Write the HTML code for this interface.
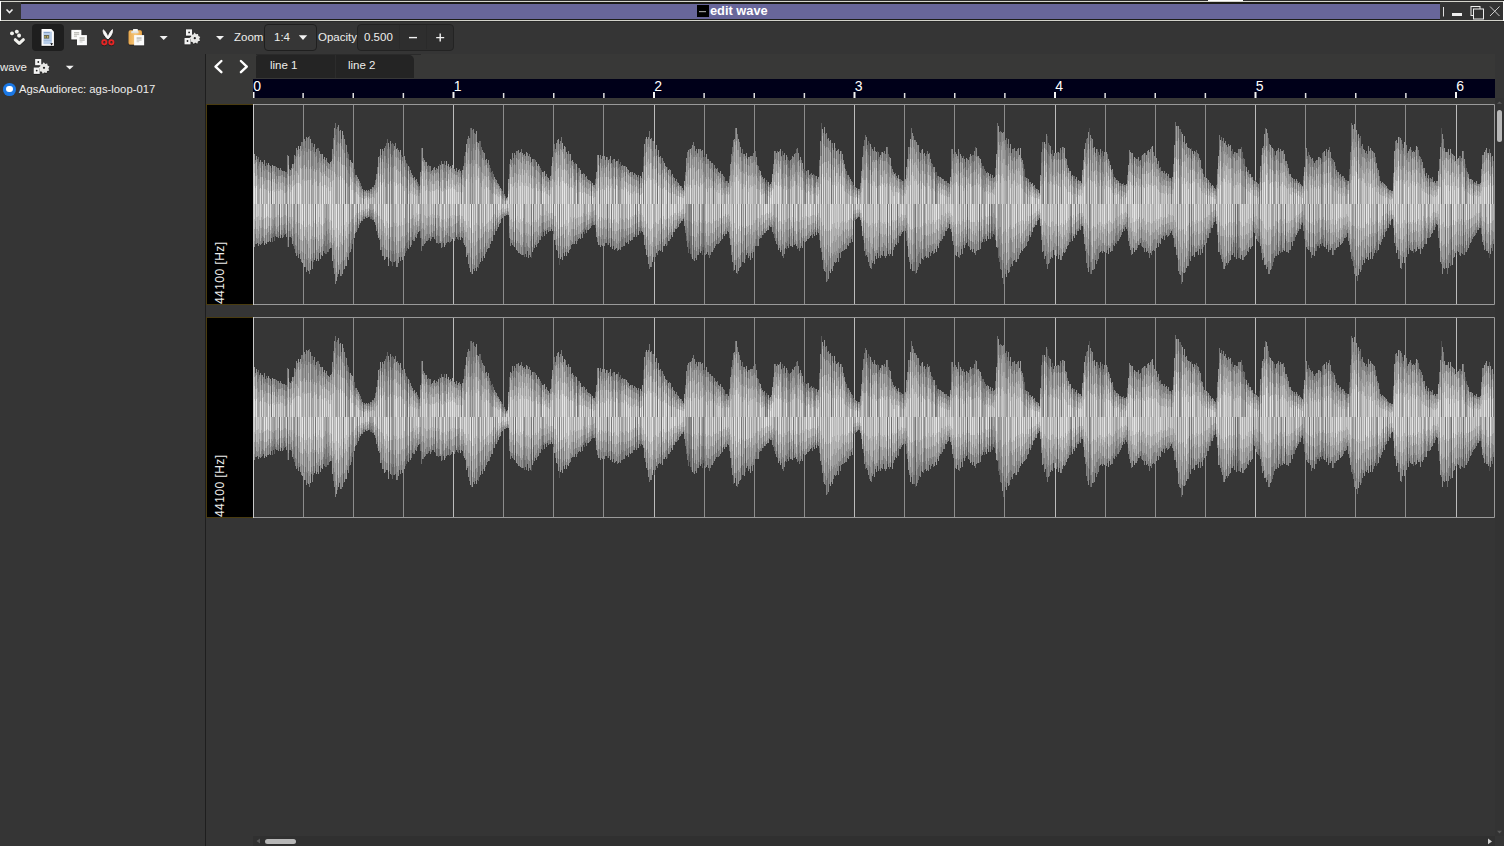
<!DOCTYPE html>
<html><head><meta charset="utf-8">
<style>
*{margin:0;padding:0;box-sizing:border-box}
html,body{width:1504px;height:846px;overflow:hidden;background:#353535;font-family:"Liberation Sans",sans-serif;color:#eeeeec;position:relative}
.a{position:absolute}
.t{position:absolute;white-space:pre;font-size:11.5px;line-height:1;color:#eeeeec}
</style></head><body>
<!-- title bar -->
<div class="a" style="left:0;top:0;width:1504px;height:22px;background:#1c1c18"></div>
<div class="a" style="left:0;top:0;width:1504px;height:1px;background:#2e2e2e"></div>
<div class="a" style="left:0;top:21px;width:1504px;height:1px;background:#2a2a2a"></div>
<div class="a" style="left:0;top:1px;width:1504px;height:1px;background:#d4d4cc"></div>
<div class="a" style="left:0;top:20px;width:1504px;height:1px;background:#d4d4cc"></div>
<div class="a" style="left:0;top:1px;width:1px;height:20px;background:#fff"></div>
<div class="a" style="left:1503px;top:1px;width:1px;height:20px;background:#fff"></div>
<div class="a" style="left:1px;top:2px;width:20px;height:18px;background:#333"></div>
<div class="a" style="left:21px;top:4px;width:1419px;height:15px;background:#68669a"></div>
<div class="a" style="left:1440px;top:2px;width:63px;height:18px;background:#333"></div>
<div class="a" style="left:1208px;top:0;width:35px;height:1px;background:#fff"></div>
<svg class="a" style="left:0;top:0" width="1504" height="22">
 <path d="M6.5 9.5 L9.5 12.5 L12.5 9.5" stroke="#eee" stroke-width="1.6" fill="none"/>
 <rect x="697" y="5" width="12" height="12" fill="#000"/>
 <rect x="699" y="11" width="7" height="1.2" fill="#999"/>
 <line x1="1443.5" y1="7" x2="1443.5" y2="16.5" stroke="#ddd" stroke-width="1"/>
 <rect x="1452" y="13" width="10" height="3" fill="#eee"/>
 <rect x="1471" y="6.5" width="9" height="9" fill="none" stroke="#eee" stroke-width="1"/>
 <rect x="1473.5" y="9" width="10" height="10" fill="#333" stroke="#eee" stroke-width="1"/>
 <path d="M1490 6.5 L1499.5 16 M1499.5 6.5 L1490 16" stroke="#ccc" stroke-width="1"/>
</svg>
<div class="t" style="left:710px;top:5px;font-size:12.8px;font-weight:700;color:#fff">edit wave</div>

<!-- toolbar -->
<div class="a" style="left:32px;top:24px;width:32px;height:27px;background:#1e1e1e;border-radius:4px"></div>
<div class="t" style="left:234px;top:32px">Zoom</div>
<div class="a" style="left:264px;top:24px;width:52.5px;height:26.8px;background:#363636;border:1px solid #1f1f1f;border-radius:4px"></div>
<div class="t" style="left:274px;top:32px">1:4</div>
<div class="t" style="left:318px;top:32px">Opacity</div>
<div class="a" style="left:357px;top:24px;width:97px;height:26.8px;background:#2e2e2e;border:1px solid #232323;border-radius:4px"></div>
<div class="a" style="left:399px;top:25px;width:1px;height:24px;background:#2a2a2a"></div>
<div class="a" style="left:426px;top:25px;width:1px;height:24px;background:#2a2a2a"></div>
<div class="t" style="left:364px;top:32px">0.500</div>

<!-- left panel -->
<div class="t" style="left:0;top:61.8px">wave</div>
<div class="a" style="left:3px;top:82.8px;width:12.8px;height:12.8px;border-radius:50%;background:#1a78e6"></div>
<div class="a" style="left:6.1px;top:85.9px;width:6.6px;height:6.6px;border-radius:50%;background:#fff"></div>
<div class="t" style="left:19px;top:84px;font-size:11.3px">AgsAudiorec: ags-loop-017</div>
<div class="a" style="left:205px;top:54px;width:1px;height:792px;background:#1e1e1e"></div>

<!-- tabs -->
<div class="a" style="left:206px;top:54px;width:1289px;height:50px;background:#383837"></div>
<div class="a" style="left:256px;top:54px;width:165px;height:1px;background:#2a2a2a"></div>
<div class="a" style="left:256px;top:55px;width:158px;height:23px;background:#242424;border-radius:2px 5px 0 0"></div>
<div class="a" style="left:335px;top:55px;width:1px;height:23px;background:#2c2c2c"></div>
<div class="t" style="left:270px;top:60px">line 1</div>
<div class="t" style="left:348px;top:60px">line 2</div>

<!-- ruler -->
<div class="a" style="left:253px;top:79px;width:1242px;height:19px;background:#000019"></div>

<!-- channel boxes -->
<div class="a" style="left:206px;top:104px;width:47px;height:201px;background:#000;border:1px solid #4a3c10;border-right:none"></div>
<div class="a" style="left:206px;top:317px;width:47px;height:201px;background:#000;border:1px solid #4a3c10;border-right:none"></div>

<svg class="a" style="left:0;top:0" width="1504" height="846">
<g id="ch">
<rect x="253" y="104" width="1241" height="200" fill="#363636"/>
<path d="M303.5 104V304M353.5 104V304M403.5 104V304M503.5 104V304M553.5 104V304M603.5 104V304M704.5 104V304M754.5 104V304M804.5 104V304M904.5 104V304M954.5 104V304M1004.5 104V304M1105.5 104V304M1155.5 104V304M1205.5 104V304M1305.5 104V304M1355.5 104V304M1405.5 104V304" stroke="#8c8c8c" stroke-width="1"/>
<path d="M453.5 104V304M654.5 104V304M854.5 104V304M1055.5 104V304M1255.5 104V304M1456.5 104V304" stroke="#bcbcbc" stroke-width="1"/>
<g stroke-width="1" fill="none"><path d="M363.5 190V192M409.5 241V245M515.5 240V248M577.5 167V173M639.5 178V184M713.5 164V172M857.5 188V190M959.5 152V163M989.5 233V239M991.5 231V236M1235.5 247V257M1237.5 250V253M1259.5 178V183M1285.5 239V250" stroke="#464646"/>
<path d="M271.5 168V171M279.5 230V236M287.5 230V247M297.5 253V255M315.5 255V258M343.5 261V270M345.5 144V153M349.5 160V166M357.5 226V230M389.5 147V149M389.5 252V258M407.5 164V171M435.5 234V240M439.5 164V174M461.5 173V179M531.5 246V258M533.5 239V250M553.5 230V234M559.5 254V265M591.5 182V186M595.5 224V228M599.5 158V166M607.5 240V245M611.5 238V246M635.5 231V235M637.5 231V235M643.5 157V166M657.5 155V161M661.5 158V163M661.5 239V250M667.5 167V173M667.5 238V245M671.5 175V176M689.5 241V249M691.5 254V257M699.5 249V252M703.5 247V250M721.5 234V240M741.5 253V266M745.5 248V259M765.5 182V183M767.5 182V186M793.5 236V245M805.5 170V175M831.5 143V153M869.5 143V149M877.5 151V161M887.5 248V251M891.5 243V250M897.5 236V242M915.5 258V274M935.5 172V175M965.5 162V167M967.5 236V242M979.5 240V250M1031.5 232V235M1043.5 142V150M1047.5 136V152M1055.5 153V159M1057.5 246V254M1061.5 150V159M1071.5 233V239M1075.5 230V234M1089.5 128V149M1089.5 256V267M1101.5 153V157M1113.5 174V179M1133.5 159V163M1141.5 156V166M1171.5 179V181M1189.5 256V259M1191.5 148V159M1191.5 245V256M1215.5 217V221M1245.5 166V172M1253.5 227V232M1259.5 236V243M1309.5 246V250M1313.5 247V255M1321.5 159V164M1325.5 241V247M1357.5 135V144M1383.5 232V235M1387.5 225V228M1407.5 246V250M1429.5 178V183M1441.5 128V143M1445.5 263V268M1451.5 250V265M1463.5 244V255M1465.5 164V170M1473.5 183V184M1485.5 241V249M1489.5 251V258M1491.5 157V167" stroke="#505050"/>
<path d="M253.5 237V242M271.5 171V182M279.5 225V230M287.5 225V230M315.5 239V255M345.5 153V166M349.5 246V253M357.5 218V226M363.5 192V196M369.5 216V217M377.5 229V235M381.5 155V162M389.5 239V252M391.5 144V157M401.5 155V164M405.5 246V253M407.5 171V179M409.5 167V174M409.5 232V241M435.5 224V234M439.5 174V178M449.5 236V243M455.5 233V239M471.5 258V274M493.5 232V235M495.5 228V231M505.5 196V197M513.5 242V246M515.5 230V240M531.5 239V246M533.5 234V239M541.5 170V178M553.5 224V230M577.5 173V183M591.5 186V192M607.5 228V240M615.5 162V167M635.5 224V231M637.5 224V231M639.5 184V188M657.5 161V174M661.5 232V239M693.5 248V260M713.5 172V182M721.5 225V234M733.5 263V271M745.5 236V248M765.5 183V188M777.5 238V245M789.5 161V168M789.5 238V244M817.5 228V232M821.5 123V142M831.5 153V169M853.5 218V221M857.5 190V194M863.5 236V240M869.5 149V170M871.5 147V151M879.5 247V256M887.5 238V248M891.5 238V243M897.5 228V236M903.5 181V185M915.5 245V258M919.5 152V162M935.5 175V184M959.5 163V173M967.5 226V236M979.5 229V240M989.5 224V233M991.5 227V231M1027.5 178V182M1043.5 150V166M1055.5 159V173M1057.5 237V246M1077.5 181V184M1079.5 225V229M1121.5 184V186M1127.5 228V231M1133.5 163V173M1141.5 166V174M1177.5 255V258M1179.5 129V140M1189.5 244V256M1207.5 179V183M1235.5 236V247M1237.5 234V250M1253.5 180V184M1253.5 222V227M1259.5 183V189M1261.5 155V166M1277.5 243V254M1279.5 152V163M1281.5 241V252M1285.5 231V239M1293.5 179V182M1309.5 234V246M1313.5 233V247M1327.5 152V158M1349.5 169V175M1355.5 263V268M1357.5 144V157M1377.5 244V251M1387.5 219V225M1407.5 235V246M1429.5 183V186M1451.5 242V250M1463.5 233V244M1465.5 170V183M1469.5 237V245M1493.5 161V168" stroke="#5a5a5a"/>
<path d="M253.5 228V237M261.5 162V172M271.5 182V186M274.5 231V241M275.5 166V172M279.5 217V225M284.5 228V235M286.5 172V178M287.5 218V225M289.5 169V176M289.5 231V237M291.5 234V238M293.5 241V246M294.5 246V249M295.5 156V159M297.5 237V253M303.5 253V260M305.5 141V148M307.5 260V270M309.5 136V149M311.5 143V151M313.5 253V262M326.5 246V254M336.5 129V145M339.5 131V144M341.5 139V146M343.5 243V261M345.5 166V184M347.5 152V158M348.5 154V159M349.5 166V174M349.5 234V246M352.5 239V244M353.5 238V239M354.5 169V177M359.5 221V225M363.5 196V199M363.5 216V219M369.5 191V193M370.5 217V219M371.5 216V219M379.5 156V163M381.5 247V250M386.5 143V159M387.5 139V149M389.5 149V172M392.5 143V155M392.5 254V266M393.5 144V151M393.5 251V262M406.5 163V164M406.5 243V251M407.5 179V186M407.5 242V248M409.5 223V232M418.5 184V187M419.5 186V190M421.5 148V170M428.5 165V172M435.5 218V224M438.5 236V244M439.5 178V186M442.5 241V247M455.5 224V233M458.5 234V240M461.5 179V184M470.5 128V138M471.5 248V258M472.5 130V144M478.5 253V268M480.5 141V155M481.5 252V258M485.5 243V254M490.5 168V173M491.5 172V177M492.5 171V179M493.5 223V232M495.5 221V228M497.5 223V229M502.5 191V194M505.5 197V200M507.5 214V215M509.5 164V174M513.5 158V165M513.5 232V242M515.5 155V165M515.5 218V230M524.5 247V257M531.5 225V239M534.5 159V166M541.5 178V184M542.5 231V237M543.5 229V232M553.5 215V224M557.5 245V251M559.5 238V254M563.5 247V253M574.5 164V169M577.5 183V190M578.5 168V172M584.5 228V234M591.5 192V196M592.5 221V225M595.5 179V183M595.5 220V224M599.5 166V175M603.5 239V243M607.5 219V228M611.5 228V238M612.5 160V164M615.5 167V179M618.5 159V168M619.5 164V167M619.5 243V249M620.5 162V170M625.5 166V176M625.5 238V242M629.5 234V240M635.5 214V224M637.5 217V224M639.5 188V195M640.5 228V233M643.5 166V174M645.5 139V153M647.5 250V257M652.5 141V151M657.5 174V182M661.5 163V174M661.5 219V232M667.5 173V182M667.5 229V238M671.5 176V186M677.5 223V228M686.5 236V241M688.5 243V253M689.5 149V157M689.5 235V241M690.5 248V254M691.5 236V254M693.5 236V248M699.5 236V249M702.5 247V255M703.5 157V161M703.5 233V247M704.5 245V253M705.5 157V164M709.5 161V168M713.5 182V190M713.5 242V250M717.5 236V244M721.5 174V182M721.5 219V225M725.5 181V183M737.5 258V274M741.5 243V253M743.5 253V262M745.5 228V236M747.5 159V165M756.5 239V246M763.5 229V235M765.5 188V194M767.5 186V191M769.5 185V187M774.5 233V238M777.5 231V238M781.5 246V250M782.5 151V160M787.5 157V164M788.5 160V168M789.5 168V176M789.5 229V238M793.5 227V236M796.5 149V153M798.5 241V248M801.5 237V246M803.5 169V173M804.5 169V173M805.5 175V185M807.5 170V177M814.5 175V178M815.5 176V183M815.5 227V232M819.5 235V240M821.5 142V156M823.5 133V144M825.5 134V148M827.5 265V281M831.5 169V182M833.5 150V158M835.5 148V159M839.5 154V164M841.5 151V159M843.5 242V251M853.5 185V189M853.5 214V218M855.5 217V220M857.5 194V198M865.5 249V256M867.5 145V152M868.5 141V155M871.5 151V175M873.5 248V261M877.5 161V171M879.5 233V247M887.5 222V238M888.5 154V164M891.5 221V238M897.5 220V228M900.5 179V182M903.5 185V190M906.5 233V241M909.5 147V154M915.5 227V245M921.5 253V258M923.5 154V159M924.5 250V257M926.5 154V164M932.5 164V169M935.5 184V192M936.5 172V178M937.5 176V180M953.5 154V158M959.5 173V183M963.5 238V245M965.5 167V177M965.5 237V245M967.5 217V226M969.5 240V247M972.5 155V161M973.5 155V162M975.5 147V156M979.5 220V229M981.5 241V243M982.5 166V169M984.5 236V242M989.5 219V224M991.5 216V227M992.5 231V237M994.5 229V235M998.5 247V258M999.5 256V262M1001.5 260V270M1003.5 263V284M1005.5 269V274M1007.5 144V148M1015.5 151V161M1017.5 252V259M1023.5 164V171M1024.5 169V177M1027.5 182V187M1029.5 182V185M1031.5 223V232M1035.5 188V190M1037.5 219V221M1043.5 166V178M1047.5 152V164M1048.5 143V154M1052.5 150V162M1055.5 173V181M1057.5 152V160M1057.5 226V237M1059.5 153V160M1061.5 159V173M1070.5 235V242M1071.5 176V179M1071.5 227V233M1073.5 176V181M1075.5 223V230M1079.5 221V225M1081.5 224V226M1086.5 139V153M1089.5 149V163M1089.5 245V256M1090.5 262V274M1097.5 149V156M1098.5 152V162M1101.5 157V170M1103.5 156V159M1107.5 246V250M1113.5 179V187M1119.5 183V186M1123.5 183V186M1127.5 222V228M1133.5 173V185M1141.5 174V184M1141.5 238V246M1145.5 153V163M1165.5 233V236M1171.5 181V188M1179.5 140V165M1180.5 129V141M1181.5 271V284M1189.5 223V244M1191.5 159V168M1191.5 237V245M1193.5 245V255M1203.5 240V247M1205.5 234V242M1207.5 183V188M1209.5 182V185M1213.5 222V225M1215.5 214V217M1216.5 185V187M1227.5 251V265M1231.5 244V255M1232.5 149V156M1233.5 242V253M1235.5 226V236M1237.5 225V234M1238.5 248V258M1241.5 147V159M1242.5 152V159M1243.5 158V164M1245.5 172V179M1253.5 184V187M1253.5 214V222M1255.5 230V236M1259.5 189V196M1259.5 229V236M1261.5 166V178M1268.5 138V150M1273.5 149V157M1274.5 151V161M1277.5 231V243M1279.5 163V170M1281.5 233V241M1285.5 223V231M1293.5 182V187M1295.5 181V183M1299.5 223V229M1302.5 222V223M1303.5 176V180M1304.5 231V239M1308.5 152V164M1309.5 223V234M1313.5 161V167M1318.5 244V246M1321.5 164V174M1321.5 237V246M1322.5 153V162M1322.5 239V243M1325.5 227V241M1327.5 158V173M1327.5 243V245M1329.5 244V250M1332.5 159V164M1335.5 166V174M1341.5 177V180M1345.5 180V182M1346.5 180V185M1352.5 256V261M1355.5 246V263M1357.5 157V174M1361.5 256V270M1365.5 250V258M1371.5 246V252M1376.5 242V253M1377.5 232V244M1383.5 225V232M1387.5 214V219M1391.5 219V220M1395.5 237V246M1399.5 137V150M1399.5 251V259M1402.5 144V151M1407.5 223V235M1409.5 245V248M1411.5 150V159M1413.5 242V253M1415.5 150V160M1421.5 242V248M1424.5 238V244M1428.5 229V238M1433.5 223V230M1441.5 143V157M1445.5 246V263M1451.5 153V163M1451.5 227V242M1460.5 156V161M1463.5 220V233M1465.5 183V189M1465.5 241V252M1466.5 168V171M1467.5 241V250M1473.5 184V193M1480.5 225V228M1485.5 232V241M1489.5 149V160M1489.5 235V251M1491.5 167V174M1493.5 168V177" stroke="#646464"/>
<path d="M253.5 158V164M255.5 234V244M257.5 159V169M258.5 157V166M262.5 236V243M263.5 164V170M266.5 163V170M269.5 165V172M269.5 235V241M271.5 186V204M272.5 234V242M273.5 233V237M275.5 234V236M277.5 168V179M277.5 231V237M279.5 204V217M281.5 230V235M283.5 171V177M283.5 233V237M285.5 172V178M287.5 204V218M294.5 234V246M297.5 224V237M299.5 250V254M302.5 142V149M305.5 254V267M307.5 138V152M311.5 254V261M312.5 143V150M313.5 147V152M315.5 152V157M315.5 220V239M317.5 148V163M318.5 148V162M321.5 154V161M323.5 159V163M324.5 241V253M325.5 160V171M325.5 246V254M326.5 231V246M328.5 240V252M331.5 243V248M333.5 138V154M333.5 255V268M335.5 123V135M337.5 127V142M337.5 262V277M339.5 269V270M343.5 229V243M345.5 184V204M349.5 174V186M351.5 240V249M355.5 175V178M357.5 215V218M360.5 183V187M363.5 199V204M367.5 191V193M367.5 215V218M369.5 212V216M371.5 189V192M372.5 217V220M373.5 187V188M373.5 219V220M375.5 180V183M377.5 167V174M377.5 224V229M381.5 162V169M383.5 151V162M383.5 245V256M385.5 146V156M386.5 159V163M389.5 172V182M389.5 224V239M391.5 157V165M391.5 251V262M395.5 250V261M399.5 152V160M401.5 164V174M403.5 155V163M405.5 160V170M405.5 237V246M407.5 186V204M409.5 174V183M409.5 204V223M412.5 232V240M413.5 178V180M420.5 231V238M421.5 238V251M423.5 241V246M428.5 238V240M431.5 232V239M433.5 231V237M443.5 238V243M444.5 161V168M445.5 165V171M445.5 235V245M447.5 166V170M447.5 233V242M449.5 228V236M457.5 233V239M459.5 232V237M461.5 184V193M463.5 233V243M464.5 156V163M465.5 152V163M470.5 138V164M472.5 144V160M474.5 133V144M475.5 256V268M477.5 142V147M478.5 238V253M479.5 141V151M479.5 253V264M481.5 147V159M483.5 249V256M487.5 163V168M489.5 165V172M493.5 174V180M501.5 189V191M501.5 217V219M503.5 193V195M515.5 204V218M517.5 151V159M523.5 242V255M531.5 162V166M533.5 227V234M535.5 160V170M537.5 237V244M539.5 236V240M540.5 168V175M542.5 223V231M547.5 228V230M549.5 180V185M549.5 227V231M551.5 224V229M553.5 204V215M554.5 144V152M555.5 240V245M559.5 144V155M559.5 229V238M561.5 250V257M565.5 246V252M567.5 154V164M569.5 154V161M571.5 161V165M573.5 237V244M575.5 163V170M575.5 235V241M577.5 190V204M577.5 237V241M581.5 174V178M583.5 173V180M585.5 177V180M585.5 229V230M587.5 225V230M591.5 196V204M591.5 223V226M595.5 215V220M599.5 175V186M599.5 236V245M601.5 239V245M603.5 159V168M605.5 160V168M607.5 157V165M607.5 204V219M609.5 159V171M609.5 238V243M611.5 220V228M613.5 159V167M613.5 241V246M621.5 237V247M622.5 239V247M627.5 236V242M631.5 172V177M635.5 174V180M635.5 204V214M637.5 177V181M639.5 195V204M641.5 178V181M643.5 174V185M645.5 239V249M654.5 244V262M655.5 149V158M657.5 182V204M661.5 174V184M661.5 204V219M663.5 161V168M667.5 182V190M667.5 219V229M671.5 186V194M673.5 177V183M673.5 230V232M677.5 182V186M679.5 185V187M683.5 218V219M685.5 172V175M685.5 230V233M689.5 221V235M690.5 236V248M691.5 148V155M691.5 223V236M695.5 151V155M695.5 247V258M697.5 153V154M699.5 149V157M699.5 223V236M701.5 244V251M703.5 223V233M704.5 155V161M709.5 246V258M713.5 190V204M715.5 168V173M715.5 239V246M721.5 204V219M724.5 177V183M725.5 229V234M727.5 181V187M729.5 176V179M729.5 234V238M732.5 147V156M733.5 245V263M735.5 260V265M741.5 225V243M742.5 149V161M745.5 156V164M749.5 253V256M751.5 251V253M755.5 151V162M757.5 165V167M758.5 166V173M759.5 237V239M765.5 194V204M766.5 180V184M767.5 191V196M769.5 225V226M773.5 227V234M782.5 160V174M783.5 245V258M785.5 160V163M786.5 243V249M787.5 241V246M791.5 159V168M793.5 220V227M795.5 153V160M798.5 232V241M799.5 160V166M801.5 160V170M803.5 236V241M805.5 185V192M807.5 235V239M810.5 174V179M813.5 174V180M813.5 230V234M814.5 178V187M817.5 222V228M819.5 160V166M821.5 247V252M823.5 258V269M825.5 263V272M827.5 139V147M829.5 256V271M831.5 182V204M845.5 169V174M846.5 171V179M847.5 175V181M849.5 177V183M851.5 236V239M852.5 182V186M857.5 198V204M859.5 214V217M860.5 183V186M863.5 228V236M864.5 140V146M865.5 135V151M869.5 170V180M869.5 253V266M877.5 171V186M878.5 152V159M879.5 157V164M881.5 152V158M883.5 153V161M887.5 204V222M889.5 250V256M891.5 166V173M891.5 204V221M897.5 204V220M901.5 180V182M911.5 128V148M911.5 260V264M913.5 262V271M914.5 262V271M918.5 254V267M919.5 162V173M919.5 252V263M921.5 150V160M923.5 249V260M924.5 235V250M925.5 156V164M931.5 163V172M935.5 192V204M937.5 244V246M939.5 177V181M941.5 234V241M945.5 181V185M947.5 183V188M949.5 184V189M951.5 149V169M959.5 183V204M959.5 246V258M961.5 156V162M961.5 246V249M963.5 156V169M965.5 177V190M967.5 159V170M967.5 204V217M969.5 157V164M971.5 241V249M977.5 156V157M979.5 204V220M981.5 163V168M983.5 166V175M984.5 169V176M985.5 171V175M987.5 231V236M989.5 204V219M991.5 178V181M991.5 204V216M995.5 168V176M995.5 232V240M997.5 123V150M1000.5 131V142M1000.5 257V269M1006.5 138V147M1007.5 263V270M1009.5 148V153M1010.5 257V267M1011.5 153V160M1011.5 258V264M1013.5 149V158M1015.5 255V262M1021.5 244V250M1025.5 177V181M1025.5 238V247M1029.5 231V235M1031.5 214V223M1037.5 189V192M1041.5 152V163M1042.5 142V149M1043.5 178V204M1045.5 144V149M1046.5 251V264M1047.5 164V183M1049.5 145V156M1049.5 253V263M1059.5 250V255M1061.5 173V179M1063.5 147V153M1067.5 165V173M1071.5 217V227M1074.5 176V181M1075.5 216V223M1077.5 184V191M1079.5 213V221M1087.5 253V268M1089.5 163V176M1089.5 231V245M1091.5 138V150M1093.5 148V155M1093.5 259V270M1095.5 153V157M1097.5 249V261M1101.5 170V182M1102.5 151V162M1107.5 154V163M1109.5 161V168M1113.5 187V193M1113.5 240V245M1115.5 236V243M1116.5 235V244M1117.5 180V183M1119.5 231V239M1121.5 186V191M1125.5 185V188M1127.5 175V180M1127.5 214V222M1135.5 158V164M1137.5 159V167M1137.5 241V248M1139.5 161V167M1139.5 239V245M1141.5 184V204M1151.5 147V162M1160.5 167V172M1163.5 235V236M1167.5 176V181M1169.5 230V235M1171.5 188V194M1175.5 122V141M1175.5 244V247M1177.5 126V141M1177.5 237V255M1180.5 141V159M1181.5 132V145M1183.5 142V149M1183.5 267V273M1185.5 257V272M1189.5 148V155M1191.5 168V183M1191.5 226V237M1195.5 152V160M1196.5 150V157M1197.5 246V251M1201.5 168V169M1201.5 245V249M1203.5 174V180M1210.5 227V233M1211.5 225V228M1215.5 210V214M1219.5 242V252M1221.5 137V152M1221.5 249V259M1222.5 141V147M1229.5 255V261M1231.5 151V159M1235.5 152V161M1235.5 204V226M1237.5 204V225M1239.5 247V258M1244.5 159V166M1245.5 179V189M1253.5 204V214M1255.5 180V184M1257.5 183V187M1258.5 236V242M1259.5 196V204M1259.5 218V229M1261.5 178V190M1261.5 244V253M1265.5 128V148M1267.5 262V267M1271.5 147V158M1271.5 254V269M1272.5 254V266M1273.5 253V262M1275.5 155V156M1275.5 251V256M1277.5 222V231M1280.5 245V253M1285.5 204V223M1294.5 233V241M1297.5 181V185M1301.5 185V189M1304.5 225V231M1305.5 149V168M1307.5 156V159M1309.5 204V223M1311.5 159V165M1313.5 225V233M1315.5 161V166M1315.5 244V251M1316.5 244V251M1317.5 160V169M1321.5 174V183M1323.5 235V246M1325.5 223V227M1329.5 147V158M1333.5 160V168M1333.5 244V255M1335.5 243V250M1337.5 172V178M1339.5 175V179M1339.5 239V242M1349.5 175V183M1350.5 152V160M1351.5 123V146M1353.5 257V266M1357.5 269V281M1359.5 138V148M1359.5 263V269M1360.5 136V148M1361.5 146V154M1367.5 154V158M1369.5 247V253M1371.5 150V159M1373.5 152V158M1373.5 244V256M1375.5 157V164M1377.5 168V173M1379.5 176V181M1383.5 215V225M1385.5 229V232M1387.5 188V189M1388.5 189V192M1389.5 221V224M1393.5 173V177M1393.5 226V228M1403.5 148V154M1403.5 253V257M1407.5 153V158M1417.5 245V247M1418.5 150V159M1420.5 157V165M1425.5 176V178M1425.5 239V244M1427.5 178V182M1429.5 186V194M1435.5 223V227M1439.5 241V248M1441.5 157V177M1441.5 257V264M1445.5 230V246M1447.5 260V274M1449.5 253V263M1450.5 255V266M1451.5 204V227M1453.5 249V258M1457.5 245V251M1459.5 156V165M1459.5 244V255M1461.5 244V253M1463.5 204V220M1469.5 179V182M1469.5 231V237M1471.5 236V242M1475.5 230V235M1477.5 184V186M1477.5 225V230M1481.5 228V234M1485.5 223V232M1489.5 228V235M1491.5 174V186M1492.5 241V251M1493.5 177V185" stroke="#6e6e6e"/>
<path d="M253.5 219V228M255.5 160V163M259.5 162V164M259.5 234V244M261.5 172V177M261.5 238V244M263.5 237V241M265.5 166V169M265.5 235V243M267.5 165V170M267.5 233V242M269.5 226V235M271.5 233V238M274.5 224V231M275.5 172V183M279.5 170V176M281.5 170V175M284.5 224V228M285.5 230V234M286.5 178V184M287.5 155V174M289.5 176V184M289.5 223V231M291.5 168V175M291.5 229V234M293.5 164V168M293.5 228V241M295.5 159V171M295.5 245V253M297.5 150V156M297.5 204V224M299.5 149V157M299.5 239V250M301.5 142V151M303.5 146V155M303.5 240V253M305.5 148V169M307.5 244V260M309.5 149V169M309.5 263V274M311.5 151V169M313.5 240V253M315.5 204V220M317.5 252V259M319.5 246V253M321.5 247V255M323.5 244V251M327.5 162V168M327.5 244V252M329.5 164V169M331.5 161V167M336.5 145V151M339.5 144V162M341.5 146V164M341.5 262V276M343.5 135V150M343.5 204V229M347.5 158V170M347.5 253V257M348.5 159V173M349.5 186V204M349.5 224V234M352.5 227V239M353.5 168V173M353.5 223V238M354.5 177V183M355.5 178V184M355.5 231V233M357.5 204V215M359.5 181V186M359.5 219V221M361.5 186V190M361.5 220V221M363.5 212V216M365.5 191V192M365.5 216V217M367.5 193V197M369.5 193V197M369.5 209V212M370.5 214V217M371.5 192V194M371.5 213V216M375.5 223V225M377.5 215V224M379.5 163V176M379.5 237V240M381.5 169V185M381.5 235V247M385.5 249V259M387.5 149V168M387.5 250V257M389.5 182V224M391.5 165V184M392.5 155V168M392.5 237V254M393.5 151V167M393.5 241V251M395.5 237V250M397.5 148V157M399.5 241V257M401.5 174V184M401.5 248V257M405.5 224V237M406.5 164V178M406.5 235V243M407.5 232V242M409.5 183V191M411.5 237V245M413.5 239V241M415.5 180V183M415.5 233V237M417.5 182V186M417.5 227V234M418.5 187V190M419.5 190V193M419.5 226V231M421.5 170V176M423.5 158V162M423.5 229V241M425.5 162V171M425.5 236V243M427.5 166V172M427.5 234V241M428.5 172V181M429.5 166V172M429.5 234V238M431.5 171V173M433.5 168V176M435.5 170V174M435.5 204V218M437.5 169V172M437.5 235V243M438.5 227V236M439.5 186V204M439.5 236V243M441.5 161V169M442.5 231V241M443.5 164V172M445.5 171V178M447.5 170V181M449.5 167V170M449.5 218V228M451.5 168V172M451.5 239V241M453.5 233V238M455.5 171V175M455.5 216V224M457.5 172V175M457.5 223V233M458.5 221V234M459.5 169V173M461.5 193V204M461.5 231V237M467.5 139V153M467.5 253V255M469.5 138V144M469.5 253V268M471.5 128V151M471.5 230V248M473.5 259V269M475.5 134V150M477.5 259V267M480.5 155V167M481.5 159V172M481.5 238V252M483.5 152V160M483.5 234V249M485.5 160V165M485.5 231V243M489.5 238V248M490.5 173V181M491.5 177V183M491.5 237V241M492.5 179V187M493.5 215V223M495.5 179V183M495.5 215V221M497.5 218V223M499.5 186V189M502.5 194V197M505.5 200V201M505.5 214V216M507.5 211V214M509.5 174V179M509.5 233V238M511.5 160V167M511.5 240V243M513.5 165V177M513.5 222V232M515.5 165V173M517.5 241V251M519.5 243V253M521.5 149V163M521.5 247V255M523.5 155V161M524.5 233V247M525.5 156V164M525.5 247V254M527.5 246V251M529.5 154V165M529.5 248V255M531.5 166V178M531.5 204V225M533.5 159V167M533.5 204V227M534.5 166V177M535.5 242V245M537.5 166V171M539.5 166V173M541.5 184V193M541.5 232V236M543.5 172V179M543.5 222V229M545.5 176V181M545.5 229V231M547.5 177V182M549.5 185V190M551.5 166V175M553.5 151V161M555.5 149V153M557.5 236V245M559.5 204V229M561.5 137V150M561.5 236V250M563.5 149V154M563.5 234V247M565.5 147V158M567.5 246V252M573.5 162V169M573.5 229V237M574.5 169V182M575.5 170V180M578.5 172V180M581.5 233V234M583.5 229V232M584.5 222V228M585.5 180V187M587.5 179V182M589.5 180V184M589.5 224V229M592.5 218V221M593.5 185V187M593.5 222V225M595.5 183V189M595.5 204V215M597.5 238V242M599.5 186V204M601.5 159V168M603.5 228V239M605.5 239V243M611.5 204V220M612.5 164V179M615.5 179V189M617.5 244V251M618.5 168V175M619.5 167V177M619.5 229V243M620.5 170V181M623.5 166V173M623.5 237V246M625.5 176V182M625.5 229V238M627.5 169V174M629.5 173V176M629.5 228V234M631.5 233V240M633.5 175V179M633.5 232V237M637.5 204V217M639.5 227V231M640.5 220V228M641.5 181V188M641.5 226V231M643.5 185V204M643.5 234V235M645.5 153V165M647.5 139V147M647.5 236V250M649.5 131V147M649.5 256V269M652.5 151V169M653.5 247V257M654.5 237V244M655.5 158V169M655.5 246V257M657.5 245V255M659.5 241V250M661.5 184V204M663.5 168V179M663.5 239V246M667.5 190V219M669.5 169V176M669.5 233V241M671.5 194V204M671.5 229V235M673.5 221V230M677.5 219V223M679.5 219V224M681.5 186V190M683.5 190V192M686.5 226V236M687.5 152V163M687.5 240V247M688.5 232V243M689.5 157V168M689.5 204V221M691.5 204V223M693.5 142V157M693.5 223V236M697.5 247V255M699.5 204V223M701.5 151V158M702.5 233V247M703.5 161V172M703.5 204V223M704.5 236V245M705.5 164V177M705.5 248V255M707.5 159V164M707.5 245V252M709.5 168V179M711.5 163V168M711.5 243V252M713.5 234V242M715.5 228V239M717.5 168V176M717.5 227V236M719.5 237V243M721.5 182V188M723.5 176V182M723.5 232V234M725.5 183V188M727.5 228V231M731.5 154V162M731.5 245V255M733.5 140V152M733.5 231V245M735.5 128V145M737.5 134V150M737.5 245V258M739.5 142V157M739.5 259V268M741.5 153V161M741.5 204V225M742.5 161V171M743.5 154V157M743.5 241V253M745.5 204V228M747.5 165V175M747.5 247V253M749.5 157V166M753.5 153V162M753.5 246V252M756.5 231V239M757.5 167V178M757.5 235V246M759.5 170V176M761.5 175V178M761.5 231V238M763.5 179V182M763.5 222V229M765.5 229V233M767.5 196V204M767.5 227V230M769.5 187V192M771.5 182V186M771.5 224V227M773.5 164V169M774.5 222V233M775.5 151V159M775.5 234V241M777.5 151V160M777.5 218V231M779.5 151V164M779.5 245V248M781.5 156V157M781.5 231V246M783.5 155V161M785.5 163V174M785.5 242V248M787.5 164V177M788.5 168V177M789.5 176V188M789.5 218V229M791.5 233V246M793.5 204V220M795.5 160V172M795.5 240V244M796.5 153V170M797.5 148V162M797.5 244V249M799.5 240V251M801.5 230V237M803.5 173V181M804.5 173V182M805.5 192V204M807.5 177V184M809.5 175V179M811.5 173V177M811.5 229V235M815.5 183V188M815.5 221V227M817.5 179V182M817.5 215V222M819.5 226V235M821.5 156V177M823.5 144V163M825.5 148V162M827.5 245V265M829.5 141V150M831.5 253V269M833.5 158V170M835.5 159V176M839.5 164V176M839.5 249V253M841.5 159V173M843.5 231V242M845.5 243V249M847.5 239V245M849.5 238V243M851.5 181V185M853.5 189V193M853.5 211V214M855.5 187V190M855.5 214V217M857.5 217V218M859.5 189V191M863.5 146V155M863.5 221V228M865.5 238V249M867.5 152V167M867.5 252V257M868.5 155V164M869.5 180V204M871.5 175V183M871.5 260V269M873.5 151V160M873.5 238V248M875.5 151V160M875.5 253V256M877.5 186V204M877.5 250V253M879.5 228V233M883.5 243V251M885.5 154V161M887.5 147V162M888.5 164V173M889.5 157V165M893.5 239V250M895.5 173V178M895.5 238V244M897.5 178V181M899.5 179V182M899.5 233V236M900.5 182V188M901.5 230V234M903.5 190V195M903.5 226V231M905.5 228V231M906.5 225V233M907.5 240V246M909.5 154V161M909.5 260V262M913.5 136V147M915.5 140V154M915.5 204V227M917.5 145V159M917.5 256V270M919.5 173V183M921.5 241V253M923.5 159V171M925.5 248V256M926.5 164V180M927.5 151V159M927.5 245V257M929.5 153V162M929.5 245V252M931.5 246V253M932.5 169V179M933.5 244V254M936.5 178V184M937.5 180V186M939.5 240V243M941.5 178V184M943.5 232V236M945.5 227V231M947.5 223V229M949.5 189V192M953.5 158V173M953.5 236V245M955.5 152V157M955.5 246V255M957.5 245V252M963.5 234V238M965.5 190V204M965.5 227V237M969.5 228V240M971.5 156V163M972.5 161V173M973.5 162V172M973.5 242V249M975.5 156V172M975.5 240V255M977.5 241V250M979.5 158V165M981.5 226V241M982.5 169V180M983.5 234V239M984.5 226V236M985.5 175V184M985.5 234V239M987.5 172V177M989.5 176V181M992.5 224V231M993.5 178V183M993.5 231V234M994.5 224V229M995.5 227V232M997.5 247V248M998.5 235V247M999.5 132V145M999.5 239V256M1001.5 243V260M1003.5 254V263M1005.5 140V150M1005.5 243V269M1006.5 147V165M1007.5 148V166M1009.5 259V272M1015.5 161V170M1015.5 236V255M1017.5 149V159M1017.5 239V252M1019.5 248V255M1021.5 158V162M1023.5 171V181M1023.5 243V249M1024.5 177V185M1027.5 187V195M1027.5 236V242M1029.5 185V191M1031.5 204V214M1033.5 227V228M1035.5 190V193M1035.5 221V225M1037.5 215V219M1039.5 193V194M1039.5 215V218M1041.5 234V240M1043.5 245V251M1047.5 183V204M1047.5 254V269M1048.5 154V165M1049.5 235V253M1051.5 154V159M1051.5 251V257M1052.5 162V176M1053.5 247V250M1055.5 181V204M1055.5 244V250M1057.5 160V172M1057.5 204V226M1059.5 160V174M1061.5 179V204M1063.5 248V252M1065.5 158V161M1065.5 247V252M1069.5 171V173M1069.5 233V242M1070.5 226V235M1071.5 179V184M1071.5 204V217M1073.5 181V187M1075.5 179V183M1075.5 204V216M1077.5 191V194M1077.5 229V231M1081.5 217V224M1083.5 160V169M1083.5 227V234M1085.5 245V251M1086.5 153V166M1087.5 138V150M1089.5 176V231M1090.5 242V262M1091.5 150V171M1091.5 262V274M1095.5 255V260M1097.5 156V171M1098.5 162V172M1099.5 155V165M1099.5 245V253M1101.5 182V204M1101.5 246V251M1103.5 159V174M1103.5 243V251M1105.5 154V161M1107.5 231V246M1111.5 170V172M1111.5 243V251M1113.5 193V204M1115.5 178V184M1116.5 228V235M1117.5 235V241M1119.5 186V191M1121.5 191V196M1121.5 229V235M1123.5 186V192M1123.5 225V229M1125.5 188V193M1125.5 224V227M1129.5 238V246M1131.5 153V163M1131.5 248V255M1133.5 185V204M1141.5 227V238M1143.5 154V166M1143.5 242V248M1145.5 163V174M1145.5 242V248M1147.5 244V251M1149.5 152V163M1149.5 246V258M1151.5 162V170M1151.5 246V255M1153.5 152V163M1153.5 240V250M1155.5 160V167M1157.5 164V169M1157.5 239V243M1159.5 168V173M1159.5 235V243M1163.5 173V179M1165.5 174V178M1165.5 224V233M1167.5 230V237M1169.5 178V182M1171.5 194V204M1173.5 164V172M1173.5 236V238M1175.5 141V157M1177.5 232V237M1179.5 165V179M1179.5 259V274M1181.5 145V166M1181.5 253V271M1185.5 144V155M1187.5 147V158M1189.5 204V223M1191.5 183V226M1193.5 233V245M1195.5 248V252M1197.5 153V162M1199.5 158V167M1199.5 246V249M1203.5 233V240M1205.5 180V181M1205.5 229V234M1207.5 188V194M1207.5 231V238M1209.5 185V191M1211.5 186V189M1213.5 186V191M1213.5 218V222M1215.5 189V191M1215.5 204V210M1216.5 187V192M1217.5 169V174M1217.5 232V235M1219.5 135V150M1223.5 257V269M1225.5 257V266M1227.5 147V154M1227.5 241V251M1231.5 238V244M1232.5 156V168M1233.5 154V157M1233.5 240V242M1237.5 153V160M1238.5 236V248M1239.5 149V157M1241.5 159V171M1242.5 159V171M1243.5 164V171M1243.5 250V260M1245.5 189V204M1245.5 249V256M1247.5 172V175M1249.5 174V178M1249.5 240V247M1251.5 177V178M1251.5 238V247M1253.5 187V195M1255.5 224V230M1257.5 233V241M1259.5 204V218M1263.5 146V153M1263.5 253V258M1268.5 150V165M1269.5 144V152M1273.5 157V171M1274.5 161V174M1277.5 150V159M1279.5 170V186M1281.5 151V163M1281.5 226V233M1283.5 150V159M1283.5 248V250M1285.5 161V166M1287.5 164V171M1287.5 243V252M1289.5 174V176M1289.5 242V250M1291.5 177V183M1291.5 237V242M1293.5 187V192M1293.5 234V241M1295.5 183V189M1295.5 234V237M1297.5 185V191M1297.5 228V233M1299.5 182V187M1299.5 219V223M1301.5 222V225M1302.5 217V222M1303.5 180V189M1303.5 226V231M1307.5 242V249M1308.5 164V177M1309.5 155V163M1311.5 165V176M1311.5 247V258M1313.5 167V177M1313.5 204V225M1315.5 166V180M1317.5 242V246M1318.5 232V244M1319.5 157V165M1319.5 240V248M1321.5 183V204M1321.5 227V237M1322.5 162V175M1322.5 229V239M1323.5 152V162M1325.5 156V161M1325.5 204V223M1327.5 173V185M1327.5 233V243M1329.5 229V244M1331.5 158V166M1332.5 164V177M1333.5 168V179M1335.5 174V179M1337.5 240V247M1341.5 180V188M1343.5 176V181M1343.5 234V241M1345.5 182V187M1345.5 235V238M1346.5 185V189M1347.5 181V185M1347.5 229V233M1349.5 183V190M1349.5 238V245M1351.5 249V259M1352.5 242V256M1353.5 129V139M1355.5 132V142M1355.5 231V246M1357.5 174V204M1357.5 246V269M1359.5 245V263M1361.5 242V256M1363.5 257V260M1365.5 153V159M1365.5 239V250M1367.5 245V257M1371.5 237V246M1373.5 236V244M1375.5 246V250M1376.5 234V242M1377.5 220V232M1379.5 181V187M1381.5 183V185M1381.5 233V242M1383.5 183V187M1383.5 204V215M1385.5 185V187M1387.5 204V214M1391.5 191V193M1391.5 214V219M1395.5 141V150M1395.5 233V237M1397.5 247V250M1399.5 150V166M1399.5 239V251M1401.5 140V150M1401.5 256V269M1402.5 151V166M1407.5 204V223M1409.5 235V245M1411.5 159V175M1411.5 242V251M1413.5 230V242M1415.5 160V169M1415.5 242V252M1417.5 147V162M1420.5 165V173M1421.5 159V165M1421.5 234V242M1423.5 168V171M1424.5 226V238M1425.5 228V239M1428.5 225V229M1429.5 194V204M1429.5 232V238M1431.5 179V182M1433.5 220V223M1435.5 183V185M1439.5 159V169M1439.5 228V241M1441.5 177V204M1443.5 139V151M1445.5 152V158M1445.5 204V230M1449.5 155V159M1451.5 163V173M1453.5 155V160M1460.5 161V174M1461.5 158V162M1463.5 151V166M1465.5 189V204M1465.5 232V241M1466.5 171V181M1467.5 172V177M1467.5 234V241M1469.5 219V231M1471.5 179V185M1473.5 193V204M1473.5 232V237M1475.5 183V185M1479.5 184V187M1479.5 223V228M1480.5 218V225M1483.5 155V163M1483.5 240V245M1485.5 150V160M1485.5 204V223M1487.5 153V160M1489.5 160V174M1489.5 204V228M1491.5 186V204M1491.5 244V248M1493.5 239V244" stroke="#787878"/>
<path d="M253.5 164V175M253.5 204V219M255.5 227V234M257.5 169V175M257.5 239V243M258.5 166V179M262.5 227V236M263.5 170V179M266.5 170V180M269.5 172V180M272.5 228V234M273.5 166V171M273.5 226V233M274.5 218V224M275.5 226V234M276.5 167V176M277.5 179V184M277.5 227V231M281.5 223V230M283.5 177V183M283.5 225V233M285.5 178V186M286.5 184V192M294.5 220V234M301.5 251V262M302.5 149V168M305.5 238V254M307.5 152V169M311.5 239V254M312.5 150V166M313.5 152V171M315.5 157V172M317.5 163V168M318.5 162V170M319.5 151V158M321.5 161V173M323.5 163V172M324.5 235V241M325.5 171V176M325.5 236V246M326.5 221V231M328.5 229V240M329.5 243V249M331.5 235V243M333.5 154V164M333.5 243V255M334.5 259V274M335.5 135V157M335.5 268V284M337.5 142V161M337.5 246V262M339.5 247V269M345.5 257V266M348.5 173V187M349.5 204V224M351.5 162V168M351.5 232V240M352.5 219V227M357.5 177V181M367.5 212V215M370.5 210V214M372.5 213V217M373.5 188V193M373.5 213V219M375.5 183V190M376.5 174V179M377.5 174V182M383.5 162V173M383.5 236V245M385.5 156V169M386.5 163V183M391.5 184V204M391.5 241V251M392.5 168V179M392.5 227V237M395.5 143V157M397.5 259V267M399.5 160V172M402.5 157V161M403.5 163V177M403.5 249V254M405.5 170V177M405.5 204V224M406.5 178V188M411.5 173V177M412.5 229V232M413.5 180V187M418.5 190V196M420.5 223V231M421.5 229V238M428.5 225V238M430.5 166V174M431.5 224V232M433.5 224V231M436.5 168V173M438.5 218V227M441.5 242V248M443.5 227V238M444.5 168V178M445.5 231V235M450.5 237V242M453.5 168V175M455.5 204V216M459.5 225V232M463.5 166V170M463.5 227V233M464.5 163V177M465.5 163V170M465.5 237V247M468.5 136V148M470.5 164V179M471.5 204V230M472.5 160V183M473.5 129V148M474.5 144V160M475.5 245V256M477.5 147V164M478.5 225V238M479.5 151V166M479.5 240V253M482.5 150V158M487.5 243V249M489.5 172V180M490.5 181V190M492.5 187V194M493.5 204V215M495.5 204V215M497.5 183V185M498.5 184V186M499.5 220V224M501.5 191V196M501.5 214V217M502.5 197V199M503.5 195V198M503.5 214V216M504.5 194V196M505.5 201V204M507.5 197V198M510.5 239V246M513.5 204V222M516.5 151V158M517.5 159V175M519.5 153V159M523.5 233V242M524.5 224V233M526.5 243V257M527.5 153V161M535.5 170V178M537.5 232V237M539.5 226V236M540.5 175V184M541.5 193V204M542.5 216V223M547.5 221V228M549.5 221V227M551.5 219V224M554.5 152V167M555.5 227V240M557.5 140V155M559.5 155V165M560.5 141V149M565.5 230V246M567.5 164V170M569.5 161V179M569.5 246V250M570.5 240V249M571.5 165V178M571.5 241V245M575.5 225V235M577.5 227V237M579.5 168V176M579.5 234V238M581.5 178V182M583.5 180V185M585.5 222V229M586.5 227V233M587.5 220V225M591.5 218V223M597.5 155V171M599.5 229V236M601.5 228V239M603.5 168V174M605.5 168V177M607.5 165V177M609.5 171V179M609.5 228V238M611.5 163V168M612.5 179V184M613.5 167V176M613.5 231V241M615.5 189V204M615.5 239V249M617.5 161V169M618.5 175V190M621.5 166V173M621.5 229V237M622.5 165V170M622.5 229V239M627.5 228V236M631.5 177V185M632.5 233V240M635.5 180V187M637.5 181V187M640.5 215V220M645.5 227V239M651.5 138V149M651.5 254V267M653.5 141V157M659.5 157V163M662.5 158V170M665.5 166V173M665.5 238V244M666.5 237V246M673.5 183V188M675.5 181V190M675.5 228V229M676.5 179V187M677.5 186V191M679.5 187V193M681.5 220V221M683.5 214V218M685.5 175V186M685.5 223V230M686.5 220V226M688.5 221V232M690.5 222V236M691.5 155V169M693.5 204V223M695.5 155V172M695.5 241V247M697.5 154V170M699.5 157V169M701.5 233V244M704.5 161V174M709.5 236V246M710.5 246V255M714.5 165V169M715.5 173V183M718.5 238V244M719.5 173V179M724.5 183V188M725.5 222V229M727.5 187V188M729.5 179V185M729.5 222V234M735.5 246V260M742.5 252V262M745.5 164V172M749.5 235V253M751.5 156V163M751.5 238V251M752.5 156V163M754.5 151V160M755.5 162V174M755.5 239V246M758.5 173V181M759.5 222V237M760.5 235V238M766.5 184V190M769.5 218V225M773.5 221V227M777.5 204V218M782.5 174V184M783.5 234V245M787.5 230V241M788.5 177V189M789.5 188V218M791.5 168V179M793.5 157V163M796.5 170V185M798.5 222V232M799.5 166V172M801.5 170V177M803.5 228V236M804.5 182V190M805.5 236V242M807.5 225V235M809.5 231V238M810.5 179V188M812.5 232V238M813.5 180V188M813.5 223V230M814.5 187V193M819.5 166V176M821.5 177V204M821.5 234V247M823.5 245V258M825.5 250V263M826.5 133V147M826.5 267V282M827.5 147V168M829.5 246V256M832.5 143V148M833.5 254V266M835.5 255V263M837.5 150V165M837.5 253V258M840.5 248V258M841.5 241V252M843.5 160V165M845.5 174V181M846.5 179V184M847.5 181V186M849.5 183V191M850.5 237V243M851.5 227V236M852.5 186V190M853.5 204V211M854.5 218V221M858.5 216V217M859.5 212V214M860.5 186V193M861.5 171V176M861.5 222V226M864.5 146V164M865.5 151V165M868.5 164V183M869.5 237V253M871.5 183V204M878.5 159V171M879.5 164V170M879.5 204V228M881.5 158V175M881.5 247V255M883.5 161V171M884.5 151V161M885.5 246V258M888.5 173V186M889.5 234V250M891.5 173V178M892.5 169V175M893.5 172V176M896.5 176V180M898.5 235V243M901.5 182V189M903.5 195V204M905.5 179V180M907.5 159V169M908.5 147V159M911.5 148V163M911.5 243V260M913.5 244V262M914.5 243V262M918.5 241V254M919.5 183V204M919.5 247V252M921.5 160V170M923.5 239V249M924.5 225V235M925.5 164V174M926.5 180V183M930.5 245V256M931.5 172V180M932.5 179V188M933.5 167V172M935.5 244V249M936.5 184V190M937.5 230V244M939.5 181V188M941.5 225V234M943.5 179V186M945.5 185V190M946.5 181V186M947.5 188V192M948.5 183V187M949.5 220V224M951.5 169V182M951.5 228V232M957.5 156V159M959.5 233V246M961.5 162V172M961.5 232V246M963.5 169V175M967.5 170V179M969.5 164V176M972.5 173V186M974.5 151V161M977.5 157V175M981.5 168V179M982.5 180V190M983.5 175V185M984.5 176V180M984.5 220V226M987.5 224V231M991.5 181V189M992.5 217V224M995.5 176V181M997.5 150V169M998.5 229V235M1000.5 142V161M1000.5 245V257M1001.5 132V146M1003.5 132V141M1007.5 252V263M1009.5 153V170M1010.5 238V257M1011.5 160V171M1011.5 240V258M1012.5 149V161M1013.5 158V173M1013.5 253V261M1021.5 236V244M1024.5 185V192M1025.5 181V187M1025.5 230V238M1027.5 195V204M1029.5 224V231M1030.5 182V187M1033.5 186V189M1037.5 192V195M1041.5 163V176M1042.5 149V162M1044.5 245V259M1045.5 149V165M1046.5 134V150M1046.5 239V251M1048.5 165V182M1049.5 156V168M1053.5 156V160M1059.5 236V250M1060.5 148V160M1061.5 249V260M1063.5 153V174M1067.5 173V177M1067.5 241V246M1070.5 216V226M1073.5 234V236M1074.5 181V188M1077.5 194V204M1079.5 181V184M1079.5 204V213M1081.5 183V185M1085.5 143V157M1086.5 249V263M1087.5 246V253M1090.5 231V242M1093.5 155V172M1093.5 241V259M1095.5 157V170M1096.5 249V264M1097.5 237V249M1098.5 172V183M1098.5 246V259M1102.5 162V172M1105.5 243V254M1107.5 163V173M1109.5 168V180M1109.5 246V248M1112.5 243V251M1113.5 228V240M1115.5 233V236M1117.5 183V190M1119.5 224V231M1120.5 183V186M1124.5 225V231M1127.5 180V186M1127.5 204V214M1129.5 150V163M1133.5 239V248M1135.5 164V178M1135.5 243V250M1137.5 167V174M1139.5 167V179M1139.5 227V239M1144.5 240V252M1147.5 151V162M1148.5 248V253M1154.5 239V251M1155.5 239V246M1160.5 172V183M1161.5 171V177M1161.5 235V238M1163.5 225V235M1164.5 171V180M1167.5 181V186M1169.5 225V230M1171.5 230V231M1172.5 229V235M1174.5 238V247M1175.5 233V244M1177.5 141V160M1177.5 204V232M1179.5 179V204M1180.5 159V175M1183.5 149V162M1183.5 241V267M1185.5 246V257M1187.5 256V266M1188.5 251V266M1189.5 155V169M1193.5 154V158M1195.5 160V172M1196.5 157V172M1197.5 231V246M1198.5 154V160M1200.5 240V255M1201.5 169V179M1201.5 235V245M1202.5 169V173M1203.5 180V185M1207.5 194V204M1209.5 229V233M1210.5 221V227M1211.5 221V225M1216.5 192V196M1219.5 234V242M1221.5 152V169M1221.5 236V249M1222.5 147V167M1223.5 138V151M1225.5 141V152M1229.5 146V157M1229.5 235V255M1231.5 159V168M1235.5 161V174M1238.5 149V156M1239.5 238V247M1241.5 251V255M1244.5 166V176M1247.5 243V251M1248.5 170V177M1253.5 195V204M1255.5 184V190M1257.5 187V191M1258.5 229V236M1261.5 190V204M1261.5 235V244M1265.5 148V156M1265.5 264V265M1267.5 133V151M1267.5 246V262M1268.5 165V180M1268.5 261V274M1269.5 261V274M1271.5 158V172M1271.5 241V254M1272.5 237V254M1273.5 236V253M1275.5 156V174M1275.5 233V251M1277.5 204V222M1279.5 186V204M1279.5 241V251M1280.5 236V245M1281.5 204V226M1293.5 192V204M1294.5 227V233M1301.5 189V191M1302.5 211V217M1304.5 215V225M1305.5 168V176M1305.5 241V242M1307.5 159V176M1310.5 157V167M1315.5 236V244M1317.5 169V176M1318.5 220V232M1322.5 175V184M1322.5 219V229M1327.5 185V204M1329.5 158V173M1331.5 244V248M1333.5 235V244M1335.5 233V243M1337.5 178V183M1339.5 179V186M1339.5 230V239M1341.5 237V244M1346.5 230V237M1349.5 190V204M1350.5 160V174M1351.5 146V166M1352.5 225V242M1353.5 238V257M1354.5 260V274M1355.5 204V231M1359.5 148V164M1360.5 148V168M1361.5 154V166M1362.5 144V157M1363.5 149V157M1366.5 151V162M1367.5 158V168M1369.5 151V162M1369.5 234V247M1371.5 159V171M1373.5 158V174M1375.5 164V179M1377.5 173V185M1377.5 204V220M1379.5 241V244M1385.5 224V229M1387.5 189V193M1388.5 192V194M1389.5 190V191M1389.5 216V221M1393.5 177V183M1393.5 220V226M1397.5 143V148M1398.5 250V259M1403.5 154V168M1403.5 239V253M1405.5 148V155M1405.5 248V256M1406.5 145V160M1407.5 158V172M1409.5 149V162M1413.5 151V159M1417.5 233V245M1418.5 159V168M1419.5 156V160M1419.5 246V249M1423.5 240V247M1427.5 182V187M1427.5 233V238M1430.5 178V182M1431.5 228V234M1432.5 177V182M1433.5 182V183M1435.5 217V223M1437.5 181V186M1437.5 221V225M1438.5 231V238M1441.5 241V257M1443.5 262V268M1447.5 152V159M1447.5 243V260M1449.5 240V253M1450.5 239V255M1453.5 240V249M1455.5 245V253M1457.5 159V166M1457.5 231V245M1459.5 165V174M1459.5 231V244M1461.5 231V244M1462.5 246V254M1464.5 248V255M1469.5 182V188M1471.5 227V236M1472.5 234V239M1475.5 223V230M1477.5 186V191M1477.5 220V225M1481.5 169V176M1481.5 221V228M1482.5 155V164M1487.5 243V251M1492.5 231V241M1493.5 185V204" stroke="#828282"/>
<path d="M253.5 175V187M254.5 241V247M255.5 163V176M255.5 221V227M256.5 238V244M258.5 238V246M259.5 164V179M259.5 226V234M260.5 241V245M261.5 177V189M261.5 228V238M262.5 220V227M263.5 179V184M263.5 228V237M264.5 160V171M265.5 169V178M265.5 229V235M267.5 170V180M267.5 228V233M269.5 218V226M271.5 226V233M273.5 220V226M275.5 183V189M276.5 234V237M277.5 184V189M278.5 168V176M278.5 232V238M280.5 168V176M281.5 175V183M281.5 217V223M282.5 171V175M282.5 230V238M284.5 171V177M284.5 215V224M285.5 186V193M285.5 223V230M286.5 192V204M288.5 240V247M289.5 184V189M289.5 217V223M290.5 170V176M290.5 231V237M291.5 175V184M291.5 219V229M293.5 168V180M293.5 221V228M294.5 155V163M294.5 204V220M295.5 171V184M296.5 148V157M296.5 246V256M297.5 156V173M298.5 250V258M299.5 223V239M303.5 155V166M303.5 221V240M304.5 139V151M305.5 169V180M306.5 137V152M306.5 259V272M307.5 169V180M307.5 232V244M308.5 137V149M309.5 169V180M309.5 248V263M311.5 169V178M312.5 258V269M313.5 221V240M314.5 144V154M316.5 149V156M317.5 168V186M317.5 239V252M318.5 170V186M319.5 235V246M320.5 154V163M326.5 158V166M326.5 204V221M327.5 168V177M327.5 234V244M329.5 169V178M331.5 167V175M332.5 149V159M334.5 128V140M335.5 157V174M336.5 151V177M338.5 125V143M339.5 162V180M340.5 264V276M341.5 164V180M341.5 244V262M343.5 150V165M344.5 139V153M346.5 145V158M347.5 170V184M347.5 239V253M348.5 247V260M350.5 243V252M353.5 173V178M353.5 219V223M354.5 183V193M355.5 184V192M355.5 222V231M356.5 175V181M356.5 225V232M359.5 212V219M360.5 187V192M361.5 190V193M361.5 215V220M362.5 217V221M363.5 210V212M364.5 190V192M364.5 216V219M365.5 192V196M365.5 213V216M367.5 197V200M368.5 190V193M369.5 197V199M369.5 204V209M370.5 189V192M371.5 194V198M371.5 210V213M372.5 187V190M372.5 210V213M373.5 193V197M373.5 209V213M374.5 185V189M375.5 217V223M376.5 227V231M377.5 182V192M377.5 204V215M379.5 176V183M379.5 227V237M381.5 185V204M381.5 219V235M382.5 247V256M383.5 173V182M383.5 223V236M384.5 148V156M385.5 169V187M385.5 240V249M386.5 183V204M387.5 168V184M387.5 235V250M390.5 141V154M391.5 227V241M392.5 179V204M393.5 167V182M393.5 222V241M394.5 146V150M394.5 254V262M395.5 226V237M396.5 253V267M397.5 157V169M398.5 150V158M399.5 225V241M400.5 252V261M401.5 184V204M401.5 237V248M403.5 177V186M406.5 223V235M407.5 222V232M409.5 191V204M410.5 170V177M411.5 228V237M412.5 175V178M412.5 218V229M413.5 225V239M414.5 235V241M415.5 183V189M415.5 222V233M416.5 179V185M416.5 230V238M417.5 221V227M419.5 193V196M419.5 219V226M420.5 172V177M420.5 214V223M421.5 176V189M422.5 239V246M423.5 223V229M424.5 160V166M424.5 239V244M425.5 171V180M426.5 234V241M427.5 172V185M427.5 226V234M428.5 181V191M428.5 216V225M429.5 172V179M430.5 236V241M431.5 173V181M432.5 233V237M433.5 176V184M433.5 218V224M434.5 231V239M435.5 174V181M436.5 236V243M437.5 172V180M437.5 230V235M439.5 226V236M440.5 165V170M441.5 169V178M442.5 220V231M443.5 172V180M444.5 178V188M445.5 178V189M446.5 235V243M447.5 181V186M447.5 228V233M448.5 236V242M449.5 204V218M451.5 172V178M451.5 227V239M453.5 225V233M454.5 232V241M455.5 175V186M456.5 168V175M457.5 175V182M457.5 216V223M458.5 216V221M459.5 173V183M459.5 215V225M460.5 171V177M461.5 223V231M462.5 231V238M464.5 177V187M465.5 170V181M467.5 153V164M468.5 253V264M469.5 144V164M469.5 240V253M470.5 179V204M471.5 151V163M472.5 183V204M473.5 242V259M474.5 265V271M475.5 231V245M477.5 241V259M478.5 204V225M480.5 167V183M481.5 172V187M481.5 229V238M482.5 252V261M483.5 227V234M484.5 153V166M485.5 165V176M485.5 226V231M486.5 246V252M487.5 168V177M488.5 160V168M489.5 230V238M490.5 238V244M491.5 183V193M491.5 229V237M493.5 180V184M495.5 183V189M496.5 180V185M497.5 215V218M501.5 209V214M502.5 214V218M506.5 198V199M507.5 208V211M509.5 179V189M509.5 226V233M511.5 229V240M512.5 153V163M512.5 240V245M513.5 177V186M514.5 153V164M515.5 173V182M517.5 175V183M518.5 150V160M518.5 243V253M519.5 232V243M523.5 161V175M523.5 218V233M524.5 154V159M524.5 204V224M525.5 235V247M527.5 236V246M528.5 156V161M528.5 247V258M529.5 165V170M530.5 241V257M531.5 178V188M534.5 177V188M534.5 244V248M535.5 232V242M536.5 240V247M537.5 171V179M539.5 173V182M540.5 184V191M540.5 233V240M541.5 223V232M542.5 204V216M543.5 216V222M544.5 230V236M545.5 181V187M545.5 223V229M546.5 174V181M546.5 230V234M547.5 182V188M547.5 216V221M548.5 227V232M549.5 190V196M550.5 176V181M551.5 175V181M551.5 213V219M553.5 161V172M554.5 167V182M556.5 143V152M557.5 225V236M559.5 165V186M561.5 227V236M563.5 154V170M563.5 225V234M565.5 158V170M568.5 151V164M569.5 179V188M572.5 242V244M573.5 169V176M573.5 218V229M574.5 182V189M575.5 180V186M575.5 219V225M576.5 235V244M578.5 180V192M578.5 234V239M581.5 223V233M582.5 230V238M583.5 222V229M584.5 174V180M584.5 214V222M585.5 187V193M585.5 216V222M586.5 176V182M587.5 182V189M588.5 180V183M589.5 184V188M589.5 219V224M590.5 223V228M592.5 212V218M593.5 217V222M594.5 185V188M595.5 189V197M596.5 172V178M596.5 232V237M599.5 217V229M600.5 155V163M601.5 168V171M601.5 217V228M602.5 156V166M602.5 235V246M603.5 174V185M603.5 219V228M604.5 239V246M605.5 229V239M606.5 237V243M607.5 177V185M608.5 239V245M609.5 223V228M613.5 220V231M614.5 241V250M617.5 231V244M618.5 190V204M619.5 177V190M619.5 221V229M620.5 181V187M620.5 241V250M622.5 219V229M623.5 173V177M623.5 229V237M624.5 238V246M625.5 182V188M625.5 218V229M626.5 235V243M627.5 174V183M629.5 176V184M629.5 219V228M631.5 228V233M632.5 172V177M633.5 179V186M633.5 226V232M634.5 173V179M636.5 229V237M637.5 187V193M638.5 175V181M639.5 222V227M640.5 204V215M641.5 188V194M641.5 221V226M643.5 227V234M645.5 165V184M647.5 147V162M647.5 223V236M648.5 137V144M648.5 257V264M649.5 147V164M649.5 245V256M650.5 256V267M652.5 169V178M653.5 237V247M654.5 227V237M655.5 169V180M658.5 245V251M660.5 156V164M660.5 244V251M663.5 179V188M663.5 228V239M669.5 176V184M669.5 227V233M670.5 170V177M670.5 232V239M671.5 226V229M673.5 188V194M673.5 215V221M674.5 178V184M675.5 190V194M676.5 226V229M677.5 191V196M677.5 213V219M679.5 193V197M679.5 216V219M681.5 190V194M682.5 188V191M682.5 219V221M683.5 192V196M684.5 221V226M685.5 213V223M686.5 158V166M687.5 163V172M687.5 228V240M688.5 150V163M688.5 204V221M689.5 168V185M690.5 204V222M691.5 169V188M692.5 145V159M693.5 157V168M694.5 146V157M694.5 250V261M695.5 172V185M696.5 149V157M696.5 251V260M697.5 233V247M698.5 249V255M699.5 169V187M700.5 149V160M701.5 158V169M702.5 150V163M702.5 220V233M703.5 172V183M704.5 174V182M704.5 223V236M705.5 177V188M705.5 233V248M707.5 164V173M708.5 159V164M708.5 245V255M709.5 179V186M710.5 161V169M711.5 168V178M711.5 233V243M712.5 163V170M713.5 219V234M715.5 221V228M716.5 169V174M716.5 240V244M717.5 176V185M717.5 221V227M718.5 172V176M719.5 226V237M721.5 188V195M722.5 174V180M723.5 182V190M723.5 224V232M725.5 188V195M725.5 214V222M726.5 181V186M727.5 188V194M727.5 222V228M728.5 226V232M729.5 185V194M730.5 164V175M730.5 239V245M732.5 156V169M732.5 252V262M733.5 152V170M733.5 204V231M734.5 139V142M735.5 145V163M737.5 230V245M739.5 157V169M740.5 147V157M741.5 161V172M742.5 171V189M743.5 157V173M743.5 226V241M745.5 172V185M747.5 175V189M747.5 234V247M748.5 246V258M749.5 166V175M749.5 225V235M750.5 156V159M751.5 225V238M752.5 249V258M753.5 162V177M753.5 232V246M756.5 157V165M756.5 220V231M757.5 178V189M757.5 230V235M759.5 176V182M761.5 178V189M761.5 225V231M762.5 177V183M763.5 182V188M763.5 217V222M764.5 178V184M765.5 220V229M767.5 220V227M769.5 192V197M771.5 186V191M771.5 217V224M772.5 225V232M774.5 151V160M774.5 217V222M775.5 226V234M776.5 153V164M776.5 238V244M777.5 160V173M779.5 164V167M781.5 157V179M781.5 222V231M782.5 184V204M782.5 244V256M783.5 161V173M783.5 224V234M784.5 153V165M784.5 249V254M785.5 174V186M786.5 230V243M787.5 177V187M787.5 219V230M788.5 237V248M790.5 160V170M791.5 226V233M792.5 156V165M794.5 154V165M794.5 242V245M795.5 172V181M795.5 231V240M797.5 162V172M797.5 231V244M798.5 153V161M798.5 204V222M799.5 229V240M800.5 243V248M801.5 220V230M803.5 181V188M803.5 220V228M806.5 171V179M807.5 184V192M807.5 217V225M808.5 233V239M809.5 179V184M811.5 177V185M811.5 225V229M814.5 193V204M815.5 188V193M815.5 216V221M817.5 182V187M817.5 204V215M818.5 229V233M819.5 176V190M819.5 217V226M820.5 141V156M821.5 222V234M822.5 252V260M823.5 163V179M823.5 225V245M825.5 162V180M825.5 229V250M827.5 231V245M828.5 138V148M828.5 260V279M829.5 150V164M829.5 230V246M833.5 170V182M834.5 252V262M835.5 176V182M836.5 251V262M838.5 149V164M838.5 248V262M839.5 176V179M839.5 236V249M841.5 173V187M842.5 245V251M843.5 223V231M844.5 164V168M845.5 181V192M845.5 229V243M846.5 238V249M847.5 186V193M847.5 229V239M848.5 175V180M849.5 230V238M851.5 185V191M851.5 219V227M853.5 193V197M855.5 190V195M855.5 210V214M857.5 213V217M859.5 191V195M862.5 157V169M863.5 155V170M863.5 204V221M864.5 164V180M864.5 243V251M865.5 165V180M865.5 222V238M866.5 137V149M866.5 249V255M867.5 167V180M867.5 238V252M868.5 252V262M870.5 254V268M872.5 149V162M872.5 249V263M873.5 226V238M874.5 147V162M877.5 239V250M878.5 171V186M878.5 247V258M879.5 170V185M880.5 251V258M882.5 247V256M884.5 245V256M885.5 161V174M886.5 147V158M887.5 162V172M888.5 186V204M889.5 165V177M889.5 226V234M895.5 178V185M895.5 231V238M897.5 181V186M899.5 182V189M899.5 223V233M900.5 188V194M900.5 232V236M902.5 181V185M903.5 220V226M906.5 167V175M906.5 218V225M907.5 230V240M909.5 161V181M909.5 243V260M911.5 163V175M911.5 230V243M912.5 133V140M913.5 147V165M914.5 140V149M914.5 228V243M915.5 154V162M916.5 142V152M916.5 262V273M917.5 159V168M917.5 240V256M918.5 145V159M920.5 153V161M920.5 249V264M921.5 170V189M921.5 228V241M923.5 171V185M924.5 204V225M925.5 235V248M926.5 183V204M927.5 159V172M927.5 235V245M928.5 248V258M929.5 162V175M929.5 234V245M930.5 159V166M931.5 233V246M932.5 244V251M933.5 232V244M936.5 190V204M937.5 186V193M938.5 176V183M940.5 234V241M941.5 184V190M942.5 230V239M943.5 224V232M944.5 230V236M947.5 192V197M947.5 218V223M948.5 222V228M949.5 192V197M952.5 149V161M953.5 173V184M953.5 227V236M954.5 151V164M954.5 241V256M955.5 157V173M955.5 234V246M957.5 238V245M958.5 149V159M958.5 247V257M959.5 224V233M962.5 242V254M963.5 219V234M964.5 159V168M965.5 222V227M968.5 160V168M968.5 239V246M969.5 176V184M969.5 220V228M971.5 163V173M971.5 232V241M973.5 172V186M973.5 231V242M975.5 172V185M975.5 233V240M976.5 148V157M976.5 244V251M977.5 175V183M977.5 230V241M979.5 165V173M980.5 241V249M981.5 217V226M982.5 190V204M983.5 185V188M983.5 228V234M984.5 180V192M984.5 204V220M985.5 184V191M986.5 173V178M987.5 177V184M989.5 181V185M990.5 174V181M990.5 233V239M991.5 189V192M992.5 175V181M993.5 183V189M993.5 223V231M994.5 177V182M994.5 215V224M995.5 218V227M997.5 169V181M997.5 236V247M999.5 227V239M1000.5 161V183M1000.5 227V245M1001.5 236V243M1002.5 133V142M1003.5 232V254M1004.5 132V144M1004.5 268V285M1005.5 150V165M1005.5 229V243M1006.5 165V181M1007.5 166V176M1008.5 139V156M1009.5 240V259M1011.5 171V184M1012.5 252V266M1014.5 148V157M1015.5 170V182M1015.5 224V236M1016.5 151V159M1017.5 159V171M1017.5 226V239M1018.5 148V157M1018.5 248V259M1019.5 233V248M1022.5 160V168M1023.5 181V189M1023.5 234V243M1025.5 187V193M1026.5 178V181M1026.5 236V246M1027.5 226V236M1028.5 179V183M1029.5 191V195M1034.5 185V190M1034.5 224V227M1035.5 193V198M1035.5 217V221M1037.5 211V215M1038.5 216V220M1039.5 194V196M1041.5 226V234M1042.5 162V184M1043.5 232V245M1045.5 236V256M1047.5 243V254M1048.5 252V264M1049.5 227V235M1050.5 146V153M1051.5 241V251M1052.5 176V185M1052.5 250V258M1053.5 233V247M1054.5 243V255M1055.5 237V244M1056.5 153V160M1056.5 246V256M1057.5 172V185M1059.5 174V183M1062.5 147V159M1063.5 237V248M1065.5 161V177M1065.5 237V247M1066.5 159V168M1068.5 239V245M1069.5 173V186M1071.5 184V194M1073.5 187V193M1074.5 188V194M1075.5 183V186M1077.5 221V229M1078.5 228V231M1081.5 215V217M1082.5 170V175M1083.5 169V177M1083.5 225V227M1084.5 237V244M1085.5 231V245M1086.5 166V182M1087.5 150V164M1087.5 225V246M1088.5 132V144M1088.5 255V272M1090.5 135V141M1091.5 171V181M1092.5 139V148M1093.5 226V241M1094.5 253V269M1095.5 241V255M1097.5 171V181M1097.5 224V237M1099.5 165V172M1099.5 233V245M1100.5 149V159M1101.5 233V246M1102.5 243V253M1103.5 174V181M1103.5 234V243M1104.5 152V162M1105.5 161V176M1106.5 246V253M1107.5 224V231M1111.5 172V184M1111.5 231V243M1112.5 169V177M1113.5 223V228M1114.5 177V182M1114.5 241V246M1115.5 184V188M1116.5 220V228M1117.5 190V194M1117.5 226V235M1118.5 233V241M1119.5 191V195M1120.5 230V237M1121.5 196V204M1121.5 225V229M1123.5 192V196M1124.5 185V187M1125.5 193V198M1126.5 222V229M1128.5 235V241M1130.5 244V250M1131.5 163V173M1131.5 232V248M1135.5 178V186M1136.5 159V166M1137.5 229V241M1138.5 157V166M1139.5 217V227M1140.5 160V165M1140.5 238V243M1141.5 222V227M1142.5 155V168M1142.5 240V247M1143.5 166V174M1145.5 174V181M1145.5 233V242M1147.5 230V244M1149.5 236V246M1150.5 149V160M1151.5 170V183M1151.5 235V246M1152.5 243V251M1153.5 163V176M1153.5 233V240M1154.5 156V162M1155.5 167V176M1157.5 232V239M1158.5 161V170M1159.5 173V182M1159.5 227V235M1162.5 171V181M1162.5 232V239M1163.5 179V185M1164.5 232V240M1165.5 178V186M1165.5 217V224M1167.5 186V195M1167.5 223V230M1168.5 174V181M1168.5 229V236M1169.5 182V186M1170.5 178V181M1170.5 229V233M1172.5 177V182M1173.5 172V177M1173.5 225V236M1175.5 157V179M1176.5 249V255M1178.5 260V271M1179.5 244V259M1180.5 175V204M1180.5 266V275M1181.5 166V177M1181.5 229V253M1182.5 272V282M1183.5 229V241M1185.5 235V246M1189.5 169V183M1190.5 252V261M1192.5 247V256M1193.5 225V233M1195.5 172V179M1195.5 235V248M1196.5 172V179M1196.5 248V252M1197.5 162V174M1197.5 223V231M1199.5 167V179M1200.5 160V170M1201.5 179V191M1201.5 220V235M1203.5 223V233M1204.5 177V182M1204.5 240V245M1205.5 181V189M1205.5 218V229M1206.5 235V243M1207.5 228V231M1208.5 229V238M1209.5 191V195M1210.5 183V188M1211.5 189V192M1211.5 212V221M1213.5 191V193M1213.5 211V218M1214.5 188V191M1214.5 218V222M1215.5 191V195M1217.5 174V184M1219.5 150V166M1219.5 222V234M1220.5 245V255M1221.5 169V181M1222.5 254V262M1223.5 236V257M1225.5 235V257M1226.5 145V155M1227.5 225V241M1228.5 144V158M1231.5 226V238M1232.5 168V181M1233.5 157V169M1233.5 222V240M1234.5 152V158M1234.5 243V257M1236.5 153V160M1236.5 243V259M1238.5 221V236M1239.5 157V173M1239.5 221V238M1241.5 171V185M1242.5 171V186M1243.5 171V187M1243.5 235V250M1244.5 250V257M1245.5 235V249M1246.5 245V255M1247.5 175V184M1248.5 248V252M1249.5 178V184M1249.5 233V240M1251.5 231V238M1252.5 177V180M1254.5 181V184M1254.5 228V233M1255.5 190V196M1255.5 216V224M1256.5 229V239M1257.5 191V198M1257.5 228V233M1258.5 184V188M1260.5 166V172M1261.5 221V235M1262.5 249V260M1263.5 153V164M1266.5 264V269M1267.5 232V246M1269.5 152V169M1271.5 172V182M1271.5 230V241M1273.5 171V187M1273.5 226V236M1274.5 174V182M1274.5 250V258M1276.5 245V256M1277.5 159V171M1278.5 148V161M1280.5 149V163M1282.5 248V252M1283.5 231V248M1285.5 166V176M1286.5 161V168M1286.5 241V252M1287.5 171V181M1287.5 232V243M1288.5 168V174M1288.5 242V253M1289.5 176V184M1289.5 230V242M1290.5 237V250M1291.5 183V187M1291.5 227V237M1292.5 237V246M1293.5 227V234M1294.5 179V183M1294.5 218V227M1295.5 189V194M1295.5 222V234M1297.5 191V196M1297.5 222V228M1298.5 229V231M1299.5 187V191M1299.5 214V219M1300.5 184V186M1300.5 224V229M1301.5 191V195M1301.5 217V222M1303.5 189V193M1303.5 220V226M1304.5 204V215M1305.5 176V185M1306.5 148V159M1306.5 240V247M1307.5 230V242M1308.5 177V183M1308.5 246V250M1309.5 163V174M1311.5 176V188M1311.5 234V247M1312.5 158V167M1312.5 247V255M1313.5 177V189M1314.5 163V170M1315.5 180V187M1316.5 160V168M1316.5 233V244M1317.5 233V242M1319.5 165V181M1319.5 232V240M1320.5 158V160M1321.5 220V227M1323.5 162V172M1323.5 230V235M1325.5 161V174M1326.5 149V160M1327.5 220V233M1328.5 241V252M1329.5 225V229M1330.5 152V161M1331.5 166V178M1332.5 177V186M1332.5 244V255M1333.5 179V187M1334.5 162V169M1334.5 242V250M1335.5 179V192M1335.5 220V233M1336.5 170V176M1337.5 183V191M1340.5 174V181M1341.5 188V192M1342.5 176V179M1342.5 237V243M1343.5 225V234M1344.5 178V182M1344.5 229V238M1345.5 187V194M1345.5 226V235M1346.5 189V196M1347.5 185V190M1347.5 222V229M1348.5 233V241M1349.5 230V238M1351.5 239V249M1353.5 139V150M1353.5 226V238M1357.5 229V246M1359.5 230V245M1360.5 260V272M1361.5 231V242M1362.5 257V265M1363.5 240V257M1364.5 150V158M1365.5 159V172M1365.5 222V239M1368.5 146V161M1371.5 171V183M1371.5 226V237M1372.5 249V259M1373.5 225V236M1374.5 153V162M1374.5 248V253M1375.5 179V187M1375.5 233V246M1376.5 163V169M1376.5 222V234M1378.5 170V176M1379.5 187V194M1380.5 181V184M1380.5 236V245M1381.5 185V188M1381.5 229V233M1382.5 182V186M1383.5 187V191M1385.5 187V194M1385.5 214V224M1386.5 228V231M1388.5 223V228M1389.5 211V216M1390.5 190V193M1391.5 193V197M1391.5 211V214M1395.5 150V167M1395.5 221V233M1396.5 140V149M1399.5 166V181M1399.5 231V239M1400.5 138V154M1401.5 150V170M1401.5 243V256M1402.5 166V182M1406.5 248V257M1407.5 172V180M1409.5 224V235M1410.5 147V156M1410.5 243V250M1411.5 175V184M1413.5 220V230M1414.5 152V157M1414.5 240V249M1415.5 169V186M1415.5 230V242M1417.5 221V233M1420.5 173V184M1420.5 244V254M1421.5 165V177M1421.5 225V234M1422.5 162V169M1423.5 171V182M1424.5 168V174M1424.5 218V226M1425.5 178V186M1425.5 221V228M1426.5 173V181M1427.5 187V194M1428.5 175V179M1428.5 216V225M1429.5 223V232M1431.5 182V190M1433.5 212V220M1434.5 225V230M1435.5 185V190M1436.5 181V186M1436.5 220V224M1439.5 169V176M1439.5 219V228M1442.5 134V149M1442.5 259V274M1443.5 151V165M1444.5 260V269M1445.5 158V168M1447.5 228V243M1448.5 255V268M1449.5 159V175M1449.5 226V240M1451.5 173V183M1453.5 160V173M1453.5 220V240M1455.5 161V176M1457.5 222V231M1458.5 247V252M1459.5 224V231M1460.5 174V182M1460.5 245V256M1461.5 162V172M1461.5 219V231M1463.5 166V177M1464.5 159V168M1465.5 225V232M1466.5 181V189M1467.5 177V186M1467.5 223V234M1468.5 174V178M1469.5 204V219M1471.5 185V188M1474.5 182V185M1474.5 230V236M1476.5 227V233M1477.5 191V195M1478.5 184V186M1479.5 187V192M1479.5 217V223M1480.5 183V185M1480.5 212V218M1482.5 236V242M1483.5 163V171M1484.5 246V250M1485.5 160V173M1486.5 243V251M1487.5 160V171M1489.5 174V185M1491.5 230V244M1493.5 232V239" stroke="#8c8c8c"/>
<path d="M256.5 156V162M257.5 175V185M257.5 229V239M258.5 179V184M259.5 179V189M260.5 160V168M261.5 189V204M262.5 162V166M263.5 219V228M265.5 218V229M266.5 180V190M268.5 232V242M269.5 180V193M270.5 166V173M270.5 234V242M272.5 219V228M273.5 171V182M274.5 166V174M274.5 204V218M275.5 189V204M275.5 217V226M277.5 215V227M279.5 176V187M283.5 183V191M283.5 216V225M284.5 204V215M285.5 215V223M286.5 233V237M287.5 174V185M288.5 156V165M289.5 189V204M291.5 184V190M291.5 204V219M292.5 236V244M293.5 204V221M295.5 184V204M295.5 233V245M299.5 157V165M300.5 253V259M301.5 151V169M301.5 240V251M302.5 168V180M305.5 180V204M305.5 230V238M307.5 204V232M308.5 258V271M309.5 180V204M310.5 139V151M311.5 178V204M311.5 230V239M312.5 166V185M313.5 171V183M313.5 204V221M315.5 172V182M318.5 249V261M319.5 158V168M320.5 252V259M321.5 173V186M321.5 233V247M323.5 172V187M323.5 234V244M324.5 223V235M325.5 176V185M325.5 218V236M328.5 163V169M328.5 219V229M329.5 233V243M330.5 242V248M331.5 175V187M331.5 221V235M333.5 164V180M333.5 230V243M335.5 250V268M337.5 161V175M337.5 238V246M339.5 180V204M339.5 235V247M340.5 130V143M341.5 180V204M342.5 260V274M344.5 260V269M345.5 236V257M347.5 184V204M348.5 187V204M351.5 168V179M351.5 219V232M352.5 204V219M353.5 204V219M354.5 193V204M357.5 181V187M358.5 179V183M358.5 224V228M359.5 186V192M359.5 204V212M360.5 192V197M360.5 221V223M362.5 189V191M365.5 209V213M366.5 190V193M366.5 216V218M367.5 209V212M370.5 204V210M371.5 204V210M375.5 190V194M378.5 157V167M379.5 183V204M379.5 216V227M380.5 239V250M381.5 204V219M382.5 149V159M386.5 250V257M387.5 184V204M388.5 143V158M388.5 259V266M390.5 250V261M392.5 204V227M393.5 182V222M395.5 157V166M397.5 241V259M398.5 253V263M399.5 172V183M402.5 252V260M403.5 238V249M404.5 156V167M404.5 248V256M405.5 177V188M406.5 188V223M407.5 204V222M408.5 240V249M410.5 237V247M411.5 177V184M411.5 219V228M413.5 187V192M414.5 177V181M415.5 189V194M417.5 186V190M418.5 196V204M419.5 196V204M421.5 189V204M421.5 221V229M422.5 148V161M423.5 162V171M425.5 228V236M426.5 162V169M428.5 191V204M429.5 227V234M431.5 217V224M432.5 170V175M434.5 167V173M438.5 166V173M438.5 204V218M440.5 241V243M441.5 178V191M441.5 228V242M443.5 220V227M445.5 221V231M447.5 218V228M449.5 170V180M450.5 166V169M452.5 233V239M453.5 175V184M453.5 219V225M454.5 169V174M458.5 170V177M458.5 204V216M462.5 170V175M463.5 170V178M463.5 219V227M464.5 240V245M465.5 232V237M466.5 246V257M467.5 238V253M473.5 148V166M473.5 233V242M474.5 160V177M475.5 150V164M476.5 131V142M476.5 255V271M477.5 164V176M478.5 143V149M479.5 166V178M479.5 226V240M480.5 249V262M481.5 204V229M483.5 160V174M485.5 204V226M486.5 159V165M487.5 177V188M487.5 229V243M488.5 239V248M489.5 180V190M490.5 190V204M491.5 193V204M492.5 194V204M492.5 231V241M493.5 184V193M494.5 177V182M494.5 229V235M495.5 189V195M496.5 225V231M497.5 185V189M497.5 204V215M499.5 189V194M499.5 216V220M500.5 219V223M501.5 196V198M502.5 199V204M503.5 198V200M503.5 212V214M504.5 213V216M505.5 211V214M506.5 213V215M507.5 198V200M507.5 204V208M508.5 179V183M508.5 212V215M509.5 189V204M510.5 159V165M511.5 167V170M517.5 229V241M519.5 159V169M520.5 152V162M520.5 245V254M521.5 163V173M521.5 234V247M522.5 153V157M522.5 245V255M525.5 164V173M526.5 152V161M527.5 161V170M529.5 170V183M529.5 235V248M530.5 157V163M532.5 159V166M533.5 167V179M534.5 188V204M535.5 178V186M537.5 179V191M537.5 219V232M538.5 164V172M538.5 235V243M539.5 218V226M543.5 179V184M543.5 204V216M547.5 188V194M548.5 178V182M549.5 214V221M550.5 227V231M552.5 157V163M553.5 172V180M554.5 231V240M555.5 153V171M555.5 216V227M557.5 155V169M557.5 204V225M558.5 139V151M558.5 246V258M561.5 150V169M562.5 249V260M563.5 204V225M565.5 226V230M566.5 152V164M566.5 249V256M567.5 170V186M567.5 237V246M569.5 232V246M570.5 154V168M571.5 178V187M571.5 229V241M572.5 160V166M574.5 189V204M574.5 236V244M577.5 218V227M578.5 192V204M579.5 176V182M579.5 226V234M580.5 232V239M581.5 182V189M583.5 185V192M584.5 204V214M587.5 189V194M587.5 215V220M590.5 181V184M591.5 212V218M592.5 204V212M593.5 187V191M593.5 211V217M594.5 221V225M595.5 197V204M597.5 171V179M597.5 228V238M598.5 236V245M600.5 237V247M604.5 156V165M605.5 177V187M608.5 160V163M609.5 179V191M610.5 156V164M611.5 168V178M612.5 184V204M612.5 239V249M613.5 176V188M614.5 159V168M615.5 234V239M616.5 243V248M617.5 169V179M618.5 241V250M619.5 190V221M620.5 187V204M621.5 173V178M621.5 220V229M624.5 166V172M625.5 188V218M627.5 219V228M628.5 170V175M628.5 235V244M629.5 204V219M631.5 185V193M633.5 186V192M633.5 217V226M634.5 234V237M635.5 187V194M636.5 175V180M642.5 228V232M644.5 144V156M644.5 235V245M645.5 184V204M645.5 221V227M647.5 204V223M651.5 149V163M651.5 246V254M652.5 178V204M653.5 157V166M653.5 224V237M655.5 237V246M656.5 145V156M656.5 249V253M657.5 234V245M658.5 150V157M659.5 163V175M659.5 230V241M662.5 242V252M665.5 173V181M665.5 226V238M666.5 167V172M672.5 174V178M674.5 228V232M675.5 220V228M677.5 204V213M678.5 183V186M678.5 221V227M680.5 218V223M681.5 214V220M683.5 209V214M684.5 181V185M685.5 186V193M686.5 204V220M687.5 172V184M695.5 225V241M697.5 170V184M698.5 149V162M700.5 246V253M701.5 223V233M702.5 204V220M703.5 183V204M704.5 204V223M705.5 188V204M706.5 154V164M706.5 242V254M707.5 173V192M707.5 231V245M709.5 186V204M709.5 222V236M711.5 224V233M712.5 243V252M713.5 204V219M714.5 241V248M715.5 183V190M717.5 204V221M719.5 179V183M719.5 218V226M720.5 171V178M720.5 233V241M721.5 195V204M722.5 235V239M723.5 216V224M724.5 188V194M724.5 231V236M725.5 195V204M726.5 227V234M727.5 215V222M728.5 183V187M729.5 216V222M731.5 162V171M731.5 236V245M732.5 169V182M733.5 170V175M735.5 163V177M735.5 228V246M736.5 128V141M736.5 260V273M737.5 150V163M737.5 204V230M738.5 139V150M738.5 257V271M739.5 241V259M740.5 255V267M743.5 204V226M744.5 154V159M744.5 250V263M746.5 153V158M746.5 250V255M747.5 189V204M748.5 157V165M750.5 244V260M751.5 163V175M754.5 243V250M755.5 174V185M755.5 230V239M756.5 204V220M758.5 181V189M758.5 236V246M759.5 182V190M759.5 219V222M762.5 231V235M763.5 188V194M763.5 204V217M766.5 190V194M767.5 213V220M769.5 197V204M769.5 212V218M770.5 222V227M773.5 169V180M773.5 215V221M774.5 204V217M775.5 159V172M775.5 218V226M778.5 241V250M779.5 230V245M780.5 149V161M781.5 204V222M783.5 173V189M785.5 229V242M786.5 155V165M786.5 222V230M787.5 187V204M788.5 189V204M790.5 236V246M791.5 179V186M793.5 163V177M796.5 185V204M797.5 221V231M799.5 172V183M800.5 157V163M801.5 177V190M801.5 204V220M802.5 163V171M802.5 238V248M803.5 188V204M804.5 190V204M805.5 229V236M807.5 192V204M808.5 170V178M809.5 225V231M810.5 188V195M812.5 175V178M813.5 188V194M813.5 215V223M814.5 229V236M815.5 193V216M816.5 176V182M818.5 177V183M819.5 204V217M820.5 241V248M823.5 179V204M824.5 127V146M824.5 260V271M825.5 180V204M827.5 168V180M827.5 204V231M829.5 164V177M830.5 140V152M831.5 243V253M832.5 256V271M833.5 182V204M833.5 241V254M835.5 182V204M835.5 242V255M837.5 165V173M837.5 235V253M839.5 179V204M841.5 187V204M841.5 234V241M842.5 154V163M843.5 165V177M843.5 204V223M844.5 244V250M846.5 184V189M848.5 236V246M849.5 191V195M849.5 220V230M850.5 179V185M851.5 191V196M852.5 190V196M852.5 235V242M853.5 197V204M854.5 186V190M855.5 204V210M858.5 189V191M859.5 209V212M860.5 193V197M860.5 218V220M861.5 176V183M861.5 218V222M865.5 204V222M867.5 180V204M868.5 183V204M869.5 226V237M870.5 144V156M871.5 247V260M873.5 160V171M873.5 204V226M874.5 251V264M875.5 160V170M875.5 236V253M876.5 152V160M876.5 250V259M877.5 223V239M880.5 155V160M881.5 175V183M881.5 234V247M883.5 171V185M883.5 234V243M885.5 234V246M886.5 248V256M887.5 172V183M888.5 243V254M890.5 158V166M891.5 178V190M892.5 243V256M893.5 176V187M893.5 232V239M894.5 240V247M895.5 185V192M895.5 221V231M896.5 238V245M898.5 175V179M900.5 194V204M901.5 189V195M901.5 221V230M905.5 180V187M905.5 220V228M907.5 169V178M908.5 249V257M910.5 254V269M912.5 259V271M913.5 232V244M917.5 227V240M918.5 229V241M919.5 229V247M921.5 204V228M923.5 223V239M924.5 153V161M925.5 174V187M926.5 251V258M928.5 154V165M931.5 180V191M931.5 224V233M932.5 188V204M933.5 172V179M934.5 167V173M934.5 243V253M935.5 233V244M937.5 193V204M937.5 220V230M939.5 188V194M939.5 228V240M940.5 177V183M941.5 215V225M942.5 179V184M943.5 186V190M944.5 181V185M945.5 190V195M945.5 219V227M946.5 227V231M949.5 216V220M950.5 177V181M950.5 224V229M951.5 182V188M951.5 222V228M952.5 236V241M953.5 184V204M955.5 224V234M956.5 154V163M957.5 159V175M957.5 224V238M960.5 154V162M960.5 242V255M961.5 172V183M961.5 224V232M962.5 158V163M963.5 175V191M963.5 204V219M964.5 241V248M965.5 204V222M966.5 158V170M966.5 234V243M967.5 179V191M970.5 154V166M971.5 222V232M972.5 186V204M972.5 242V252M973.5 186V204M974.5 244V253M977.5 220V230M978.5 156V163M979.5 173V184M981.5 179V186M981.5 204V217M982.5 237V242M983.5 220V228M985.5 228V234M987.5 184V191M987.5 217V224M989.5 185V192M992.5 204V217M993.5 213V223M994.5 204V215M995.5 181V189M996.5 154V160M998.5 126V142M998.5 204V229M999.5 145V150M999.5 204V227M1001.5 146V150M1001.5 204V236M1002.5 260V278M1003.5 141V159M1005.5 204V229M1006.5 265V277M1007.5 176V204M1007.5 236V252M1008.5 260V273M1009.5 170V180M1009.5 227V240M1010.5 144V156M1010.5 225V238M1011.5 229V240M1013.5 173V181M1013.5 237V253M1014.5 253V260M1015.5 182V204M1017.5 204V226M1019.5 155V171M1021.5 162V177M1021.5 224V236M1023.5 189V204M1023.5 221V234M1024.5 192V204M1024.5 241V248M1025.5 221V230M1028.5 236V241M1029.5 195V204M1029.5 216V224M1030.5 231V237M1031.5 184V190M1033.5 189V192M1033.5 219V227M1035.5 198V204M1036.5 189V191M1037.5 195V198M1037.5 204V211M1038.5 190V193M1039.5 212V215M1040.5 175V181M1040.5 223V226M1041.5 176V186M1041.5 219V226M1042.5 237V252M1045.5 165V177M1046.5 225V239M1048.5 182V204M1049.5 168V184M1050.5 252V259M1051.5 159V172M1052.5 185V204M1053.5 160V175M1054.5 153V159M1057.5 185V204M1058.5 152V159M1059.5 183V204M1059.5 231V236M1060.5 248V260M1061.5 237V249M1062.5 253V256M1063.5 174V184M1063.5 224V237M1064.5 244V253M1067.5 177V192M1067.5 233V241M1069.5 231V233M1070.5 204V216M1071.5 194V204M1072.5 175V177M1073.5 193V204M1073.5 224V234M1074.5 234V238M1075.5 186V194M1076.5 177V181M1076.5 229V235M1078.5 180V184M1079.5 184V190M1080.5 181V186M1080.5 224V230M1081.5 185V190M1081.5 204V215M1082.5 223V226M1083.5 216V225M1085.5 157V164M1086.5 182V204M1090.5 204V231M1091.5 245V262M1092.5 259V270M1093.5 172V181M1094.5 147V152M1095.5 170V184M1096.5 149V161M1097.5 181V204M1098.5 183V204M1099.5 172V186M1100.5 240V252M1101.5 226V233M1102.5 172V186M1105.5 176V185M1105.5 229V243M1106.5 152V160M1107.5 173V181M1109.5 180V187M1109.5 234V246M1110.5 246V252M1115.5 218V233M1116.5 180V184M1118.5 181V183M1119.5 195V204M1119.5 216V224M1122.5 184V186M1123.5 196V204M1123.5 222V225M1125.5 217V224M1127.5 186V191M1128.5 165V172M1129.5 163V171M1129.5 231V238M1130.5 152V159M1132.5 153V165M1132.5 247V254M1133.5 236V239M1135.5 236V243M1136.5 243V250M1137.5 174V185M1137.5 221V229M1139.5 179V185M1141.5 204V222M1143.5 232V242M1144.5 153V162M1145.5 181V204M1145.5 225V233M1146.5 155V161M1146.5 241V252M1147.5 162V174M1148.5 150V158M1149.5 163V173M1150.5 250V253M1155.5 229V239M1156.5 158V169M1156.5 240V248M1157.5 169V179M1158.5 235V247M1160.5 183V193M1160.5 234V244M1161.5 177V185M1161.5 224V235M1163.5 218V225M1165.5 204V217M1166.5 173V181M1166.5 233V235M1169.5 215V225M1171.5 222V230M1173.5 177V189M1173.5 216V225M1174.5 145V158M1175.5 222V233M1177.5 160V177M1178.5 126V138M1179.5 229V244M1181.5 204V229M1183.5 162V181M1184.5 136V150M1184.5 262V273M1185.5 155V162M1186.5 143V154M1187.5 158V173M1187.5 241V256M1188.5 148V157M1190.5 149V158M1193.5 158V169M1193.5 204V225M1194.5 151V156M1198.5 245V255M1199.5 234V246M1202.5 244V253M1203.5 185V190M1203.5 204V223M1205.5 204V218M1208.5 180V183M1209.5 220V229M1210.5 215V221M1212.5 223V228M1213.5 204V211M1216.5 196V204M1216.5 221V224M1217.5 224V232M1218.5 156V163M1218.5 243V252M1221.5 225V236M1222.5 167V182M1223.5 151V163M1224.5 143V154M1224.5 259V269M1225.5 152V165M1225.5 224V235M1227.5 154V163M1227.5 204V225M1228.5 253V263M1229.5 157V169M1229.5 222V235M1230.5 145V158M1230.5 251V260M1231.5 168V178M1231.5 204V226M1232.5 181V204M1232.5 247V255M1233.5 169V186M1233.5 204V222M1235.5 174V185M1237.5 160V174M1238.5 204V221M1240.5 149V158M1240.5 248V259M1241.5 185V204M1241.5 236V251M1242.5 186V204M1242.5 251V260M1243.5 187V204M1243.5 226V235M1244.5 176V187M1246.5 167V171M1247.5 235V243M1249.5 224V233M1250.5 238V249M1251.5 178V185M1252.5 237V246M1255.5 204V216M1256.5 182V187M1258.5 220V229M1260.5 239V246M1262.5 148V155M1263.5 244V253M1264.5 134V150M1264.5 257V265M1265.5 156V174M1265.5 244V264M1266.5 129V146M1267.5 151V164M1268.5 180V204M1269.5 245V261M1270.5 263V270M1272.5 229V237M1273.5 187V204M1274.5 182V204M1275.5 174V181M1275.5 221V233M1276.5 151V160M1278.5 247V255M1279.5 233V241M1280.5 219V236M1281.5 163V171M1282.5 151V163M1283.5 159V172M1283.5 224V231M1284.5 154V165M1287.5 181V189M1290.5 174V182M1291.5 220V227M1292.5 178V181M1295.5 194V204M1296.5 179V183M1297.5 217V222M1299.5 191V196M1302.5 186V187M1302.5 204V211M1303.5 193V204M1303.5 215V220M1304.5 167V172M1305.5 228V241M1307.5 176V191M1308.5 183V204M1310.5 247V252M1311.5 224V234M1313.5 189V204M1314.5 248V256M1315.5 219V236M1316.5 221V233M1317.5 176V188M1318.5 157V167M1318.5 204V220M1319.5 181V189M1320.5 239V244M1321.5 204V220M1322.5 184V219M1323.5 217V230M1324.5 151V162M1324.5 238V247M1325.5 174V188M1326.5 245V249M1327.5 204V220M1328.5 150V158M1329.5 173V181M1329.5 204V225M1330.5 246V250M1331.5 233V244M1332.5 186V204M1333.5 224V235M1335.5 192V204M1337.5 232V240M1338.5 172V178M1338.5 238V247M1339.5 186V193M1339.5 219V230M1341.5 192V204M1341.5 230V237M1343.5 181V185M1345.5 194V204M1346.5 196V204M1347.5 190V194M1350.5 174V183M1350.5 244V252M1351.5 166V180M1352.5 125V142M1352.5 204V225M1354.5 124V148M1355.5 142V159M1356.5 130V147M1356.5 265V276M1358.5 134V141M1359.5 164V178M1360.5 168V178M1361.5 166V181M1361.5 204V231M1363.5 157V173M1364.5 248V263M1365.5 172V183M1365.5 204V222M1366.5 253V259M1367.5 168V181M1367.5 236V245M1369.5 162V169M1369.5 224V234M1370.5 148V159M1371.5 204V226M1372.5 151V158M1373.5 174V180M1376.5 204V222M1377.5 185V188M1379.5 226V241M1382.5 235V239M1383.5 191V196M1384.5 184V188M1384.5 229V237M1386.5 186V189M1387.5 193V197M1388.5 194V198M1389.5 191V195M1390.5 221V225M1391.5 204V211M1392.5 191V194M1393.5 183V189M1393.5 215V220M1394.5 151V159M1394.5 235V243M1395.5 204V221M1397.5 148V167M1397.5 238V247M1399.5 181V231M1400.5 255V268M1402.5 182V204M1402.5 251V263M1403.5 168V180M1403.5 228V239M1404.5 252V263M1405.5 155V174M1405.5 242V248M1408.5 151V162M1408.5 241V254M1409.5 162V171M1411.5 184V204M1411.5 231V242M1412.5 152V158M1413.5 159V170M1415.5 222V230M1417.5 162V171M1418.5 168V183M1418.5 241V249M1419.5 160V173M1419.5 237V246M1421.5 204V225M1422.5 241V249M1423.5 230V240M1424.5 204V218M1425.5 186V193M1427.5 228V233M1428.5 204V216M1429.5 217V223M1430.5 230V237M1431.5 223V228M1432.5 226V233M1433.5 183V191M1433.5 204V212M1434.5 181V186M1435.5 213V217M1437.5 186V189M1437.5 217V221M1439.5 176V187M1440.5 147V159M1441.5 229V241M1443.5 245V262M1444.5 148V160M1447.5 159V171M1448.5 149V160M1449.5 175V191M1450.5 225V239M1451.5 183V204M1452.5 154V159M1454.5 156V162M1454.5 251V257M1455.5 176V186M1455.5 234V245M1457.5 166V179M1459.5 174V187M1460.5 182V204M1462.5 151V161M1466.5 189V204M1466.5 245V252M1467.5 186V192M1467.5 204V223M1468.5 238V248M1469.5 188V194M1470.5 238V243M1471.5 218V227M1472.5 180V184M1473.5 224V232M1475.5 185V192M1475.5 216V223M1476.5 181V186M1477.5 214V220M1478.5 227V230M1479.5 213V217M1480.5 204V212M1481.5 176V182M1481.5 216V221M1483.5 229V240M1486.5 148V158M1487.5 171V180M1487.5 234V243M1488.5 249V253M1489.5 185V204M1490.5 153V162M1490.5 245V254M1492.5 156V166M1492.5 221V231" stroke="#969696"/>
<path d="M253.5 187V204M254.5 154V164M254.5 229V241M255.5 176V188M255.5 204V221M257.5 185V204M258.5 184V204M258.5 231V238M259.5 220V226M261.5 217V228M262.5 204V220M263.5 184V204M264.5 171V181M264.5 238V245M265.5 178V189M266.5 235V244M267.5 180V188M267.5 216V228M268.5 163V172M269.5 204V218M271.5 217V226M272.5 165V172M273.5 204V220M276.5 176V184M276.5 229V234M277.5 189V215M279.5 187V191M280.5 234V238M281.5 183V190M281.5 204V217M282.5 175V182M282.5 225V230M283.5 191V216M285.5 193V204M288.5 231V240M289.5 204V217M290.5 224V231M292.5 164V169M293.5 180V186M294.5 163V175M295.5 224V233M296.5 157V171M296.5 233V246M297.5 173V183M298.5 146V154M298.5 235V250M299.5 165V183M299.5 204V223M300.5 146V156M302.5 252V263M303.5 166V179M303.5 204V221M304.5 151V165M304.5 259V267M305.5 204V230M306.5 152V167M306.5 240V259M307.5 180V204M308.5 149V160M309.5 224V248M310.5 259V270M311.5 204V230M312.5 236V258M313.5 183V204M314.5 154V169M314.5 253V260M316.5 156V170M316.5 250V261M317.5 186V204M317.5 227V239M318.5 186V204M319.5 217V235M320.5 163V172M321.5 186V204M321.5 225V233M322.5 154V165M322.5 246V256M323.5 187V204M323.5 224V234M324.5 157V164M327.5 177V186M327.5 220V234M328.5 204V219M329.5 178V191M330.5 162V170M332.5 245V261M334.5 241V259M335.5 174V204M336.5 177V204M336.5 272V281M337.5 175V238M338.5 143V157M338.5 265V274M341.5 226V244M342.5 131V149M343.5 165V180M346.5 158V167M346.5 252V266M347.5 227V239M348.5 234V247M350.5 160V167M350.5 231V243M351.5 204V219M352.5 163V172M353.5 178V190M354.5 234V238M355.5 192V204M355.5 215V222M356.5 222V225M359.5 192V197M361.5 193V198M361.5 210V215M363.5 204V210M364.5 192V196M364.5 214V216M365.5 196V198M367.5 200V204M368.5 215V217M369.5 199V204M370.5 192V194M371.5 198V204M372.5 190V194M372.5 204V210M373.5 197V209M374.5 189V191M374.5 219V222M375.5 194V204M375.5 211V217M376.5 179V188M376.5 217V227M377.5 192V204M378.5 233V238M380.5 149V158M382.5 231V247M383.5 182V223M384.5 156V168M384.5 248V260M385.5 187V204M385.5 228V240M387.5 223V235M391.5 204V227M394.5 242V254M395.5 204V226M396.5 149V158M397.5 169V185M398.5 158V171M399.5 183V225M400.5 150V160M400.5 241V252M401.5 222V237M402.5 161V177M403.5 186V204M405.5 188V204M408.5 166V171M410.5 177V185M412.5 204V218M413.5 192V204M413.5 215V225M414.5 226V235M415.5 217V222M416.5 185V190M416.5 225V230M417.5 215V221M418.5 226V232M419.5 214V219M420.5 177V185M420.5 204V214M421.5 204V221M422.5 228V239M423.5 171V186M423.5 204V223M424.5 230V239M425.5 180V191M425.5 216V228M426.5 225V234M427.5 185V187M427.5 218V226M428.5 204V216M429.5 179V191M429.5 217V227M430.5 174V182M431.5 181V190M431.5 204V217M433.5 184V191M433.5 204V218M435.5 181V190M436.5 173V181M437.5 180V189M437.5 215V230M439.5 216V226M440.5 170V182M442.5 164V170M442.5 204V220M443.5 180V191M443.5 204V220M444.5 188V204M444.5 237V247M445.5 189V221M446.5 161V172M447.5 186V204M448.5 164V174M448.5 226V236M449.5 180V187M450.5 226V237M451.5 178V188M451.5 218V227M452.5 165V173M455.5 186V190M456.5 235V237M457.5 182V192M457.5 204V216M459.5 183V187M459.5 204V215M460.5 233V240M461.5 216V223M462.5 223V231M464.5 187V204M465.5 181V204M466.5 144V152M467.5 164V179M467.5 228V238M468.5 148V160M468.5 240V253M469.5 164V182M469.5 227V240M470.5 257V272M471.5 163V177M472.5 264V274M474.5 177V204M475.5 204V231M477.5 225V241M479.5 178V226M480.5 183V204M481.5 187V204M482.5 158V173M482.5 237V252M483.5 174V179M483.5 204V227M484.5 166V176M484.5 247V258M485.5 176V185M486.5 232V246M488.5 168V176M489.5 220V230M490.5 229V238M491.5 219V229M496.5 185V189M498.5 186V192M498.5 222V227M500.5 188V191M501.5 198V209M504.5 196V198M505.5 209V211M509.5 217V226M510.5 229V239M511.5 170V184M511.5 219V229M512.5 163V177M513.5 186V204M514.5 164V173M514.5 242V247M515.5 182V204M516.5 158V174M516.5 243V250M517.5 183V204M518.5 230V243M519.5 223V232M521.5 173V182M523.5 175V185M523.5 204V218M524.5 159V170M525.5 173V183M525.5 224V235M526.5 233V243M527.5 223V236M529.5 224V235M530.5 236V241M531.5 188V204M532.5 247V252M533.5 179V188M534.5 232V244M535.5 186V204M535.5 220V232M536.5 162V170M536.5 231V240M537.5 204V219M539.5 182V189M539.5 204V218M540.5 191V204M540.5 226V233M541.5 216V223M542.5 172V177M544.5 171V177M545.5 187V191M545.5 215V223M546.5 181V186M546.5 221V230M547.5 204V216M549.5 196V214M551.5 181V188M551.5 204V213M552.5 225V231M554.5 182V204M556.5 239V250M559.5 186V204M560.5 149V165M560.5 246V259M561.5 169V177M561.5 204V227M562.5 143V152M563.5 170V181M564.5 146V159M564.5 248V256M565.5 170V184M567.5 226V237M568.5 164V174M568.5 247V253M569.5 188V204M570.5 236V240M572.5 229V242M573.5 176V185M573.5 204V218M575.5 186V219M576.5 164V173M580.5 170V174M581.5 189V204M581.5 216V223M582.5 174V180M583.5 192V204M583.5 213V222M585.5 193V216M586.5 182V188M586.5 225V227M587.5 204V215M588.5 183V189M588.5 224V230M589.5 188V196M589.5 215V219M590.5 216V223M591.5 204V212M592.5 183V186M593.5 191V198M594.5 188V193M596.5 178V184M597.5 221V228M598.5 155V165M599.5 204V217M601.5 171V182M601.5 204V217M602.5 166V177M603.5 185V219M604.5 227V239M605.5 187V204M605.5 218V229M606.5 157V167M606.5 229V237M607.5 185V204M608.5 231V239M609.5 191V223M610.5 238V247M613.5 188V220M616.5 161V167M617.5 223V231M621.5 204V220M622.5 170V178M622.5 204V219M623.5 177V190M623.5 220V229M624.5 231V238M626.5 167V172M626.5 231V235M627.5 183V192M629.5 184V195M630.5 172V177M630.5 234V241M631.5 193V204M631.5 219V228M632.5 177V186M632.5 225V233M634.5 179V185M635.5 194V204M637.5 193V204M638.5 181V189M638.5 227V235M639.5 214V222M640.5 176V183M641.5 194V204M641.5 213V221M642.5 172V179M643.5 217V227M645.5 204V221M646.5 137V152M646.5 245V255M647.5 162V178M648.5 144V159M649.5 164V178M649.5 229V245M650.5 139V149M652.5 260V262M654.5 143V156M654.5 204V227M655.5 180V204M655.5 222V237M657.5 224V234M658.5 231V245M659.5 220V230M662.5 170V173M663.5 188V204M663.5 216V228M664.5 163V169M664.5 240V246M666.5 227V237M668.5 170V175M668.5 235V241M669.5 184V193M669.5 219V227M670.5 177V188M671.5 215V226M672.5 232V237M673.5 194V215M675.5 194V204M676.5 187V189M677.5 196V204M679.5 197V204M679.5 211V216M680.5 186V190M681.5 194V197M683.5 196V198M683.5 204V209M685.5 193V213M686.5 166V176M687.5 220V228M688.5 163V170M689.5 185V204M690.5 149V153M691.5 188V204M692.5 159V165M692.5 245V259M693.5 168V179M695.5 185V225M697.5 184V204M697.5 226V233M698.5 234V249M699.5 187V204M701.5 169V185M704.5 182V204M705.5 221V233M707.5 223V231M708.5 164V177M709.5 204V222M710.5 233V246M711.5 178V188M712.5 170V181M714.5 169V181M715.5 190V221M716.5 174V179M717.5 185V190M718.5 227V238M722.5 180V188M723.5 190V193M724.5 194V204M725.5 204V214M727.5 194V204M728.5 219V226M729.5 194V204M730.5 175V181M731.5 171V186M731.5 224V236M734.5 260V270M737.5 163V175M739.5 169V179M739.5 226V241M741.5 172V183M742.5 189V204M742.5 244V252M743.5 173V184M745.5 185V204M747.5 227V234M748.5 232V246M749.5 175V188M749.5 204V225M750.5 159V176M751.5 204V225M752.5 163V173M752.5 235V249M753.5 177V186M753.5 220V232M754.5 160V176M757.5 189V204M757.5 218V230M758.5 189V204M759.5 204V219M760.5 171V176M760.5 225V235M761.5 189V195M761.5 215V225M764.5 184V191M764.5 228V233M765.5 214V220M766.5 194V204M766.5 228V231M768.5 182V187M768.5 225V230M769.5 204V212M770.5 184V188M771.5 191V195M771.5 212V217M772.5 174V178M773.5 180V189M774.5 160V175M775.5 172V185M777.5 173V186M778.5 152V161M779.5 167V186M779.5 221V230M780.5 240V252M781.5 179V187M783.5 204V224M784.5 165V178M785.5 186V204M785.5 222V229M787.5 204V219M788.5 230V237M790.5 170V181M791.5 186V204M791.5 222V226M792.5 165V175M792.5 239V247M794.5 165V174M794.5 231V242M795.5 181V204M795.5 218V231M796.5 241V246M797.5 172V183M799.5 183V204M799.5 222V229M803.5 204V220M804.5 238V242M806.5 236V241M807.5 204V217M808.5 225V233M809.5 184V192M810.5 232V236M811.5 185V191M811.5 216V225M812.5 223V232M813.5 204V215M816.5 230V235M817.5 187V196M819.5 190V204M821.5 204V222M822.5 129V136M822.5 236V252M823.5 204V225M825.5 204V229M826.5 147V162M826.5 249V267M828.5 148V161M828.5 252V260M829.5 204V230M830.5 258V273M831.5 229V243M832.5 148V165M834.5 143V158M834.5 236V252M836.5 151V159M836.5 240V251M838.5 164V168M839.5 227V236M840.5 151V161M840.5 236V248M845.5 192V204M845.5 221V229M847.5 193V204M847.5 222V229M848.5 180V189M849.5 195V204M850.5 229V237M851.5 204V219M852.5 196V204M854.5 214V218M855.5 195V198M856.5 188V191M856.5 217V219M857.5 209V213M858.5 213V216M859.5 195V199M859.5 204V209M860.5 197V204M862.5 169V178M862.5 231V236M863.5 170V180M864.5 180V204M865.5 180V204M866.5 238V249M867.5 223V238M868.5 241V252M870.5 243V254M872.5 244V249M873.5 171V181M875.5 170V186M875.5 223V236M878.5 186V204M878.5 236V247M879.5 185V204M880.5 234V251M882.5 152V161M883.5 224V234M884.5 161V170M884.5 235V245M885.5 174V187M886.5 158V174M889.5 177V184M889.5 204V226M890.5 249V254M892.5 175V183M893.5 222V232M894.5 174V177M896.5 180V188M897.5 186V192M898.5 226V235M899.5 189V192M899.5 218V223M900.5 226V232M901.5 195V204M901.5 214V221M902.5 225V232M903.5 215V220M904.5 183V187M904.5 226V230M905.5 215V220M906.5 175V181M906.5 204V218M907.5 223V230M908.5 159V167M909.5 181V204M909.5 227V243M910.5 139V147M911.5 175V230M913.5 165V176M913.5 204V232M914.5 149V163M914.5 204V228M915.5 162V179M916.5 249V262M917.5 168V185M918.5 204V229M920.5 161V174M920.5 242V249M921.5 189V204M922.5 149V164M922.5 249V259M923.5 185V223M925.5 223V235M927.5 172V183M927.5 226V235M929.5 175V186M929.5 223V234M930.5 166V176M930.5 236V245M931.5 191V204M933.5 220V232M936.5 240V252M937.5 204V220M938.5 239V248M939.5 194V204M939.5 219V228M940.5 224V234M941.5 190V195M943.5 217V224M944.5 221V230M945.5 195V204M945.5 213V219M946.5 186V191M947.5 197V204M947.5 212V218M948.5 187V194M948.5 218V222M949.5 197V204M951.5 188V204M952.5 161V169M953.5 222V227M954.5 164V176M954.5 232V241M955.5 173V185M956.5 246V256M958.5 159V171M958.5 234V247M959.5 204V224M961.5 183V224M962.5 231V242M964.5 168V177M967.5 191V204M968.5 168V178M969.5 184V220M970.5 241V250M971.5 173V187M973.5 222V231M974.5 161V170M975.5 185V204M975.5 226V233M976.5 157V169M976.5 236V244M977.5 183V204M978.5 242V250M980.5 159V168M980.5 231V241M981.5 186V204M983.5 188V204M984.5 192V204M985.5 191V204M985.5 216V228M986.5 234V241M988.5 173V179M988.5 232V239M991.5 192V204M992.5 181V190M993.5 189V194M995.5 189V218M996.5 241V247M997.5 181V204M997.5 221V236M999.5 150V175M1000.5 183V227M1002.5 142V163M1003.5 204V232M1004.5 144V159M1004.5 252V268M1005.5 165V180M1006.5 181V204M1007.5 204V236M1008.5 156V164M1010.5 204V225M1011.5 184V204M1012.5 161V169M1012.5 242V252M1015.5 204V224M1016.5 248V262M1017.5 171V183M1018.5 157V168M1018.5 234V248M1019.5 225V233M1020.5 148V159M1020.5 242V253M1021.5 177V188M1021.5 204V224M1022.5 244V251M1025.5 193V221M1027.5 216V226M1030.5 187V192M1032.5 183V187M1032.5 227V232M1035.5 213V217M1036.5 221V225M1037.5 198V204M1038.5 214V216M1039.5 196V199M1039.5 209V212M1041.5 186V204M1042.5 184V204M1043.5 223V232M1044.5 142V148M1044.5 235V245M1045.5 223V236M1046.5 150V163M1047.5 229V243M1048.5 247V252M1049.5 204V227M1050.5 153V174M1051.5 172V182M1051.5 222V241M1052.5 235V250M1053.5 222V233M1054.5 231V243M1055.5 224V237M1056.5 160V176M1058.5 246V259M1059.5 204V231M1060.5 160V174M1063.5 184V204M1064.5 148V160M1065.5 177V187M1065.5 220V237M1066.5 241V249M1067.5 192V204M1068.5 168V173M1068.5 227V239M1069.5 186V192M1069.5 220V231M1070.5 171V181M1072.5 233V241M1074.5 194V204M1077.5 214V221M1078.5 220V228M1083.5 177V187M1084.5 149V162M1085.5 219V231M1086.5 237V249M1087.5 164V178M1087.5 204V225M1088.5 239V255M1090.5 141V160M1091.5 181V204M1092.5 148V163M1093.5 181V226M1095.5 227V241M1096.5 239V249M1097.5 204V224M1098.5 238V246M1099.5 222V233M1103.5 181V204M1103.5 227V234M1104.5 245V252M1106.5 236V246M1107.5 204V224M1108.5 159V166M1108.5 245V254M1110.5 165V169M1111.5 184V190M1111.5 223V231M1112.5 177V186M1112.5 231V243M1113.5 204V223M1114.5 229V241M1115.5 188V193M1116.5 204V220M1117.5 194V204M1117.5 216V226M1118.5 226V233M1119.5 204V216M1120.5 186V190M1121.5 213V225M1122.5 228V232M1124.5 187V192M1124.5 219V225M1125.5 198V204M1125.5 212V217M1126.5 184V186M1126.5 217V222M1127.5 191V204M1128.5 227V235M1129.5 217V231M1130.5 228V244M1131.5 173V185M1131.5 223V232M1134.5 157V161M1134.5 240V252M1135.5 186V204M1136.5 166V178M1137.5 185V204M1138.5 241V245M1139.5 185V217M1140.5 165V179M1142.5 229V240M1143.5 174V187M1143.5 218V232M1144.5 230V240M1147.5 222V230M1148.5 232V248M1149.5 173V185M1149.5 222V236M1150.5 160V172M1151.5 183V204M1151.5 224V235M1152.5 146V164M1152.5 232V243M1153.5 176V186M1153.5 221V233M1154.5 162V172M1154.5 232V239M1155.5 176V185M1157.5 179V189M1157.5 221V232M1158.5 170V176M1159.5 182V192M1159.5 219V227M1160.5 193V204M1162.5 181V186M1162.5 225V232M1163.5 185V193M1164.5 180V185M1165.5 186V191M1167.5 195V204M1167.5 217V223M1168.5 181V188M1168.5 223V229M1169.5 186V193M1169.5 204V215M1170.5 181V186M1172.5 182V190M1172.5 222V229M1174.5 228V238M1175.5 179V204M1176.5 126V141M1177.5 177V204M1180.5 247V266M1181.5 177V204M1182.5 134V148M1183.5 181V229M1185.5 162V184M1185.5 204V235M1186.5 259V268M1187.5 173V181M1188.5 240V251M1189.5 183V204M1192.5 151V161M1192.5 234V247M1194.5 246V257M1195.5 179V204M1195.5 224V235M1196.5 179V204M1196.5 232V248M1197.5 174V183M1197.5 204V223M1198.5 160V172M1199.5 179V187M1200.5 233V240M1201.5 191V220M1202.5 173V182M1203.5 190V204M1204.5 182V188M1204.5 227V240M1205.5 189V195M1206.5 178V183M1207.5 217V228M1208.5 224V229M1209.5 195V204M1210.5 204V215M1211.5 192V197M1211.5 204V212M1212.5 185V188M1213.5 193V197M1214.5 216V218M1215.5 195V199M1217.5 184V188M1217.5 216V224M1219.5 166V177M1219.5 204V222M1220.5 140V146M1220.5 236V245M1221.5 181V225M1222.5 236V254M1223.5 228V236M1226.5 155V166M1226.5 256V263M1228.5 158V169M1234.5 237V243M1236.5 160V171M1237.5 174V182M1238.5 156V170M1239.5 173V183M1239.5 204V221M1245.5 222V235M1246.5 234V245M1247.5 184V192M1248.5 177V183M1249.5 184V192M1250.5 174V178M1251.5 185V190M1251.5 218V231M1254.5 222V228M1255.5 196V204M1256.5 225V229M1257.5 198V204M1257.5 219V228M1258.5 188V192M1258.5 204V220M1260.5 172V182M1261.5 204V221M1263.5 164V182M1265.5 174V204M1266.5 245V264M1267.5 204V232M1268.5 245V261M1269.5 169V184M1270.5 145V155M1271.5 182V230M1272.5 148V160M1272.5 204V229M1273.5 204V226M1275.5 204V221M1276.5 229V245M1277.5 171V188M1278.5 161V175M1280.5 163V173M1281.5 171V184M1282.5 233V248M1284.5 243V251M1285.5 176V186M1286.5 168V178M1287.5 223V232M1288.5 174V184M1289.5 184V194M1289.5 223V230M1290.5 233V237M1291.5 187V195M1292.5 228V237M1293.5 220V227M1294.5 204V218M1295.5 216V222M1296.5 230V235M1297.5 196V204M1298.5 183V185M1298.5 222V229M1299.5 204V214M1300.5 186V192M1301.5 195V204M1301.5 212V217M1305.5 185V204M1307.5 221V230M1309.5 174V180M1310.5 167V176M1311.5 188V204M1315.5 187V219M1317.5 188V204M1317.5 223V233M1319.5 218V232M1320.5 160V174M1323.5 172V187M1328.5 232V241M1329.5 181V204M1331.5 178V185M1333.5 187V224M1334.5 169V180M1335.5 204V220M1336.5 176V183M1336.5 237V248M1337.5 191V204M1337.5 221V232M1339.5 193V204M1340.5 239V245M1342.5 179V188M1342.5 228V237M1343.5 185V193M1343.5 217V225M1344.5 225V229M1345.5 217V226M1346.5 224V230M1347.5 216V222M1348.5 181V184M1348.5 227V233M1349.5 221V230M1351.5 226V239M1353.5 150V166M1353.5 204V226M1354.5 239V260M1355.5 159V171M1357.5 204V229M1358.5 266V275M1359.5 204V230M1360.5 178V204M1362.5 157V170M1363.5 228V240M1366.5 162V169M1367.5 181V204M1367.5 223V236M1368.5 161V173M1368.5 246V260M1369.5 204V224M1370.5 252V259M1371.5 183V204M1372.5 233V249M1373.5 204V225M1375.5 187V204M1375.5 221V233M1376.5 169V178M1378.5 176V186M1378.5 240V250M1379.5 194V204M1380.5 184V189M1381.5 188V195M1381.5 220V229M1382.5 186V192M1385.5 194V198M1385.5 204V214M1387.5 197V204M1388.5 218V223M1389.5 204V211M1390.5 193V196M1391.5 197V199M1392.5 218V219M1393.5 189V204M1395.5 167V180M1396.5 149V170M1396.5 243V253M1397.5 224V238M1398.5 137V149M1398.5 239V250M1401.5 170V179M1401.5 224V243M1404.5 142V156M1406.5 160V170M1406.5 234V248M1407.5 180V204M1409.5 204V224M1410.5 156V172M1410.5 232V243M1411.5 224V231M1412.5 245V251M1413.5 204V220M1414.5 232V240M1415.5 186V204M1416.5 146V156M1416.5 242V251M1417.5 171V182M1417.5 204V221M1420.5 184V204M1420.5 231V244M1421.5 177V188M1423.5 182V189M1425.5 204V221M1426.5 231V244M1427.5 194V204M1430.5 182V187M1431.5 190V195M1432.5 182V188M1435.5 190V197M1438.5 171V175M1438.5 224V231M1439.5 204V219M1440.5 251V262M1441.5 204V229M1442.5 149V161M1442.5 246V259M1443.5 165V182M1444.5 244V260M1445.5 168V185M1446.5 152V158M1446.5 259V268M1447.5 204V228M1449.5 204V226M1450.5 149V158M1450.5 204V225M1452.5 250V265M1453.5 173V182M1453.5 204V220M1456.5 158V164M1456.5 246V255M1457.5 204V222M1458.5 158V165M1458.5 235V247M1459.5 187V224M1460.5 236V245M1461.5 172V187M1461.5 204V219M1462.5 236V246M1463.5 177V187M1464.5 235V248M1465.5 204V225M1470.5 179V184M1471.5 188V194M1472.5 226V234M1473.5 217V224M1474.5 185V191M1474.5 224V230M1477.5 195V214M1479.5 192V196M1481.5 204V216M1482.5 164V174M1483.5 171V182M1483.5 221V229M1484.5 152V162M1484.5 234V246M1485.5 173V181M1486.5 230V243M1488.5 153V155M1491.5 223V230M1493.5 220V232" stroke="#a0a0a0"/>
<path d="M256.5 229V238M257.5 217V229M259.5 189V204M260.5 168V177M260.5 228V241M262.5 166V177M263.5 204V219M265.5 204V218M266.5 190V204M267.5 188V204M269.5 193V204M270.5 230V234M271.5 204V217M272.5 204V219M273.5 182V190M274.5 174V179M275.5 204V217M278.5 176V182M278.5 226V232M280.5 176V183M284.5 177V186M285.5 204V215M287.5 185V191M290.5 176V185M291.5 190V204M300.5 240V253M301.5 169V186M301.5 224V240M302.5 180V204M312.5 185V204M315.5 182V204M318.5 241V249M319.5 168V183M324.5 204V223M325.5 185V218M326.5 166V176M327.5 186V220M329.5 222V233M331.5 187V221M332.5 159V171M333.5 180V230M334.5 140V156M335.5 237V250M339.5 204V235M340.5 242V264M341.5 204V226M342.5 245V260M343.5 180V204M344.5 153V165M345.5 231V236M351.5 179V190M356.5 181V186M357.5 187V194M360.5 197V204M361.5 198V204M362.5 191V195M362.5 215V217M365.5 204V209M367.5 204V209M368.5 193V196M379.5 204V216M388.5 158V164M390.5 154V167M390.5 237V250M394.5 150V166M395.5 166V186M396.5 245V253M397.5 227V241M401.5 204V222M402.5 236V252M403.5 225V238M411.5 184V191M411.5 204V219M412.5 178V183M415.5 194V204M417.5 190V195M419.5 204V214M424.5 166V173M427.5 187V204M430.5 225V236M431.5 190V204M432.5 175V184M432.5 225V233M434.5 226V231M436.5 228V236M437.5 189V204M438.5 173V181M441.5 191V204M441.5 219V228M446.5 228V235M447.5 204V218M453.5 184V189M453.5 204V219M454.5 224V232M456.5 175V184M459.5 187V204M460.5 177V183M463.5 178V186M463.5 204V219M464.5 230V240M465.5 221V232M466.5 232V246M467.5 179V204M469.5 182V204M473.5 166V174M473.5 204V233M474.5 246V265M475.5 164V180M477.5 176V225M478.5 149V168M485.5 185V204M487.5 188V204M487.5 223V229M488.5 232V239M489.5 190V220M493.5 193V204M495.5 195V204M496.5 219V225M497.5 189V196M499.5 194V197M499.5 213V216M500.5 215V219M502.5 212V214M503.5 200V204M503.5 207V212M506.5 199V200M507.5 200V201M508.5 183V191M512.5 227V240M517.5 216V229M518.5 160V174M519.5 169V186M520.5 162V175M521.5 222V234M523.5 185V204M527.5 170V186M528.5 161V176M528.5 234V247M529.5 183V204M537.5 191V204M538.5 172V182M543.5 184V193M544.5 222V230M545.5 204V215M547.5 194V204M548.5 220V227M550.5 181V187M551.5 188V204M552.5 163V179M553.5 180V204M555.5 171V180M555.5 204V216M556.5 152V163M557.5 169V181M558.5 151V168M562.5 235V249M565.5 204V226M566.5 164V171M567.5 186V204M569.5 222V232M571.5 187V204M571.5 219V229M576.5 230V235M577.5 204V218M578.5 225V234M579.5 182V192M579.5 217V226M582.5 223V230M584.5 180V188M587.5 194V204M593.5 204V211M594.5 215V221M596.5 225V232M597.5 179V191M600.5 163V177M601.5 182V204M602.5 229V235M604.5 165V173M611.5 178V186M614.5 231V241M615.5 223V234M616.5 231V243M617.5 179V186M618.5 230V241M620.5 232V241M621.5 178V189M627.5 204V219M633.5 192V217M636.5 223V229M641.5 204V213M644.5 156V166M648.5 240V257M650.5 244V256M651.5 163V180M651.5 229V246M653.5 166V179M653.5 204V224M659.5 175V185M660.5 164V175M660.5 234V244M665.5 181V190M665.5 220V226M666.5 172V180M670.5 223V232M672.5 178V185M674.5 184V187M675.5 213V220M676.5 220V226M679.5 204V211M681.5 210V214M682.5 191V194M682.5 214V219M684.5 217V221M687.5 184V220M694.5 157V167M694.5 237V250M696.5 157V171M696.5 237V251M698.5 162V169M700.5 160V178M701.5 204V223M702.5 163V175M706.5 164V179M707.5 192V204M708.5 236V245M710.5 169V180M711.5 204V224M712.5 233V243M716.5 230V240M718.5 176V184M719.5 183V193M719.5 204V218M723.5 204V216M726.5 186V191M726.5 223V227M727.5 204V215M729.5 204V216M730.5 227V239M732.5 182V204M732.5 238V252M733.5 175V204M734.5 142V162M735.5 177V228M736.5 244V260M738.5 150V164M739.5 179V204M740.5 157V172M741.5 183V204M744.5 159V174M744.5 235V250M748.5 165V176M750.5 234V244M751.5 175V187M753.5 186V220M754.5 232V243M755.5 185V204M755.5 220V230M756.5 165V176M759.5 190V204M762.5 183V189M763.5 194V204M767.5 204V213M770.5 220V222M771.5 204V212M772.5 219V225M773.5 204V215M775.5 204V218M776.5 164V171M776.5 229V238M778.5 232V241M782.5 237V244M783.5 189V204M784.5 232V249M786.5 204V222M790.5 229V236M793.5 177V186M795.5 204V218M797.5 183V221M798.5 161V175M800.5 233V243M801.5 190V204M805.5 216V229M806.5 179V184M809.5 218V225M810.5 195V204M813.5 194V204M818.5 183V187M818.5 220V229M820.5 156V166M827.5 180V204M829.5 177V204M832.5 243V256M833.5 227V241M835.5 228V242M837.5 173V184M837.5 222V235M838.5 237V248M841.5 222V234M842.5 230V245M843.5 177V186M844.5 168V178M845.5 204V221M846.5 189V204M846.5 230V238M849.5 204V220M851.5 196V204M859.5 199V204M860.5 213V218M861.5 183V192M861.5 213V218M864.5 233V243M866.5 149V163M869.5 204V226M871.5 228V247M872.5 162V172M874.5 162V168M877.5 204V223M881.5 183V204M881.5 226V234M882.5 237V247M883.5 185V204M885.5 224V234M887.5 183V204M890.5 166V182M891.5 190V204M893.5 187V196M895.5 192V221M902.5 185V190M903.5 204V215M905.5 187V194M907.5 178V185M908.5 238V249M912.5 140V159M912.5 245V259M916.5 152V165M917.5 204V227M918.5 159V171M919.5 204V229M924.5 161V174M925.5 187V204M926.5 236V251M927.5 204V226M928.5 236V248M929.5 204V223M931.5 204V224M932.5 234V244M933.5 179V189M934.5 233V243M935.5 222V233M938.5 183V184M941.5 204V215M942.5 184V189M942.5 227V230M943.5 190V195M943.5 204V217M947.5 204V212M949.5 211V216M951.5 215V222M955.5 185V224M957.5 175V184M957.5 204V224M960.5 162V173M963.5 191V204M968.5 229V239M971.5 204V222M974.5 235V244M975.5 204V226M977.5 204V220M978.5 163V174M979.5 184V204M983.5 204V220M986.5 178V187M987.5 191V217M989.5 192V204M990.5 181V186M990.5 224V233M993.5 204V213M994.5 182V187M996.5 160V175M997.5 204V221M998.5 142V157M1001.5 150V176M1003.5 159V178M1005.5 180V204M1009.5 180V227M1011.5 204V229M1013.5 181V204M1013.5 227V237M1014.5 157V174M1016.5 159V169M1019.5 171V184M1022.5 168V176M1023.5 204V221M1026.5 181V186M1026.5 229V236M1027.5 204V216M1028.5 183V189M1028.5 224V236M1029.5 204V216M1031.5 190V197M1033.5 192V197M1033.5 214V219M1034.5 190V194M1034.5 218V224M1036.5 191V194M1040.5 219V223M1041.5 204V219M1042.5 235V237M1043.5 204V223M1045.5 177V204M1046.5 204V225M1047.5 204V229M1049.5 184V204M1050.5 239V252M1053.5 175V184M1053.5 204V222M1056.5 236V246M1060.5 234V248M1061.5 223V237M1062.5 159V170M1063.5 204V224M1064.5 235V244M1066.5 168V176M1067.5 221V233M1073.5 215V224M1075.5 194V204M1076.5 181V188M1076.5 222V229M1077.5 204V214M1078.5 184V189M1079.5 190V196M1081.5 190V196M1082.5 175V184M1082.5 217V223M1083.5 204V216M1084.5 229V237M1085.5 164V184M1087.5 178V204M1088.5 144V158M1091.5 229V245M1094.5 152V171M1094.5 241V253M1095.5 184V204M1099.5 186V204M1100.5 159V173M1101.5 204V226M1102.5 186V204M1102.5 232V243M1104.5 162V177M1105.5 185V204M1105.5 225V229M1107.5 181V204M1109.5 187V204M1109.5 220V234M1110.5 232V246M1114.5 182V189M1115.5 204V218M1117.5 204V216M1120.5 224V230M1122.5 186V191M1123.5 215V222M1128.5 172V181M1129.5 171V185M1130.5 159V172M1132.5 165V175M1132.5 231V247M1133.5 222V236M1135.5 221V236M1137.5 204V221M1138.5 166V178M1140.5 230V238M1142.5 168V174M1145.5 204V225M1146.5 161V171M1147.5 174V187M1148.5 158V173M1149.5 204V222M1153.5 204V221M1155.5 223V229M1156.5 169V177M1156.5 230V240M1161.5 185V193M1161.5 217V224M1163.5 204V218M1164.5 227V232M1165.5 191V204M1166.5 224V233M1169.5 193V204M1170.5 222V229M1171.5 216V222M1173.5 189V216M1175.5 204V222M1176.5 236V249M1178.5 138V159M1178.5 241V260M1179.5 204V229M1182.5 249V272M1184.5 150V161M1187.5 226V241M1188.5 157V173M1190.5 158V170M1190.5 236V252M1193.5 169V181M1199.5 222V234M1200.5 170V179M1206.5 229V235M1208.5 183V189M1209.5 215V220M1210.5 188V193M1212.5 217V223M1214.5 191V195M1218.5 163V174M1218.5 232V243M1222.5 182V204M1223.5 163V178M1224.5 154V171M1224.5 246V259M1225.5 165V182M1225.5 204V224M1227.5 163V184M1229.5 169V183M1229.5 204V222M1231.5 178V204M1232.5 235V247M1233.5 186V204M1234.5 158V173M1235.5 185V204M1236.5 237V243M1240.5 158V169M1241.5 225V236M1243.5 204V226M1244.5 187V204M1244.5 239V250M1245.5 204V222M1247.5 192V204M1247.5 223V235M1248.5 233V248M1249.5 204V224M1251.5 204V218M1252.5 180V185M1252.5 225V237M1254.5 184V190M1260.5 232V239M1262.5 238V249M1263.5 224V244M1265.5 229V244M1267.5 164V173M1269.5 227V245M1274.5 236V250M1275.5 181V204M1279.5 220V233M1280.5 204V219M1282.5 163V173M1283.5 172V187M1283.5 204V224M1284.5 165V172M1286.5 236V241M1287.5 189V204M1288.5 233V242M1289.5 194V204M1291.5 204V220M1292.5 181V188M1293.5 204V220M1294.5 183V189M1295.5 204V216M1297.5 204V217M1299.5 196V204M1300.5 218V224M1303.5 204V215M1305.5 219V228M1306.5 159V172M1306.5 230V240M1307.5 191V221M1308.5 233V246M1311.5 204V224M1312.5 167V179M1312.5 233V247M1314.5 170V181M1316.5 168V174M1316.5 204V221M1318.5 167V174M1319.5 189V204M1323.5 187V217M1324.5 230V238M1325.5 188V204M1326.5 160V173M1326.5 230V245M1330.5 161V172M1330.5 233V246M1331.5 224V233M1332.5 232V244M1334.5 232V242M1338.5 178V187M1339.5 204V219M1340.5 181V188M1341.5 218V230M1344.5 182V187M1347.5 194V204M1350.5 183V204M1351.5 180V204M1352.5 142V160M1353.5 166V204M1354.5 148V157M1356.5 250V265M1359.5 178V204M1360.5 246V260M1361.5 181V204M1362.5 240V257M1363.5 173V179M1364.5 158V174M1365.5 183V204M1369.5 169V187M1372.5 158V169M1373.5 180V204M1374.5 162V173M1374.5 233V248M1375.5 204V221M1377.5 188V204M1379.5 222V226M1380.5 229V236M1381.5 195V204M1382.5 225V235M1383.5 196V204M1386.5 221V228M1388.5 198V204M1389.5 195V199M1393.5 204V215M1394.5 159V172M1397.5 167V181M1400.5 154V169M1401.5 179V224M1403.5 180V228M1404.5 236V252M1405.5 174V182M1405.5 223V242M1409.5 171V186M1413.5 170V185M1414.5 157V173M1415.5 204V222M1418.5 183V204M1418.5 232V241M1419.5 173V186M1419.5 225V237M1422.5 169V179M1423.5 216V230M1424.5 174V182M1425.5 193V204M1426.5 181V187M1427.5 217V228M1428.5 179V187M1429.5 204V217M1431.5 216V223M1433.5 191V197M1434.5 186V190M1434.5 218V225M1435.5 204V213M1436.5 186V192M1436.5 217V220M1437.5 189V195M1437.5 211V217M1439.5 187V204M1440.5 159V174M1443.5 182V204M1443.5 222V245M1447.5 171V185M1448.5 244V255M1449.5 191V204M1452.5 159V172M1455.5 186V204M1455.5 221V234M1457.5 179V188M1461.5 187V204M1462.5 161V172M1464.5 168V177M1467.5 192V204M1468.5 178V185M1468.5 229V238M1469.5 194V204M1470.5 228V238M1471.5 194V218M1475.5 192V196M1475.5 204V216M1476.5 223V227M1478.5 186V191M1479.5 204V213M1480.5 185V193M1481.5 182V191M1482.5 226V236M1485.5 181V204M1487.5 180V204M1487.5 224V234M1488.5 232V249M1490.5 162V176M1492.5 204V221" stroke="#aaaaaa"/>
<path d="M255.5 188V204M256.5 162V176M258.5 216V231M259.5 204V220M261.5 204V217M264.5 181V189M265.5 189V204M266.5 229V235M267.5 204V216M268.5 226V232M270.5 173V181M272.5 172V179M276.5 184V191M276.5 217V229M279.5 191V204M281.5 190V204M282.5 182V190M282.5 217V225M286.5 225V233M287.5 191V204M288.5 165V176M288.5 221V231M290.5 217V224M292.5 227V236M293.5 186V204M294.5 175V185M295.5 204V224M296.5 171V183M296.5 222V233M297.5 183V204M298.5 154V175M298.5 223V235M299.5 183V204M300.5 156V168M301.5 186V204M302.5 241V252M303.5 179V204M304.5 236V259M306.5 227V240M308.5 160V180M308.5 241V258M309.5 204V224M310.5 151V167M312.5 227V236M314.5 237V253M317.5 204V227M319.5 204V217M320.5 239V252M321.5 204V225M322.5 165V176M322.5 239V246M323.5 204V224M324.5 164V174M328.5 169V178M329.5 191V204M330.5 170V182M330.5 230V242M334.5 230V241M336.5 247V272M338.5 157V177M340.5 143V157M342.5 149V165M344.5 240V260M346.5 167V183M347.5 204V227M348.5 224V234M350.5 167V177M350.5 222V231M352.5 172V182M353.5 190V204M355.5 204V215M356.5 213V222M358.5 183V188M358.5 219V224M359.5 197V204M360.5 215V221M361.5 204V210M364.5 196V199M364.5 211V214M365.5 198V204M366.5 193V196M366.5 213V216M368.5 211V215M370.5 194V198M372.5 194V197M374.5 191V198M375.5 204V211M376.5 188V193M376.5 213V217M378.5 167V173M380.5 229V239M382.5 159V175M382.5 220V231M384.5 168V179M384.5 233V248M385.5 204V228M386.5 236V250M387.5 204V223M388.5 239V259M394.5 223V242M396.5 158V170M397.5 185V204M398.5 171V184M398.5 241V253M400.5 226V241M402.5 177V186M404.5 167V176M404.5 236V248M408.5 233V240M410.5 185V193M410.5 228V237M413.5 204V215M414.5 181V188M414.5 219V226M415.5 204V217M416.5 190V196M417.5 195V215M418.5 221V226M420.5 185V193M422.5 161V171M422.5 223V228M423.5 186V204M424.5 215V230M425.5 191V216M426.5 169V179M426.5 218V225M427.5 204V218M429.5 191V217M430.5 182V192M433.5 191V204M434.5 173V184M435.5 190V204M436.5 181V189M437.5 204V215M439.5 204V216M440.5 182V188M440.5 227V241M442.5 170V180M443.5 191V204M446.5 172V181M448.5 219V226M449.5 187V204M450.5 169V184M450.5 216V226M451.5 188V218M452.5 173V180M452.5 226V233M454.5 174V185M455.5 190V204M456.5 223V235M457.5 192V204M458.5 177V185M460.5 227V233M461.5 204V216M462.5 175V185M462.5 216V223M463.5 186V204M466.5 152V167M467.5 204V228M468.5 160V174M468.5 221V240M469.5 204V227M470.5 243V257M471.5 177V204M473.5 174V204M475.5 180V204M476.5 142V164M476.5 242V255M480.5 238V249M482.5 173V181M482.5 223V237M483.5 179V204M484.5 176V189M486.5 165V177M486.5 224V232M490.5 221V229M491.5 204V219M492.5 223V231M494.5 182V187M494.5 226V229M496.5 189V194M498.5 192V197M499.5 197V204M504.5 198V201M504.5 212V213M505.5 204V209M506.5 211V213M508.5 211V212M509.5 204V217M510.5 165V177M510.5 220V229M511.5 184V219M514.5 173V183M514.5 232V242M516.5 174V188M517.5 204V216M518.5 222V230M519.5 204V223M520.5 235V245M521.5 182V222M522.5 157V169M522.5 237V245M525.5 183V224M526.5 161V173M526.5 222V233M527.5 204V223M529.5 204V224M530.5 163V175M530.5 226V236M532.5 166V176M533.5 188V204M534.5 222V232M535.5 204V220M536.5 170V184M536.5 222V231M538.5 227V235M539.5 189V204M540.5 215V226M541.5 204V216M543.5 193V204M544.5 177V188M545.5 191V204M546.5 186V194M546.5 211V221M548.5 182V190M550.5 218V227M552.5 219V225M554.5 226V231M555.5 180V204M557.5 181V204M558.5 238V246M560.5 165V182M561.5 177V204M563.5 181V204M564.5 238V248M565.5 184V204M566.5 229V249M567.5 204V226M568.5 174V184M568.5 235V247M569.5 204V222M570.5 168V178M570.5 217V236M571.5 204V219M572.5 166V173M572.5 222V229M573.5 185V204M574.5 229V236M576.5 173V180M579.5 204V217M580.5 174V183M580.5 224V232M581.5 204V216M582.5 180V186M583.5 204V213M586.5 188V194M586.5 214V225M588.5 189V194M588.5 220V224M589.5 196V215M590.5 184V191M590.5 212V216M593.5 198V204M594.5 193V197M596.5 184V191M597.5 204V221M598.5 227V236M600.5 228V237M602.5 177V189M604.5 220V227M605.5 204V218M606.5 220V229M608.5 163V177M608.5 218V231M610.5 164V179M610.5 228V238M612.5 231V239M614.5 168V177M615.5 204V223M616.5 167V177M617.5 204V223M622.5 178V189M623.5 190V220M624.5 172V181M624.5 222V231M626.5 218V231M627.5 192V204M628.5 175V185M628.5 228V235M629.5 195V204M630.5 227V234M631.5 204V219M632.5 186V194M632.5 216V225M634.5 185V191M634.5 224V234M636.5 180V186M638.5 189V193M639.5 204V214M640.5 183V188M642.5 179V183M642.5 222V228M643.5 204V217M644.5 228V235M646.5 237V245M647.5 178V204M648.5 159V175M649.5 178V229M650.5 149V163M652.5 242V260M655.5 204V222M656.5 156V168M656.5 238V249M657.5 204V224M658.5 157V173M658.5 224V231M659.5 185V220M662.5 173V189M662.5 229V242M663.5 204V216M664.5 230V240M666.5 219V227M669.5 193V219M670.5 188V193M671.5 204V215M674.5 220V228M676.5 189V196M678.5 186V191M678.5 216V221M680.5 190V193M680.5 216V218M681.5 197V204M683.5 198V204M684.5 185V191M686.5 176V187M688.5 170V187M690.5 153V168M692.5 165V180M693.5 179V204M697.5 204V226M698.5 220V234M700.5 231V246M701.5 185V204M705.5 204V221M706.5 236V242M707.5 204V223M708.5 177V188M710.5 223V233M711.5 188V204M712.5 181V186M714.5 181V188M714.5 232V241M716.5 179V192M717.5 190V204M718.5 221V227M720.5 178V184M720.5 224V233M722.5 188V195M722.5 223V235M723.5 193V204M724.5 224V231M728.5 187V192M728.5 214V219M730.5 181V188M731.5 186V224M736.5 141V165M737.5 175V204M738.5 242V257M739.5 204V226M740.5 243V255M742.5 227V244M743.5 184V204M746.5 158V172M746.5 235V250M747.5 204V227M748.5 226V232M749.5 188V204M750.5 176V185M752.5 173V186M752.5 225V235M754.5 176V184M757.5 204V218M758.5 227V236M760.5 218V225M761.5 195V215M762.5 224V231M764.5 191V193M764.5 223V228M765.5 204V214M766.5 220V228M768.5 218V225M771.5 195V204M772.5 178V188M773.5 189V204M774.5 175V182M775.5 185V204M777.5 186V204M778.5 161V173M779.5 186V221M780.5 161V169M781.5 187V204M784.5 178V186M785.5 204V222M786.5 165V175M788.5 218V230M790.5 181V189M791.5 204V222M792.5 175V187M792.5 228V239M794.5 174V181M796.5 234V241M799.5 204V222M800.5 163V177M802.5 171V178M802.5 228V238M805.5 204V216M808.5 178V186M809.5 192V204M810.5 224V232M811.5 191V216M812.5 178V186M812.5 215V223M814.5 223V229M816.5 182V185M817.5 196V204M820.5 230V241M822.5 136V164M824.5 146V162M824.5 247V260M826.5 162V173M826.5 231V249M828.5 231V252M830.5 152V164M831.5 204V229M832.5 165V185M833.5 204V227M834.5 158V167M834.5 223V236M836.5 159V173M836.5 229V240M837.5 184V204M838.5 168V182M839.5 204V227M840.5 161V176M840.5 223V236M841.5 204V222M842.5 163V171M844.5 232V244M847.5 204V222M848.5 189V194M848.5 231V236M850.5 185V189M850.5 218V229M852.5 229V235M854.5 190V192M854.5 210V214M855.5 198V204M856.5 191V194M856.5 213V217M857.5 204V209M858.5 191V195M858.5 210V213M863.5 180V204M866.5 223V238M867.5 204V223M868.5 227V241M870.5 156V170M870.5 225V243M871.5 204V228M872.5 223V244M873.5 181V204M874.5 237V251M875.5 186V223M876.5 160V168M876.5 231V250M878.5 220V236M880.5 160V175M880.5 222V234M881.5 204V226M882.5 161V177M883.5 204V224M884.5 170V183M884.5 222V235M885.5 187V204M886.5 236V248M888.5 236V243M889.5 184V204M890.5 235V249M892.5 183V192M892.5 230V243M893.5 204V222M894.5 177V186M894.5 230V240M896.5 188V192M896.5 228V238M897.5 192V204M898.5 179V188M898.5 216V226M899.5 192V218M900.5 217V226M901.5 204V214M902.5 221V225M904.5 187V193M904.5 218V226M905.5 204V215M906.5 181V190M907.5 204V223M908.5 167V186M909.5 204V227M910.5 147V159M910.5 240V254M913.5 176V204M914.5 163V181M915.5 179V204M916.5 233V249M917.5 185V204M920.5 174V181M920.5 227V242M922.5 164V171M925.5 204V223M927.5 183V204M928.5 165V175M929.5 186V204M930.5 224V236M933.5 204V220M934.5 173V181M936.5 229V240M938.5 231V239M939.5 204V219M940.5 183V187M940.5 220V224M941.5 195V204M943.5 195V204M944.5 185V190M944.5 216V221M945.5 204V213M946.5 191V196M946.5 222V227M948.5 194V197M948.5 213V218M949.5 204V211M950.5 181V187M950.5 217V224M952.5 169V185M952.5 225V236M953.5 204V222M954.5 176V183M954.5 225V232M956.5 163V174M957.5 184V204M958.5 171V186M958.5 221V234M960.5 236V242M962.5 163V178M962.5 221V231M964.5 177V188M964.5 229V241M966.5 170V177M966.5 230V234M968.5 178V183M970.5 166V174M971.5 187V204M972.5 234V242M973.5 204V222M974.5 170V185M976.5 169V179M976.5 226V236M978.5 231V242M982.5 230V237M985.5 204V216M986.5 224V234M988.5 179V185M988.5 225V232M992.5 190V193M993.5 194V204M999.5 175V204M1002.5 163V174M1002.5 244V260M1004.5 159V181M1004.5 231V252M1006.5 253V265M1008.5 243V260M1010.5 156V173M1012.5 169V184M1014.5 239V253M1017.5 183V204M1018.5 168V185M1018.5 222V234M1019.5 184V225M1020.5 159V175M1021.5 188V204M1022.5 233V244M1024.5 231V241M1030.5 192V195M1030.5 223V231M1033.5 204V214M1035.5 204V213M1038.5 193V197M1039.5 199V209M1040.5 181V186M1044.5 221V235M1045.5 204V223M1046.5 163V172M1048.5 226V247M1050.5 174V181M1051.5 182V222M1052.5 221V235M1054.5 159V177M1054.5 226V231M1055.5 204V224M1056.5 176V184M1058.5 159V173M1060.5 174V187M1062.5 239V253M1064.5 160V171M1065.5 187V220M1066.5 230V241M1068.5 218V227M1069.5 192V220M1072.5 177V186M1072.5 227V233M1074.5 224V234M1078.5 214V220M1080.5 186V189M1080.5 219V224M1083.5 187V204M1085.5 184V219M1086.5 223V237M1090.5 160V180M1091.5 204V229M1092.5 163V182M1092.5 247V259M1095.5 204V227M1096.5 161V175M1096.5 229V239M1098.5 225V238M1099.5 204V222M1100.5 230V240M1103.5 204V227M1106.5 160V172M1106.5 223V236M1108.5 166V176M1111.5 190V223M1112.5 186V193M1112.5 224V231M1114.5 221V229M1115.5 193V204M1116.5 184V188M1118.5 183V192M1118.5 217V226M1120.5 190V199M1121.5 204V213M1122.5 219V228M1123.5 204V215M1124.5 192V195M1124.5 213V219M1125.5 204V212M1128.5 218V227M1129.5 185V217M1130.5 223V228M1131.5 185V223M1134.5 161V176M1134.5 232V240M1136.5 178V182M1136.5 233V243M1138.5 229V241M1140.5 179V187M1142.5 219V229M1143.5 187V218M1144.5 162V174M1144.5 221V230M1146.5 233V241M1147.5 204V222M1148.5 222V232M1149.5 185V204M1150.5 172V185M1150.5 235V250M1151.5 204V224M1152.5 223V232M1153.5 186V204M1154.5 172V185M1154.5 221V232M1155.5 185V204M1157.5 189V221M1158.5 229V235M1159.5 192V219M1160.5 227V234M1162.5 186V193M1162.5 220V225M1163.5 193V204M1164.5 185V194M1166.5 181V186M1167.5 204V217M1168.5 188V194M1168.5 214V223M1170.5 186V194M1171.5 204V216M1172.5 190V194M1172.5 215V222M1174.5 158V172M1174.5 220V228M1176.5 141V159M1180.5 231V247M1184.5 243V262M1185.5 184V204M1186.5 154V167M1186.5 248V259M1187.5 181V204M1188.5 225V240M1192.5 161V170M1192.5 221V234M1194.5 156V171M1195.5 204V224M1196.5 220V232M1197.5 183V204M1198.5 172V183M1198.5 234V245M1199.5 187V222M1200.5 221V233M1202.5 182V193M1202.5 231V244M1204.5 188V193M1204.5 218V227M1205.5 195V204M1207.5 204V217M1208.5 215V224M1211.5 197V204M1212.5 188V193M1213.5 197V204M1214.5 210V216M1215.5 199V204M1216.5 217V221M1217.5 188V216M1219.5 177V204M1220.5 146V161M1220.5 226V236M1222.5 226V236M1223.5 204V228M1227.5 184V204M1228.5 169V180M1228.5 237V253M1230.5 158V169M1230.5 237V251M1234.5 222V237M1236.5 171V185M1237.5 182V204M1238.5 170V185M1239.5 183V204M1240.5 235V248M1241.5 204V225M1242.5 239V251M1246.5 171V179M1248.5 183V191M1249.5 192V204M1250.5 178V188M1250.5 230V238M1251.5 190V204M1254.5 217V222M1256.5 187V190M1256.5 216V225M1257.5 204V219M1258.5 192V197M1262.5 155V170M1263.5 182V224M1264.5 150V163M1264.5 239V257M1266.5 146V157M1268.5 230V245M1269.5 184V204M1270.5 155V169M1270.5 244V263M1272.5 160V170M1276.5 160V170M1276.5 221V229M1277.5 188V204M1278.5 175V182M1278.5 232V247M1280.5 173V186M1281.5 184V204M1282.5 221V233M1283.5 187V204M1284.5 235V243M1285.5 186V204M1286.5 178V188M1287.5 204V223M1288.5 184V188M1289.5 204V223M1290.5 182V188M1290.5 221V233M1291.5 195V204M1292.5 220V228M1296.5 183V189M1298.5 185V191M1298.5 215V222M1300.5 192V197M1301.5 204V212M1302.5 187V193M1304.5 172V181M1309.5 180V204M1310.5 176V185M1310.5 232V247M1314.5 234V248M1317.5 204V223M1319.5 204V218M1320.5 174V187M1320.5 228V239M1324.5 162V174M1328.5 158V166M1328.5 220V232M1331.5 185V204M1334.5 180V191M1336.5 183V190M1337.5 204V221M1338.5 232V238M1340.5 228V239M1342.5 188V196M1342.5 219V228M1343.5 193V217M1344.5 218V225M1345.5 204V217M1346.5 214V224M1347.5 204V216M1348.5 184V190M1349.5 204V221M1350.5 234V244M1351.5 204V226M1354.5 226V239M1355.5 171V204M1356.5 147V161M1358.5 141V160M1358.5 247V266M1362.5 170V178M1363.5 204V228M1364.5 236V248M1366.5 169V186M1366.5 236V253M1367.5 204V223M1368.5 173V183M1368.5 237V246M1370.5 159V171M1370.5 234V252M1372.5 222V233M1376.5 178V192M1380.5 189V195M1381.5 204V220M1382.5 192V196M1384.5 188V190M1384.5 225V229M1385.5 198V204M1386.5 189V193M1388.5 215V218M1390.5 196V200M1390.5 215V221M1391.5 199V204M1392.5 194V198M1392.5 215V218M1394.5 225V235M1395.5 180V204M1396.5 170V181M1396.5 233V243M1397.5 204V224M1398.5 149V161M1398.5 224V239M1400.5 239V255M1402.5 240V251M1404.5 156V166M1406.5 170V181M1406.5 224V234M1408.5 162V172M1408.5 229V241M1409.5 186V204M1410.5 172V183M1410.5 222V232M1411.5 204V224M1412.5 158V170M1412.5 233V245M1413.5 185V204M1416.5 156V170M1416.5 231V242M1417.5 182V204M1419.5 186V204M1420.5 220V231M1421.5 188V204M1422.5 228V241M1423.5 189V204M1426.5 223V231M1430.5 187V194M1430.5 222V230M1431.5 195V204M1432.5 188V196M1432.5 220V226M1435.5 197V204M1438.5 175V186M1438.5 214V224M1442.5 161V180M1442.5 224V246M1444.5 160V170M1444.5 227V244M1445.5 185V204M1446.5 247V259M1448.5 160V171M1450.5 158V175M1453.5 182V204M1454.5 162V177M1454.5 235V251M1458.5 219V235M1460.5 221V236M1462.5 225V236M1463.5 187V204M1464.5 222V235M1466.5 229V245M1472.5 184V189M1472.5 218V226M1473.5 204V217M1474.5 191V195M1474.5 215V224M1475.5 196V204M1476.5 186V190M1478.5 221V227M1479.5 196V204M1482.5 174V187M1483.5 182V221M1484.5 162V174M1484.5 222V234M1486.5 158V172M1486.5 217V230M1490.5 235V245M1491.5 204V223M1492.5 166V174M1493.5 204V220" stroke="#b4b4b4"/>
<path d="M254.5 164V173M254.5 219V229M256.5 217V229M257.5 204V217M260.5 177V188M260.5 220V228M264.5 229V238M268.5 172V180M273.5 190V204M278.5 182V191M278.5 215V226M280.5 183V189M280.5 225V234M284.5 186V193M290.5 185V192M292.5 169V181M300.5 229V240M301.5 204V224M304.5 165V181M306.5 167V181M310.5 239V259M314.5 169V179M316.5 170V181M316.5 237V250M319.5 183V204M320.5 172V182M326.5 176V188M329.5 204V222M332.5 171V181M332.5 238V245M334.5 156V172M335.5 204V237M338.5 250V265M340.5 233V242M344.5 165V180M345.5 204V231M346.5 238V252M351.5 190V204M354.5 225V234M356.5 186V192M357.5 194V204M362.5 195V198M362.5 210V215M368.5 196V198M374.5 214V219M378.5 223V233M380.5 158V174M388.5 164V184M390.5 167V181M394.5 166V182M395.5 186V204M396.5 223V245M397.5 204V227M400.5 160V171M403.5 204V225M408.5 171V180M411.5 191V204M412.5 183V194M416.5 213V225M424.5 173V186M430.5 215V225M432.5 214V225M434.5 215V226M436.5 218V228M441.5 204V219M444.5 230V237M446.5 222V228M448.5 174V179M453.5 189V204M454.5 215V224M456.5 184V192M460.5 183V192M464.5 221V230M465.5 204V221M472.5 243V264M474.5 225V246M484.5 232V247M487.5 204V223M488.5 176V187M496.5 217V219M497.5 196V204M498.5 217V222M499.5 204V213M500.5 191V195M502.5 208V212M503.5 204V207M506.5 200V201M507.5 201V204M508.5 191V194M512.5 177V187M512.5 222V227M516.5 228V243M518.5 174V180M519.5 186V204M524.5 170V186M527.5 186V204M528.5 176V187M528.5 222V234M532.5 236V247M538.5 182V191M542.5 177V186M544.5 215V222M548.5 213V220M550.5 187V194M556.5 163V185M556.5 231V239M560.5 236V246M562.5 152V170M562.5 227V235M564.5 159V169M566.5 171V183M576.5 218V230M578.5 217V225M579.5 192V204M582.5 217V223M584.5 188V192M592.5 186V191M594.5 210V215M596.5 215V225M597.5 191V204M598.5 165V178M600.5 177V190M602.5 218V229M604.5 173V190M606.5 167V177M611.5 186V204M614.5 219V231M617.5 186V204M618.5 224V230M620.5 218V232M621.5 189V204M626.5 172V182M630.5 177V184M636.5 215V223M638.5 222V227M644.5 166V180M646.5 152V167M648.5 228V240M650.5 231V244M651.5 180V229M653.5 179V204M654.5 156V169M660.5 175V188M660.5 218V234M664.5 169V177M665.5 190V220M668.5 175V183M668.5 230V235M670.5 216V223M672.5 224V232M674.5 187V194M675.5 204V213M676.5 215V220M681.5 204V210M682.5 194V198M682.5 209V214M684.5 214V217M692.5 236V245M694.5 167V185M694.5 221V237M696.5 171V181M696.5 222V237M700.5 178V183M702.5 175V184M708.5 222V236M710.5 180V188M716.5 220V230M718.5 184V193M719.5 193V204M726.5 191V194M726.5 217V223M730.5 221V227M732.5 231V238M734.5 162V182M734.5 242V260M736.5 234V244M738.5 164V181M740.5 172V184M744.5 174V187M750.5 229V234M751.5 187V204M754.5 223V232M755.5 204V220M756.5 176V189M760.5 176V184M762.5 189V194M768.5 187V191M770.5 188V192M772.5 216V219M776.5 171V185M776.5 217V229M780.5 229V240M782.5 224V237M784.5 220V232M790.5 220V229M793.5 186V204M794.5 222V231M798.5 175V186M800.5 220V233M804.5 229V238M806.5 184V193M806.5 228V236M808.5 217V225M809.5 204V218M816.5 224V230M818.5 213V220M820.5 166V184M822.5 226V236M828.5 161V181M830.5 247V258M832.5 224V243M835.5 204V228M837.5 204V222M838.5 229V237M842.5 221V230M843.5 186V204M844.5 178V191M846.5 223V230M861.5 192V213M862.5 178V188M862.5 223V231M864.5 220V233M866.5 163V178M872.5 172V186M874.5 168V182M882.5 223V237M885.5 204V224M886.5 174V184M890.5 182V186M893.5 196V204M902.5 190V196M905.5 194V204M907.5 185V204M912.5 159V172M912.5 229V245M916.5 165V181M918.5 171V184M922.5 235V249M924.5 174V186M928.5 220V236M930.5 176V189M932.5 222V234M933.5 189V204M935.5 204V222M938.5 184V191M942.5 215V227M951.5 204V215M956.5 234V246M960.5 173V185M968.5 220V229M970.5 229V241M974.5 222V235M980.5 168V177M980.5 222V231M986.5 187V192M990.5 186V193M990.5 216V224M994.5 187V195M996.5 230V241M1001.5 176V204M1003.5 178V204M1008.5 164V176M1012.5 229V242M1013.5 204V227M1014.5 174V180M1016.5 169V186M1016.5 235V248M1020.5 238V242M1022.5 176V189M1026.5 186V194M1026.5 221V229M1028.5 189V197M1028.5 221V224M1031.5 197V204M1032.5 187V193M1032.5 220V227M1033.5 197V204M1034.5 194V198M1034.5 213V218M1036.5 194V198M1036.5 216V221M1038.5 211V214M1042.5 225V235M1044.5 148V161M1050.5 227V239M1053.5 184V204M1056.5 224V236M1058.5 232V246M1060.5 225V234M1061.5 204V223M1062.5 170V180M1066.5 176V189M1067.5 204V221M1068.5 173V179M1070.5 181V185M1073.5 204V215M1078.5 189V195M1079.5 196V204M1081.5 196V204M1082.5 184V193M1082.5 213V217M1084.5 162V169M1084.5 223V229M1088.5 158V178M1088.5 228V239M1094.5 227V241M1100.5 173V180M1102.5 224V232M1104.5 177V189M1104.5 229V245M1105.5 204V225M1108.5 233V245M1109.5 204V220M1110.5 169V179M1110.5 222V232M1114.5 189V195M1120.5 215V224M1122.5 191V197M1126.5 186V193M1126.5 213V217M1130.5 172V182M1133.5 204V222M1135.5 204V221M1138.5 178V186M1140.5 223V230M1142.5 174V185M1147.5 187V204M1152.5 164V169M1155.5 204V223M1158.5 176V190M1161.5 193V217M1164.5 217V227M1170.5 215V222M1176.5 227V236M1178.5 230V241M1182.5 148V162M1182.5 230V249M1184.5 161V178M1187.5 204V226M1188.5 173V189M1190.5 227V236M1193.5 181V204M1194.5 231V246M1200.5 179V188M1206.5 183V191M1206.5 217V229M1209.5 204V215M1210.5 193V196M1212.5 212V217M1214.5 195V199M1218.5 174V189M1223.5 178V204M1224.5 171V179M1224.5 230V246M1225.5 182V204M1226.5 166V175M1226.5 237V256M1229.5 183V204M1234.5 173V188M1236.5 224V237M1244.5 226V239M1246.5 223V234M1247.5 204V223M1248.5 219V233M1252.5 185V190M1252.5 221V225M1254.5 190V196M1260.5 182V191M1260.5 219V232M1262.5 221V238M1265.5 204V229M1266.5 230V245M1267.5 173V204M1269.5 204V227M1274.5 226V236M1279.5 204V220M1282.5 173V182M1284.5 172V185M1286.5 223V236M1288.5 221V233M1294.5 189V193M1296.5 223V230M1300.5 213V218M1305.5 204V219M1306.5 172V189M1306.5 220V230M1308.5 222V233M1312.5 179V185M1312.5 222V233M1314.5 181V187M1316.5 174V189M1318.5 174V186M1324.5 220V230M1326.5 173V183M1330.5 172V185M1330.5 220V233M1331.5 204V224M1332.5 219V232M1334.5 225V232M1336.5 229V237M1340.5 188V194M1341.5 204V218M1344.5 187V196M1348.5 217V227M1352.5 160V176M1360.5 228V246M1362.5 228V240M1363.5 179V204M1364.5 174V183M1369.5 187V204M1372.5 169V188M1374.5 173V187M1374.5 224V233M1378.5 186V192M1378.5 231V240M1379.5 204V222M1380.5 223V229M1382.5 216V225M1386.5 213V221M1389.5 199V204M1397.5 181V204M1400.5 169V180M1404.5 220V236M1405.5 182V223M1414.5 173V182M1414.5 223V232M1418.5 219V232M1419.5 204V225M1422.5 179V191M1423.5 204V216M1424.5 182V192M1426.5 187V193M1427.5 204V217M1428.5 187V195M1431.5 204V216M1433.5 197V204M1434.5 190V195M1434.5 212V218M1436.5 192V196M1436.5 213V217M1437.5 195V211M1440.5 243V251M1443.5 204V222M1446.5 158V173M1447.5 185V204M1448.5 228V244M1452.5 237V250M1455.5 204V221M1456.5 164V174M1456.5 232V246M1457.5 188V204M1458.5 165V177M1464.5 177V191M1468.5 185V193M1468.5 220V229M1470.5 184V190M1476.5 213V223M1478.5 191V197M1480.5 193V196M1481.5 191V204M1482.5 217V226M1487.5 204V224M1488.5 155V171" stroke="#bebebe"/>
<path d="M256.5 176V186M258.5 204V216M262.5 177V185M264.5 189V204M268.5 217V226M270.5 181V191M270.5 218V230M274.5 179V192M276.5 191V217M282.5 190V217M286.5 216V225M288.5 176V187M288.5 204V221M290.5 204V217M292.5 217V227M294.5 185V204M296.5 183V222M298.5 204V223M308.5 180V204M308.5 225V241M310.5 167V180M312.5 204V227M318.5 222V241M320.5 224V239M328.5 178V187M330.5 220V230M334.5 204V230M338.5 177V204M340.5 157V176M342.5 236V245M344.5 225V240M348.5 204V224M356.5 204V213M358.5 188V195M358.5 213V219M360.5 212V215M364.5 204V211M366.5 196V198M366.5 209V213M370.5 198V204M372.5 197V204M374.5 198V204M376.5 193V213M378.5 173V187M380.5 219V229M382.5 175V183M382.5 204V220M384.5 179V204M384.5 226V233M386.5 221V236M388.5 228V239M390.5 227V237M394.5 204V223M398.5 184V204M398.5 226V241M400.5 204V226M402.5 186V204M402.5 225V236M404.5 176V191M404.5 218V236M408.5 223V233M410.5 193V204M410.5 219V228M414.5 188V195M414.5 204V219M416.5 196V204M420.5 193V204M422.5 171V179M422.5 204V223M424.5 204V215M426.5 179V190M426.5 204V218M430.5 192V204M432.5 184V191M434.5 184V191M436.5 189V204M438.5 181V190M440.5 188V204M440.5 222V227M448.5 204V219M450.5 184V189M450.5 204V216M452.5 215V226M454.5 185V189M458.5 185V192M462.5 185V192M462.5 204V216M466.5 167V179M466.5 225V232M468.5 174V221M470.5 228V243M476.5 164V180M476.5 223V242M478.5 168V178M480.5 229V238M482.5 181V223M484.5 189V204M486.5 177V187M486.5 204V224M488.5 222V232M492.5 217V223M494.5 187V194M494.5 214V226M498.5 197V204M500.5 210V215M504.5 201V204M504.5 209V212M506.5 208V211M508.5 208V211M510.5 177V184M510.5 204V220M514.5 183V204M516.5 188V204M518.5 204V222M520.5 175V186M520.5 219V235M522.5 169V183M522.5 221V237M526.5 173V186M526.5 204V222M530.5 175V184M530.5 204V226M532.5 176V189M534.5 204V222M538.5 220V227M546.5 194V211M548.5 190V195M550.5 213V218M552.5 179V187M554.5 216V226M558.5 168V177M558.5 229V238M560.5 182V204M566.5 220V229M568.5 184V204M570.5 178V187M570.5 204V217M572.5 173V188M572.5 204V222M574.5 217V229M580.5 217V224M582.5 186V193M586.5 204V214M588.5 194V204M590.5 191V196M590.5 204V212M594.5 197V204M596.5 191V204M598.5 219V227M600.5 221V228M604.5 204V220M606.5 204V220M608.5 177V186M608.5 204V218M610.5 179V188M612.5 223V231M614.5 177V189M616.5 177V185M616.5 222V231M622.5 189V204M624.5 181V187M624.5 204V222M626.5 204V218M628.5 185V191M628.5 220V228M632.5 194V216M634.5 191V204M634.5 215V224M636.5 186V193M638.5 193V204M640.5 188V195M642.5 215V222M644.5 221V228M648.5 175V204M656.5 168V183M656.5 223V238M658.5 173V186M662.5 189V204M662.5 224V229M666.5 180V190M666.5 204V219M670.5 193V204M672.5 185V192M674.5 213V220M676.5 196V204M678.5 191V196M678.5 213V216M680.5 212V216M684.5 191V196M686.5 187V204M688.5 187V204M692.5 180V204M698.5 169V186M698.5 204V220M700.5 222V231M706.5 179V189M706.5 224V236M708.5 188V204M710.5 204V223M712.5 186V204M712.5 223V233M714.5 188V204M714.5 221V232M716.5 192V204M718.5 204V221M720.5 184V190M720.5 218V224M722.5 195V204M722.5 218V223M724.5 216V224M728.5 192V195M728.5 204V214M730.5 188V204M736.5 165V177M738.5 229V242M740.5 231V243M742.5 204V227M744.5 228V235M746.5 172V181M746.5 226V235M748.5 176V192M748.5 204V226M750.5 185V204M752.5 186V225M754.5 184V204M758.5 218V227M760.5 204V218M762.5 215V224M764.5 193V204M768.5 214V218M770.5 213V220M778.5 222V232M780.5 169V185M784.5 186V204M786.5 175V190M788.5 204V218M790.5 189V204M792.5 187V204M800.5 177V187M802.5 178V190M802.5 217V228M808.5 186V191M810.5 216V224M812.5 186V194M812.5 204V215M814.5 215V223M816.5 185V195M818.5 187V194M820.5 218V230M824.5 162V177M824.5 231V247M826.5 173V231M828.5 204V231M830.5 164V178M832.5 185V204M834.5 204V223M836.5 204V229M838.5 182V204M840.5 204V223M842.5 171V185M844.5 222V232M848.5 194V204M848.5 220V231M850.5 189V196M850.5 204V218M852.5 220V229M854.5 192V197M854.5 204V210M856.5 194V197M858.5 195V198M858.5 204V210M860.5 210V213M866.5 204V223M868.5 204V227M870.5 170V184M870.5 204V225M872.5 204V223M874.5 224V237M876.5 168V188M876.5 227V231M878.5 204V220M880.5 175V186M880.5 204V222M884.5 183V222M886.5 228V236M888.5 223V236M892.5 192V204M892.5 220V230M894.5 220V230M896.5 192V204M896.5 220V228M898.5 188V193M898.5 204V216M906.5 190V204M908.5 186V204M908.5 224V238M910.5 229V240M914.5 181V204M920.5 181V204M922.5 171V183M926.5 224V236M928.5 175V186M930.5 204V224M934.5 181V191M934.5 224V233M940.5 187V193M940.5 204V220M942.5 189V194M944.5 190V196M944.5 204V216M946.5 196V204M946.5 214V222M948.5 197V213M950.5 187V194M950.5 213V217M952.5 185V204M952.5 216V225M954.5 183V225M956.5 174V182M958.5 186V221M960.5 225V236M962.5 178V186M962.5 204V221M964.5 188V204M964.5 222V229M966.5 177V185M966.5 220V230M968.5 183V204M970.5 174V184M972.5 222V234M974.5 185V204M976.5 179V226M978.5 174V185M978.5 222V231M982.5 219V230M992.5 193V204M996.5 175V183M998.5 157V174M1002.5 174V204M1002.5 234V244M1004.5 181V231M1006.5 232V253M1008.5 229V243M1010.5 173V188M1012.5 184V204M1014.5 228V239M1018.5 185V222M1024.5 224V231M1030.5 195V204M1030.5 216V223M1038.5 197V199M1040.5 186V195M1040.5 213V219M1044.5 204V221M1046.5 172V204M1050.5 181V204M1052.5 204V221M1054.5 177V185M1054.5 204V226M1056.5 184V204M1058.5 173V186M1060.5 187V204M1062.5 227V239M1064.5 225V235M1068.5 204V218M1072.5 186V195M1074.5 220V224M1076.5 188V197M1076.5 217V222M1078.5 204V214M1080.5 189V195M1080.5 213V219M1086.5 204V223M1092.5 182V204M1092.5 228V247M1094.5 171V181M1096.5 175V187M1096.5 204V229M1098.5 204V225M1100.5 222V230M1106.5 172V186M1106.5 204V223M1112.5 193V224M1114.5 204V221M1116.5 188V195M1118.5 192V194M1118.5 204V217M1120.5 199V204M1124.5 195V213M1128.5 181V190M1128.5 204V218M1130.5 204V223M1132.5 175V186M1132.5 218V231M1136.5 219V233M1138.5 219V229M1140.5 187V204M1144.5 174V188M1144.5 204V221M1146.5 171V184M1146.5 224V233M1148.5 173V184M1148.5 204V222M1150.5 185V204M1150.5 223V235M1152.5 204V223M1154.5 185V221M1156.5 177V186M1156.5 219V230M1158.5 219V229M1160.5 217V227M1162.5 193V220M1164.5 194V204M1166.5 186V193M1166.5 218V224M1168.5 194V214M1170.5 194V204M1172.5 194V215M1174.5 172V183M1174.5 204V220M1178.5 159V178M1180.5 204V231M1184.5 234V243M1186.5 167V182M1188.5 204V225M1190.5 170V184M1192.5 204V221M1194.5 171V182M1196.5 204V220M1198.5 183V204M1198.5 221V234M1200.5 204V221M1202.5 193V204M1202.5 222V231M1204.5 193V218M1208.5 189V196M1208.5 204V215M1214.5 204V210M1216.5 211V217M1218.5 220V232M1220.5 204V226M1222.5 204V226M1228.5 180V204M1228.5 223V237M1230.5 169V183M1230.5 222V237M1232.5 223V235M1234.5 204V222M1236.5 185V204M1238.5 185V204M1240.5 169V183M1240.5 222V235M1242.5 227V239M1246.5 179V189M1248.5 191V204M1250.5 218V230M1254.5 204V217M1256.5 190V196M1256.5 204V216M1258.5 197V204M1262.5 170V183M1264.5 163V182M1264.5 228V239M1266.5 157V175M1268.5 204V230M1270.5 169V183M1270.5 229V244M1276.5 170V182M1276.5 204V221M1278.5 182V204M1278.5 223V232M1280.5 186V204M1282.5 204V221M1286.5 188V204M1288.5 188V204M1290.5 188V194M1290.5 204V221M1292.5 188V192M1292.5 204V220M1296.5 189V193M1298.5 204V215M1300.5 197V204M1302.5 193V198M1304.5 181V191M1310.5 185V204M1310.5 223V232M1314.5 225V234M1320.5 187V204M1320.5 220V228M1324.5 174V185M1326.5 221V230M1328.5 166V183M1328.5 204V220M1334.5 191V204M1336.5 190V204M1338.5 187V194M1338.5 218V232M1342.5 196V219M1344.5 204V218M1346.5 204V214M1350.5 222V234M1354.5 157V176M1354.5 204V226M1356.5 161V172M1356.5 228V250M1358.5 160V179M1362.5 178V204M1364.5 228V236M1366.5 186V204M1366.5 224V236M1368.5 183V204M1370.5 171V184M1372.5 204V222M1376.5 192V204M1380.5 195V204M1382.5 196V204M1384.5 190V196M1384.5 220V225M1386.5 193V197M1388.5 204V215M1390.5 200V204M1390.5 210V215M1392.5 198V199M1394.5 172V186M1394.5 217V225M1398.5 204V224M1400.5 228V239M1402.5 223V240M1404.5 166V184M1406.5 181V224M1408.5 172V187M1408.5 222V229M1410.5 183V204M1412.5 170V181M1420.5 204V220M1422.5 221V228M1430.5 194V204M1430.5 218V222M1432.5 196V204M1432.5 213V220M1438.5 204V214M1440.5 174V187M1442.5 180V224M1444.5 170V179M1448.5 171V185M1452.5 172V186M1454.5 177V190M1454.5 225V235M1458.5 204V219M1460.5 204V221M1462.5 172V184M1462.5 204V225M1464.5 204V222M1466.5 220V229M1470.5 219V228M1472.5 189V196M1472.5 204V218M1474.5 195V215M1476.5 190V196M1478.5 213V221M1482.5 187V204M1484.5 204V222M1486.5 172V187M1486.5 204V217M1488.5 224V232M1490.5 176V183M1490.5 223V235M1492.5 174V186" stroke="#c8c8c8"/>
<path d="M254.5 173V186M254.5 204V219M256.5 204V217M260.5 204V220M264.5 218V229M266.5 217V229M268.5 180V191M272.5 179V191M278.5 191V215M280.5 189V204M280.5 218V225M284.5 193V204M290.5 192V204M292.5 181V187M298.5 175V183M300.5 168V184M302.5 225V241M304.5 181V204M304.5 227V236M306.5 181V227M310.5 226V239M314.5 179V204M314.5 223V237M316.5 181V204M316.5 224V237M320.5 182V204M322.5 176V186M322.5 226V239M324.5 174V185M326.5 188V204M330.5 182V191M332.5 181V204M332.5 228V238M334.5 172V204M336.5 228V247M338.5 230V250M340.5 204V233M342.5 165V178M344.5 180V204M346.5 183V204M346.5 222V238M350.5 177V185M350.5 204V222M352.5 182V190M354.5 217V225M356.5 192V204M362.5 204V210M364.5 199V204M368.5 198V204M368.5 208V211M374.5 212V214M378.5 216V223M380.5 174V182M390.5 181V204M394.5 182V204M396.5 170V183M396.5 204V223M400.5 171V183M408.5 180V194M412.5 194V204M416.5 204V213M418.5 214V221M424.5 186V204M430.5 204V215M432.5 204V214M434.5 204V215M436.5 204V218M442.5 180V192M444.5 219V230M446.5 181V190M446.5 204V222M448.5 179V189M452.5 180V187M454.5 204V215M456.5 192V204M456.5 216V223M460.5 192V204M460.5 219V227M472.5 233V243M474.5 204V225M484.5 226V232M488.5 187V204M490.5 204V221M496.5 194V217M498.5 210V217M500.5 195V196M502.5 204V208M506.5 201V204M512.5 187V222M514.5 221V232M516.5 220V228M518.5 180V204M524.5 186V204M528.5 187V222M532.5 222V236M536.5 184V188M536.5 204V222M538.5 191V204M540.5 204V215M542.5 186V191M544.5 188V192M544.5 204V215M548.5 204V213M550.5 194V204M552.5 213V219M556.5 185V204M556.5 222V231M560.5 227V236M562.5 170V181M564.5 169V183M564.5 224V238M568.5 223V235M576.5 180V193M576.5 204V218M578.5 204V217M580.5 183V192M582.5 204V217M584.5 192V204M586.5 194V204M588.5 212V220M592.5 191V196M594.5 204V210M596.5 204V215M598.5 178V188M600.5 190V204M602.5 189V218M606.5 177V188M610.5 219V228M614.5 204V219M618.5 204V224M620.5 204V218M626.5 182V189M630.5 184V193M630.5 217V227M636.5 204V215M638.5 211V222M642.5 183V193M646.5 167V181M646.5 224V237M648.5 204V228M650.5 163V180M650.5 204V231M652.5 228V242M654.5 169V184M658.5 204V224M660.5 188V218M664.5 177V187M664.5 219V230M668.5 183V192M668.5 218V230M670.5 204V216M672.5 217V224M674.5 194V204M676.5 204V215M680.5 193V197M682.5 198V209M684.5 204V214M690.5 168V185M692.5 224V236M694.5 185V221M696.5 181V222M700.5 183V204M702.5 184V204M708.5 204V222M710.5 188V204M716.5 204V220M718.5 193V204M726.5 194V204M730.5 204V221M732.5 204V231M734.5 182V204M734.5 223V242M740.5 184V204M744.5 187V204M756.5 189V204M760.5 184V192M762.5 194V204M764.5 215V223M766.5 213V220M768.5 191V196M770.5 192V198M772.5 188V190M772.5 204V216M774.5 182V204M776.5 185V217M778.5 173V182M780.5 221V229M782.5 204V224M784.5 204V220M790.5 204V220M792.5 217V228M794.5 181V222M796.5 221V234M798.5 186V204M800.5 204V220M804.5 218V229M806.5 193V204M806.5 216V228M808.5 204V217M816.5 217V224M818.5 204V213M820.5 184V204M822.5 164V174M822.5 204V226M828.5 181V204M830.5 231V247M834.5 167V185M836.5 173V186M838.5 204V229M840.5 176V184M842.5 204V221M844.5 191V204M846.5 204V223M856.5 210V213M862.5 188V204M862.5 217V223M864.5 204V220M866.5 178V204M872.5 186V204M874.5 182V204M882.5 177V184M882.5 204V223M886.5 184V204M890.5 226V235M894.5 186V196M900.5 204V217M902.5 196V204M902.5 215V221M904.5 193V196M904.5 215V218M910.5 159V185M912.5 172V204M916.5 181V233M918.5 184V204M920.5 204V227M922.5 226V235M928.5 204V220M930.5 189V204M932.5 204V222M936.5 220V229M938.5 191V204M938.5 219V231M942.5 204V215M956.5 227V234M960.5 185V204M968.5 204V220M970.5 222V229M980.5 177V187M980.5 204V222M986.5 192V204M986.5 217V224M988.5 185V194M988.5 216V225M990.5 193V216M994.5 195V204M996.5 218V230M1008.5 176V204M1012.5 204V229M1014.5 180V204M1016.5 186V204M1016.5 223V235M1020.5 175V184M1020.5 221V238M1022.5 189V204M1022.5 220V233M1026.5 194V221M1028.5 197V204M1032.5 193V196M1032.5 215V220M1034.5 198V213M1036.5 211V216M1038.5 204V211M1044.5 161V181M1048.5 204V226M1056.5 204V224M1058.5 226V232M1062.5 180V204M1064.5 171V186M1066.5 189V204M1066.5 223V230M1068.5 179V192M1070.5 185V192M1072.5 218V227M1082.5 193V204M1084.5 169V186M1084.5 204V223M1088.5 178V228M1090.5 180V204M1094.5 204V227M1100.5 180V204M1102.5 204V224M1104.5 189V204M1104.5 224V229M1108.5 176V187M1108.5 221V233M1110.5 179V188M1114.5 195V204M1120.5 204V215M1122.5 214V219M1126.5 193V197M1126.5 204V213M1134.5 176V188M1134.5 222V232M1136.5 182V204M1138.5 186V204M1140.5 204V223M1142.5 185V219M1152.5 169V186M1158.5 190V204M1164.5 204V217M1170.5 204V215M1176.5 159V171M1176.5 204V227M1178.5 204V230M1182.5 162V184M1182.5 204V230M1186.5 231V248M1190.5 204V227M1192.5 170V183M1194.5 222V231M1200.5 188V204M1206.5 191V195M1206.5 204V217M1210.5 196V204M1212.5 193V197M1214.5 199V204M1220.5 161V185M1226.5 175V204M1226.5 226V237M1234.5 188V204M1236.5 204V224M1244.5 204V226M1246.5 204V223M1248.5 204V219M1250.5 188V193M1252.5 190V204M1254.5 196V204M1260.5 191V204M1262.5 204V221M1266.5 204V230M1272.5 170V182M1274.5 204V226M1284.5 185V204M1284.5 219V235M1286.5 204V223M1288.5 204V221M1294.5 193V204M1296.5 215V223M1298.5 191V195M1300.5 204V213M1306.5 189V220M1308.5 204V222M1312.5 185V222M1314.5 187V204M1316.5 189V204M1326.5 183V204M1330.5 185V220M1332.5 204V219M1334.5 204V225M1336.5 224V229M1340.5 194V204M1340.5 217V228M1344.5 196V204M1348.5 190V194M1348.5 204V217M1352.5 176V204M1358.5 226V247M1360.5 204V228M1362.5 204V228M1364.5 183V204M1368.5 225V237M1370.5 218V234M1374.5 187V224M1378.5 192V204M1378.5 223V231M1380.5 204V223M1386.5 204V213M1392.5 210V215M1396.5 181V204M1396.5 222V233M1398.5 161V176M1400.5 180V204M1410.5 204V222M1412.5 222V233M1414.5 182V223M1416.5 170V184M1416.5 224V231M1422.5 191V204M1424.5 192V204M1426.5 193V204M1426.5 218V223M1428.5 195V204M1434.5 195V212M1436.5 196V213M1438.5 186V189M1440.5 225V243M1444.5 204V227M1446.5 173V186M1446.5 226V247M1448.5 204V228M1450.5 175V186M1452.5 225V237M1456.5 174V186M1456.5 222V232M1458.5 177V188M1464.5 191V204M1468.5 193V204M1470.5 190V195M1476.5 204V213M1478.5 197V204M1480.5 196V204M1482.5 204V217M1484.5 174V187M1488.5 171V185" stroke="#d2d2d2"/>
<path d="M260.5 188V204M262.5 185V204M268.5 204V217M270.5 191V218M274.5 192V204M286.5 204V216M288.5 187V204M292.5 204V217M300.5 204V229M308.5 204V225M310.5 180V204M318.5 204V222M320.5 204V224M328.5 187V204M330.5 204V220M342.5 204V236M344.5 204V225M358.5 195V204M360.5 204V212M362.5 198V204M366.5 198V209M378.5 187V204M380.5 204V219M382.5 183V204M386.5 204V221M388.5 184V204M390.5 204V227M398.5 204V226M402.5 204V225M408.5 204V223M410.5 204V219M414.5 195V204M422.5 179V204M426.5 190V204M432.5 191V204M434.5 191V204M438.5 190V204M440.5 204V222M450.5 189V204M452.5 204V215M454.5 189V204M458.5 192V204M462.5 192V204M464.5 204V221M466.5 204V225M476.5 180V223M478.5 178V204M480.5 204V229M488.5 204V222M492.5 204V217M494.5 194V214M500.5 204V210M504.5 204V209M506.5 204V208M508.5 194V208M510.5 184V204M520.5 186V204M522.5 183V204M526.5 186V204M530.5 184V204M532.5 189V204M538.5 204V220M548.5 195V204M550.5 204V213M552.5 187V204M554.5 204V216M558.5 177V229M562.5 204V227M566.5 183V220M570.5 187V204M574.5 204V217M580.5 204V217M590.5 196V204M600.5 204V221M604.5 190V204M608.5 186V204M610.5 188V204M614.5 189V204M616.5 204V222M624.5 187V204M628.5 191V204M636.5 193V204M642.5 204V215M644.5 180V221M656.5 183V223M666.5 190V204M672.5 192V204M678.5 204V213M680.5 204V212M684.5 196V204M698.5 186V204M700.5 204V222M706.5 189V224M712.5 204V223M714.5 204V221M720.5 190V204M722.5 204V218M724.5 204V216M726.5 204V217M728.5 195V204M736.5 177V234M738.5 181V204M744.5 204V228M746.5 181V204M748.5 192V204M750.5 204V229M754.5 204V223M758.5 204V218M762.5 204V215M770.5 204V213M778.5 204V222M780.5 185V204M800.5 187V204M802.5 190V217M812.5 194V204M814.5 204V215M816.5 195V204M818.5 194V204M820.5 204V218M824.5 177V231M830.5 178V204M832.5 204V224M842.5 185V204M844.5 204V222M854.5 197V204M858.5 198V204M860.5 204V210M870.5 184V204M874.5 204V224M876.5 204V227M886.5 204V228M888.5 204V223M890.5 186V204M892.5 204V220M894.5 204V220M896.5 204V220M908.5 204V224M910.5 204V229M912.5 204V229M924.5 186V204M926.5 204V224M928.5 186V204M934.5 191V224M940.5 193V204M942.5 194V204M944.5 196V204M946.5 204V214M950.5 194V213M952.5 204V216M960.5 204V225M962.5 186V204M964.5 204V222M966.5 185V220M972.5 204V222M974.5 204V222M978.5 185V204M982.5 204V219M996.5 183V204M998.5 174V204M1002.5 204V234M1006.5 204V232M1008.5 204V229M1010.5 188V204M1014.5 204V228M1024.5 204V224M1028.5 204V221M1030.5 204V216M1036.5 198V204M1040.5 195V213M1042.5 204V225M1050.5 204V227M1054.5 185V204M1060.5 204V225M1062.5 204V227M1064.5 204V225M1072.5 195V204M1074.5 204V220M1076.5 197V217M1078.5 195V204M1080.5 195V213M1082.5 204V213M1092.5 204V228M1094.5 181V204M1096.5 187V204M1100.5 204V222M1106.5 186V204M1110.5 204V222M1116.5 195V204M1118.5 194V204M1122.5 197V204M1128.5 190V204M1130.5 182V204M1132.5 186V218M1136.5 204V219M1146.5 184V224M1148.5 184V204M1150.5 204V223M1156.5 186V219M1158.5 204V219M1160.5 204V217M1166.5 193V218M1174.5 183V204M1178.5 178V204M1184.5 178V234M1186.5 182V204M1188.5 189V204M1190.5 184V204M1194.5 182V204M1198.5 204V221M1202.5 204V222M1208.5 196V204M1212.5 204V212M1216.5 204V211M1218.5 189V220M1224.5 179V230M1228.5 204V223M1230.5 183V222M1232.5 204V223M1240.5 183V222M1242.5 204V227M1246.5 189V204M1250.5 204V218M1252.5 204V221M1256.5 196V204M1260.5 204V219M1262.5 183V204M1264.5 204V228M1270.5 204V229M1276.5 182V204M1278.5 204V223M1282.5 182V204M1290.5 194V204M1292.5 192V204M1304.5 191V204M1310.5 204V223M1314.5 204V225M1318.5 186V204M1320.5 204V220M1324.5 185V220M1326.5 204V221M1328.5 183V204M1338.5 194V218M1350.5 204V222M1354.5 176V204M1356.5 204V228M1364.5 204V228M1372.5 188V204M1382.5 204V216M1384.5 196V204M1386.5 197V204M1390.5 204V210M1392.5 199V204M1394.5 186V217M1400.5 204V228M1402.5 204V223M1404.5 204V220M1408.5 204V222M1412.5 181V204M1418.5 204V219M1422.5 204V221M1430.5 204V218M1432.5 204V213M1440.5 187V204M1444.5 179V204M1448.5 185V204M1452.5 186V204M1454.5 190V204M1462.5 184V204M1468.5 204V220M1470.5 204V219M1472.5 196V204M1476.5 196V204M1478.5 204V213M1486.5 187V204M1488.5 204V224M1490.5 183V204M1492.5 186V204" stroke="#dcdcdc"/>
<path d="M254.5 186V204M256.5 186V204M264.5 204V218M266.5 204V217M268.5 191V204M272.5 191V204M280.5 204V218M292.5 187V204M298.5 183V204M300.5 184V204M302.5 204V225M304.5 204V227M310.5 204V226M314.5 204V223M316.5 204V224M322.5 186V226M324.5 185V204M330.5 191V204M332.5 204V228M336.5 204V228M338.5 204V230M340.5 176V204M342.5 178V204M346.5 204V222M350.5 185V204M352.5 190V204M354.5 204V217M358.5 204V213M368.5 204V208M374.5 204V212M378.5 204V216M380.5 182V204M384.5 204V226M388.5 204V228M396.5 183V204M400.5 183V204M404.5 191V218M408.5 194V204M418.5 204V214M442.5 192V204M444.5 204V219M446.5 190V204M448.5 189V204M452.5 187V204M456.5 204V216M460.5 204V219M466.5 179V204M470.5 204V228M472.5 204V233M484.5 204V226M486.5 187V204M498.5 204V210M500.5 196V204M514.5 204V221M516.5 204V220M520.5 204V219M522.5 204V221M532.5 204V222M536.5 188V204M542.5 191V204M544.5 192V204M552.5 204V213M556.5 204V222M560.5 204V227M562.5 181V204M564.5 183V224M568.5 204V223M572.5 188V204M576.5 193V204M580.5 192V204M582.5 193V204M588.5 204V212M592.5 196V204M598.5 188V219M606.5 188V204M610.5 204V219M612.5 204V223M616.5 185V204M626.5 189V204M628.5 204V220M630.5 193V217M634.5 204V215M638.5 204V211M640.5 195V204M642.5 193V204M646.5 181V224M650.5 180V204M652.5 204V228M654.5 184V204M658.5 186V204M662.5 204V224M664.5 187V219M668.5 192V218M672.5 204V217M674.5 204V213M678.5 196V204M680.5 197V204M690.5 185V204M692.5 204V224M720.5 204V218M734.5 204V223M738.5 204V229M740.5 204V231M746.5 204V226M760.5 192V204M764.5 204V215M766.5 204V213M768.5 196V214M770.5 198V204M772.5 190V204M778.5 182V204M780.5 204V221M786.5 190V204M792.5 204V217M796.5 204V221M804.5 204V218M806.5 204V216M808.5 191V204M810.5 204V216M816.5 204V217M822.5 174V204M830.5 204V231M834.5 185V204M836.5 186V204M840.5 184V204M848.5 204V220M850.5 196V204M852.5 204V220M856.5 197V210M862.5 204V217M876.5 188V204M880.5 186V204M882.5 184V204M890.5 204V226M894.5 196V204M898.5 193V204M902.5 204V215M904.5 196V215M910.5 185V204M922.5 183V226M936.5 204V220M938.5 204V219M956.5 182V227M970.5 184V222M978.5 204V222M980.5 187V204M986.5 204V217M988.5 194V216M996.5 204V218M1016.5 204V223M1020.5 184V221M1022.5 204V220M1032.5 196V215M1036.5 204V211M1038.5 199V204M1044.5 181V204M1058.5 186V226M1064.5 186V204M1066.5 204V223M1068.5 192V204M1070.5 192V204M1072.5 204V218M1084.5 186V204M1104.5 204V224M1108.5 187V221M1110.5 188V204M1122.5 204V214M1126.5 197V204M1134.5 188V222M1138.5 204V219M1144.5 188V204M1152.5 186V204M1176.5 171V204M1182.5 184V204M1186.5 204V231M1192.5 183V204M1194.5 204V222M1206.5 195V204M1212.5 197V204M1220.5 185V204M1226.5 204V226M1250.5 193V204M1264.5 182V204M1266.5 175V204M1270.5 183V204M1272.5 182V204M1284.5 204V219M1296.5 193V215M1298.5 195V204M1302.5 198V204M1336.5 204V224M1340.5 204V217M1348.5 194V204M1356.5 172V204M1358.5 179V226M1366.5 204V224M1368.5 204V225M1370.5 184V218M1378.5 204V223M1384.5 204V220M1392.5 204V210M1396.5 204V222M1398.5 176V204M1404.5 184V204M1408.5 187V204M1412.5 204V222M1416.5 184V224M1426.5 204V218M1438.5 189V204M1440.5 204V225M1446.5 186V226M1450.5 186V204M1452.5 204V225M1454.5 204V225M1456.5 186V222M1458.5 188V204M1466.5 204V220M1470.5 195V204M1484.5 187V204M1488.5 185V204M1490.5 204V223" stroke="#e6e6e6"/></g>
<path d="M303.5 104V304M353.5 104V304M403.5 104V304M503.5 104V304M553.5 104V304M603.5 104V304M704.5 104V304M754.5 104V304M804.5 104V304M904.5 104V304M954.5 104V304M1004.5 104V304M1105.5 104V304M1155.5 104V304M1205.5 104V304M1305.5 104V304M1355.5 104V304M1405.5 104V304" stroke="#8c8c8c" stroke-width="1" opacity="0.3"/>
<path d="M453.5 104V304M654.5 104V304M854.5 104V304M1055.5 104V304M1255.5 104V304M1456.5 104V304" stroke="#bcbcbc" stroke-width="1" opacity="0.35"/>
<path d="M253 104.5H1494.5V304.5H253" stroke="#9a9a9a" stroke-width="1" fill="none"/>
<path d="M253.5 104V305" stroke="#c8c8c8" stroke-width="1"/>

</g>
<use href="#ch" y="213"/>
<rect x="253.00" y="92" width="1.5" height="6" fill="#f4f4f4"/><rect x="302.38" y="93" width="1.5" height="5" fill="#e0e0e0"/><rect x="352.50" y="93" width="1.5" height="5" fill="#e0e0e0"/><rect x="402.62" y="93" width="1.5" height="5" fill="#e0e0e0"/><rect x="452.50" y="92" width="2" height="6" fill="#f4f4f4"/><rect x="502.88" y="93" width="1.5" height="5" fill="#e0e0e0"/><rect x="553.00" y="93" width="1.5" height="5" fill="#e0e0e0"/><rect x="603.12" y="93" width="1.5" height="5" fill="#e0e0e0"/><rect x="653.00" y="92" width="2" height="6" fill="#f4f4f4"/><rect x="703.38" y="93" width="1.5" height="5" fill="#e0e0e0"/><rect x="753.50" y="93" width="1.5" height="5" fill="#e0e0e0"/><rect x="803.62" y="93" width="1.5" height="5" fill="#e0e0e0"/><rect x="853.50" y="92" width="2" height="6" fill="#f4f4f4"/><rect x="903.88" y="93" width="1.5" height="5" fill="#e0e0e0"/><rect x="954.00" y="93" width="1.5" height="5" fill="#e0e0e0"/><rect x="1004.12" y="93" width="1.5" height="5" fill="#e0e0e0"/><rect x="1054.00" y="92" width="2" height="6" fill="#f4f4f4"/><rect x="1104.38" y="93" width="1.5" height="5" fill="#e0e0e0"/><rect x="1154.50" y="93" width="1.5" height="5" fill="#e0e0e0"/><rect x="1204.62" y="93" width="1.5" height="5" fill="#e0e0e0"/><rect x="1254.50" y="92" width="2" height="6" fill="#f4f4f4"/><rect x="1304.88" y="93" width="1.5" height="5" fill="#e0e0e0"/><rect x="1355.00" y="93" width="1.5" height="5" fill="#e0e0e0"/><rect x="1405.12" y="93" width="1.5" height="5" fill="#e0e0e0"/><rect x="1455.00" y="92" width="2" height="6" fill="#f4f4f4"/>
<text x="253.30" y="91" font-family="Liberation Sans" font-size="14" fill="#fff">0</text><text x="453.80" y="91" font-family="Liberation Sans" font-size="14" fill="#fff">1</text><text x="654.30" y="91" font-family="Liberation Sans" font-size="14" fill="#fff">2</text><text x="854.80" y="91" font-family="Liberation Sans" font-size="14" fill="#fff">3</text><text x="1055.30" y="91" font-family="Liberation Sans" font-size="14" fill="#fff">4</text><text x="1255.80" y="91" font-family="Liberation Sans" font-size="14" fill="#fff">5</text><text x="1456.30" y="91" font-family="Liberation Sans" font-size="14" fill="#fff">6</text>
</svg>
<!-- toolbar icons -->
<svg class="a" style="left:0;top:22px" width="460" height="32" viewBox="0 22 460 32">
 <defs>
  <filter id="sh" x="-30%" y="-30%" width="160%" height="160%"><feDropShadow dx="0" dy="0.5" stdDeviation="0.7" flood-color="#000" flood-opacity="0.9"/></filter>
  <linearGradient id="org" x1="0" y1="0" x2="1" y2="0"><stop offset="0" stop-color="#e9a94e"/><stop offset="0.5" stop-color="#f6c77a"/><stop offset="1" stop-color="#e8a447"/></linearGradient>
 </defs>
 <g filter="url(#sh)">
  <circle cx="12" cy="33.3" r="1.9" fill="#f2f2ee"/>
  <circle cx="16.8" cy="31.6" r="1.9" fill="#f2f2ee"/>
  <circle cx="19.1" cy="35.5" r="1.9" fill="#f2f2ee"/>
  <path d="M15.2 39.6 L19.3 43.4 L23.4 39.6" stroke="#f2f2ee" stroke-width="2.8" fill="none" stroke-linecap="round" stroke-linejoin="round"/>
 </g>
 <g filter="url(#sh)">
  <path d="M41.6 29.1 H51.3 L53.9 31.7 V45.8 H41.6 Z" fill="#fdfdfd"/>
  <rect x="43.4" y="31.6" width="8.5" height="12.6" fill="#b7cde8"/>
  <rect x="43.8" y="32.1" width="6" height="0.9" fill="#7f9cc4"/>
  <rect x="44" y="35" width="5.2" height="3.6" fill="#6b6a52"/>
  <rect x="44.5" y="36.2" width="1.2" height="1.4" fill="#d7c46a"/>
  <rect x="47" y="36.2" width="1.2" height="1.4" fill="#d7c46a"/>
  <rect x="43.8" y="40" width="7.5" height="0.8" fill="#9cb5d6"/>
  <path d="M50.3 43.2 H53 L51.6 45.4 Z" fill="#000"/>
 </g>
 <g filter="url(#sh)">
  <rect x="71.4" y="29.9" width="9.9" height="9.4" fill="#fbfbfb"/>
  <rect x="74" y="32.2" width="5.2" height="1.2" fill="#aeaea8"/>
  <rect x="74" y="34.2" width="5.2" height="1.2" fill="#b4b4ae"/>
  <rect x="74" y="36.2" width="3" height="0.9" fill="#c4c4be"/>
  <rect x="77" y="35.1" width="9.9" height="10" fill="#fbfbfb"/>
  <rect x="79.5" y="37.4" width="5.2" height="1.2" fill="#aeaea8"/>
  <rect x="79.5" y="39.5" width="5.2" height="1.2" fill="#b4b4ae"/>
  <rect x="79.5" y="41.5" width="3" height="0.9" fill="#c4c4be"/>
 </g>
 <g filter="url(#sh)">
  <path d="M103.3 29.8 C102.6 32 104.5 36 107.6 38.8 L108.3 38 C107 34.5 105.2 31 103.3 29.8 Z" fill="#fafafa" stroke="#fafafa" stroke-width="0.8"/>
  <path d="M112.4 29.6 C113 32 111.2 36 108.2 38.8 L107.6 38 C108.8 34.5 110.6 31 112.4 29.6 Z" fill="#fafafa" stroke="#fafafa" stroke-width="0.8"/>
  <circle cx="104.3" cy="42.3" r="2.1" fill="none" stroke="#e52626" stroke-width="1.7"/>
  <circle cx="111.4" cy="42.3" r="2.1" fill="none" stroke="#e52626" stroke-width="1.7"/>
 </g>
 <g filter="url(#sh)">
  <rect x="128.6" y="30.3" width="13.3" height="14.3" rx="1.6" fill="url(#org)"/>
  <rect x="131.2" y="31" width="7.3" height="2.3" rx="0.6" fill="#e0e0dc"/>
  <rect x="133" y="29" width="4.8" height="2.6" rx="0.6" fill="#f4f4f0"/>
  <rect x="134.1" y="35.1" width="10" height="10.1" fill="#fbfbfb"/>
  <rect x="136.6" y="37.4" width="5" height="1.3" fill="#b0b0aa"/>
  <rect x="136.6" y="39.5" width="5" height="1.1" fill="#bbbbb5"/>
  <rect x="136.6" y="41.3" width="2.6" height="0.9" fill="#c8c8c2"/>
 </g>
 <path d="M159.7 36 H167.7 L163.7 40 Z" fill="#f2f2f2"/>
 <g id="gears" filter="url(#sh)">
  <path d="M186 29.4 H192 V35.5 H186 Z" fill="#f4f4f4"/>
  <circle cx="189.1" cy="32.4" r="0.9" fill="#222"/>
  <path d="M184.6 38 H190.4 V44.2 H184.6 Z" fill="#f4f4f4"/>
  <circle cx="187.5" cy="41" r="0.9" fill="#222"/>
  <path d="M194.6 32.6 L195.9 34.3 L198 33.9 L198.3 36 L200.2 37 L199.1 38.8 L200 40.8 L197.9 41.3 L197.3 43.4 L195.3 42.6 L193.6 43.8 L192.6 41.9 L190.5 41.6 L190.9 39.5 L189.5 38 L191.2 36.7 L191.1 34.6 L193.2 34.7 Z" fill="#e8e8e6"/>
  <circle cx="194.8" cy="38.2" r="1.1" fill="#222"/>
 </g>
 <path d="M216 36 H224 L220 40 Z" fill="#f2f2f2"/>
 <path d="M298.8 35.3 H307.2 L303 40 Z" fill="#f2f2f2"/>
 <path d="M409 37.6 H417" stroke="#f2f2f2" stroke-width="1.4"/>
 <path d="M436.2 37.6 H444.2 M440.2 33.6 V41.6" stroke="#f2f2f2" stroke-width="1.4"/>
</svg>
<!-- left panel icons -->
<svg class="a" style="left:0;top:54px" width="205" height="26" viewBox="0 54 205 26">
 <use href="#gears" transform="translate(-150.8 29.6)"/>
 <path d="M65.8 65.8 H73.7 L69.75 69.6 Z" fill="#f2f2f2"/>
</svg>
<svg class="a" style="left:205px;top:54px" width="48" height="26" viewBox="205 54 48 26">
 <path d="M221.4 61 L215.5 66.6 L221.4 72.2" stroke="#fff" stroke-width="2.4" fill="none" stroke-linecap="round" stroke-linejoin="round"/>
 <path d="M240.9 61 L246.8 66.6 L240.9 72.2" stroke="#fff" stroke-width="2.4" fill="none" stroke-linecap="round" stroke-linejoin="round"/>
</svg>
<div class="t" style="left:214px;top:303.5px;transform:rotate(-90deg);transform-origin:0 0;font-size:12px;letter-spacing:0.45px">44100 [Hz]</div>
<div class="t" style="left:214px;top:516.5px;transform:rotate(-90deg);transform-origin:0 0;font-size:12px;letter-spacing:0.45px">44100 [Hz]</div>

<!-- scrollbars -->
<div class="a" style="left:1495px;top:98px;width:9px;height:738px;background:#333"></div>
<div class="a" style="left:1497px;top:110px;width:5px;height:32px;border-radius:3px;background:#b8b8b8"></div>
<div class="a" style="left:253px;top:836px;width:1242px;height:10px;background:#303030"></div>
<div class="a" style="left:265px;top:839px;width:31px;height:5px;border-radius:3px;background:#b8b8b8"></div>
<svg class="a" style="left:250px;top:828px" width="1254" height="18" viewBox="250 828 1254 18"><path d="M260 838.5 V843.5 L256.5 841 Z" fill="#5a5a5a"/><path d="M1488 838.5 V844.3 L1492 841.4 Z" fill="#d0d0d0"/><path d="M1497 830.7 H1502 L1499.5 833.6 Z" fill="#5a5a5a"/></svg>
<svg class="a" style="left:1495px;top:98px" width="9" height="10" viewBox="1495 98 9 10"><path d="M1497 103.8 H1502 L1499.5 101.5 Z" fill="#5a5a5a"/></svg>
</body></html>
